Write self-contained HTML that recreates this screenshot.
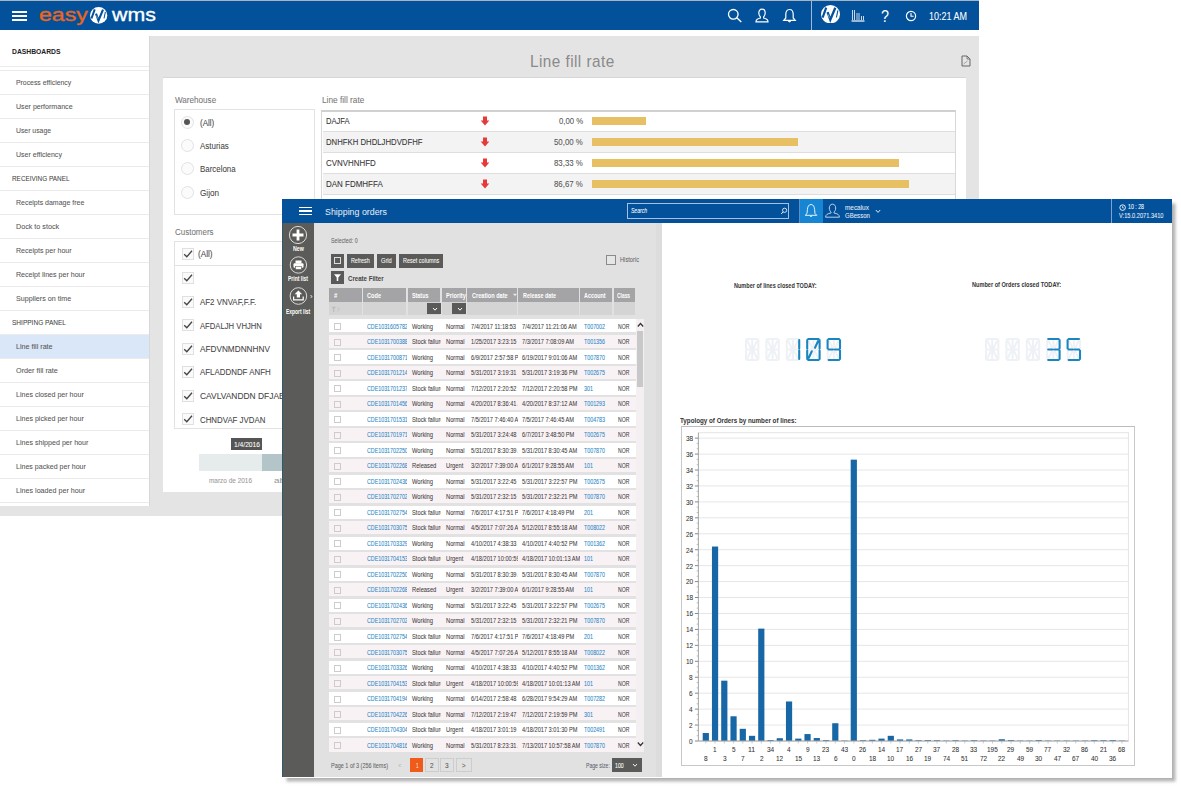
<!DOCTYPE html><html><head><meta charset="utf-8"><style>html,body{margin:0;padding:0;width:1181px;height:787px;overflow:hidden;background:#fff;position:relative}body{font-family:'Liberation Sans',sans-serif}</style></head><body><div style="position:absolute;left:0.00px;top:0.00px;width:979.00px;height:1.00px;background:#a8b4c2;"></div>
<div style="position:absolute;left:0.00px;top:1.00px;width:979.00px;height:29.00px;background:#02519a;"></div>
<div style="position:absolute;left:12.00px;top:11.00px;width:15.00px;height:1.60px;background:#fff;"></div>
<div style="position:absolute;left:12.00px;top:15.00px;width:15.00px;height:1.60px;background:#fff;"></div>
<div style="position:absolute;left:12.00px;top:19.00px;width:15.00px;height:1.60px;background:#fff;"></div>
<span style="position:absolute;left:39.40px;top:7.00px;white-space:pre;font-family:'Liberation Sans',sans-serif;font-size:17.50px;line-height:17.50px;font-weight:400;font-style:normal;color:#e8661e;letter-spacing:0px;-webkit-text-stroke:0.35px #e8661e;transform-origin:0 0;transform:scaleX(1.3173)">easy</span>
<span style="position:absolute;left:111.50px;top:7.00px;white-space:pre;font-family:'Liberation Sans',sans-serif;font-size:17.50px;line-height:17.50px;font-weight:400;font-style:normal;color:#fff;letter-spacing:0px;-webkit-text-stroke:0.3px #fff;transform-origin:0 0;transform:scaleX(1.2177)">wms</span>
<svg style="position:absolute;left:90.3px;top:7.2px" width="17.3" height="16.8" viewBox="0 0 19 18.4" preserveAspectRatio="none"><ellipse cx="9.5" cy="9.2" rx="9.5" ry="9.2" fill="#fff"/><path d="M5.2 2.6 L1.6 12.6" stroke="#02519a" stroke-width="2.2" fill="none"/><path d="M6.6 7.2 L9.3 14.8 L14.3 2.8" stroke="#02519a" stroke-width="2.3" fill="none" stroke-linejoin="miter"/><path d="M16.9 5.3 L15.4 12.5" stroke="#02519a" stroke-width="1.1" fill="none"/><path d="M7.2 9.5 L8.4 12.8" stroke="#fff" stroke-width="0.5" fill="none"/></svg>
<svg style="position:absolute;left:727px;top:8px" width="16" height="15" viewBox="0 0 16 15"><circle cx="6.3" cy="6.3" r="4.8" fill="none" stroke="#fff" stroke-width="1.3"/><path d="M9.8 9.8 L14.3 14" stroke="#fff" stroke-width="1.4"/></svg>
<svg style="position:absolute;left:754px;top:8px" width="16" height="15" viewBox="0 0 16 15"><path d="M8 1.2 C5.8 1.2 4.8 3 4.8 5 C4.8 6.8 5.6 8.2 6.4 9 L6.4 10 C3.5 10.6 2 11.5 2 13.8 L14 13.8 C14 11.5 12.5 10.6 9.6 10 L9.6 9 C10.4 8.2 11.2 6.8 11.2 5 C11.2 3 10.2 1.2 8 1.2 Z" fill="none" stroke="#fff" stroke-width="1.2"/></svg>
<svg style="position:absolute;left:782px;top:8px" width="15" height="15" viewBox="0 0 15 15"><path d="M7.5 1.5 C4.8 1.5 3.8 3.8 3.8 6.5 L3.8 10 L1.8 12.3 L13.2 12.3 L11.2 10 L11.2 6.5 C11.2 3.8 10.2 1.5 7.5 1.5 Z" fill="none" stroke="#fff" stroke-width="1.2"/><path d="M6 13 L7.5 14 L9 13" fill="#fff" stroke="#fff" stroke-width="0.8"/></svg>
<div style="position:absolute;left:811.00px;top:1.00px;width:1.00px;height:29.00px;background:#9fb8d6;"></div>
<svg style="position:absolute;left:820.9px;top:5.1px" width="19" height="18.4" viewBox="0 0 19 18.4" preserveAspectRatio="none"><ellipse cx="9.5" cy="9.2" rx="9.5" ry="9.2" fill="#fff"/><path d="M5.2 2.6 L1.6 12.6" stroke="#02519a" stroke-width="2.2" fill="none"/><path d="M6.6 7.2 L9.3 14.8 L14.3 2.8" stroke="#02519a" stroke-width="2.3" fill="none" stroke-linejoin="miter"/><path d="M16.9 5.3 L15.4 12.5" stroke="#02519a" stroke-width="1.1" fill="none"/><path d="M7.2 9.5 L8.4 12.8" stroke="#fff" stroke-width="0.5" fill="none"/></svg>
<svg style="position:absolute;left:850px;top:8px" width="16" height="15" viewBox="0 0 16 15"><path d="M2.5 12 L2.5 2 M4.5 12 L4.5 2 M7 12 L7 5 M9 12 L9 5 M11.5 12 L11.5 8 M13.5 12 L13.5 8" stroke="#c9d7ea" stroke-width="1"/><path d="M1.5 13 L14.5 13" stroke="#fff" stroke-width="1.2"/></svg>
<span style="position:absolute;left:880.50px;top:8.00px;white-space:pre;font-family:'Liberation Sans',sans-serif;font-size:17.00px;line-height:17.00px;font-weight:400;font-style:normal;color:#fff;letter-spacing:0px;transform-origin:0 0;transform:scaleX(0.8449)">?</span>
<svg style="position:absolute;left:905px;top:10px" width="12" height="12" viewBox="0 0 12 12"><circle cx="6" cy="6" r="4.6" fill="none" stroke="#fff" stroke-width="1.2"/><path d="M6 3 L6 6.3 L8.6 6.3" fill="none" stroke="#fff" stroke-width="1.1"/></svg>
<span style="position:absolute;left:929.00px;top:11.00px;white-space:pre;font-family:'Liberation Sans',sans-serif;font-size:10.50px;line-height:10.50px;font-weight:400;font-style:normal;color:#fff;letter-spacing:0px;-webkit-text-stroke:0.06px #fff;transform-origin:0 0;transform:scaleX(0.8563)">10:21 AM</span>
<div style="position:absolute;left:149.00px;top:36.00px;width:830.00px;height:480.00px;background:#e4e4e4;"></div>
<div style="position:absolute;left:0.00px;top:505.50px;width:979.00px;height:10.50px;background:#e4e4e4;"></div>
<div style="position:absolute;left:0.00px;top:30.00px;width:149.00px;height:475.50px;background:#fff;"></div>
<div style="position:absolute;left:148.50px;top:36.00px;width:1.00px;height:469.50px;background:#d8d8d8;"></div>
<span style="position:absolute;left:12.20px;top:48.00px;white-space:pre;font-family:'Liberation Sans',sans-serif;font-size:7.40px;line-height:7.40px;font-weight:700;font-style:normal;color:#222;letter-spacing:0px;transform-origin:0 0;transform:scaleX(0.9137)">DASHBOARDS</span>
<div style="position:absolute;left:0.00px;top:65.50px;width:148.50px;height:1.00px;background:#ebebeb;"></div>
<div style="position:absolute;left:0.00px;top:70.30px;width:148.50px;height:1.00px;background:#ebebeb;"></div>
<div style="position:absolute;left:0.00px;top:94.30px;width:148.50px;height:1.00px;background:#ebebeb;"></div>
<span style="position:absolute;left:16.00px;top:79.00px;white-space:pre;font-family:'Liberation Sans',sans-serif;font-size:8.00px;line-height:8.00px;font-weight:400;font-style:normal;color:#555;letter-spacing:0px;-webkit-text-stroke:0.06px #555;transform-origin:0 0;transform:scaleX(0.8581)">Process efficiency</span>
<div style="position:absolute;left:0.00px;top:118.30px;width:148.50px;height:1.00px;background:#ebebeb;"></div>
<span style="position:absolute;left:16.00px;top:103.00px;white-space:pre;font-family:'Liberation Sans',sans-serif;font-size:8.00px;line-height:8.00px;font-weight:400;font-style:normal;color:#555;letter-spacing:0px;-webkit-text-stroke:0.06px #555;transform-origin:0 0;transform:scaleX(0.8839)">User performance</span>
<div style="position:absolute;left:0.00px;top:142.30px;width:148.50px;height:1.00px;background:#ebebeb;"></div>
<span style="position:absolute;left:16.00px;top:127.00px;white-space:pre;font-family:'Liberation Sans',sans-serif;font-size:8.00px;line-height:8.00px;font-weight:400;font-style:normal;color:#555;letter-spacing:0px;-webkit-text-stroke:0.06px #555;transform-origin:0 0;transform:scaleX(0.8553)">User usage</span>
<div style="position:absolute;left:0.00px;top:166.30px;width:148.50px;height:1.00px;background:#ebebeb;"></div>
<span style="position:absolute;left:16.00px;top:151.00px;white-space:pre;font-family:'Liberation Sans',sans-serif;font-size:8.00px;line-height:8.00px;font-weight:400;font-style:normal;color:#555;letter-spacing:0px;-webkit-text-stroke:0.06px #555;transform-origin:0 0;transform:scaleX(0.8772)">User efficiency</span>
<div style="position:absolute;left:0.00px;top:190.30px;width:148.50px;height:1.00px;background:#ebebeb;"></div>
<span style="position:absolute;left:11.90px;top:175.00px;white-space:pre;font-family:'Liberation Sans',sans-serif;font-size:7.60px;line-height:7.60px;font-weight:400;font-style:normal;color:#444;letter-spacing:0px;-webkit-text-stroke:0.06px #444;transform-origin:0 0;transform:scaleX(0.8427)">RECEIVING PANEL</span>
<div style="position:absolute;left:0.00px;top:214.30px;width:148.50px;height:1.00px;background:#ebebeb;"></div>
<span style="position:absolute;left:16.00px;top:199.00px;white-space:pre;font-family:'Liberation Sans',sans-serif;font-size:8.00px;line-height:8.00px;font-weight:400;font-style:normal;color:#555;letter-spacing:0px;-webkit-text-stroke:0.06px #555;transform-origin:0 0;transform:scaleX(0.8727)">Receipts damage free</span>
<div style="position:absolute;left:0.00px;top:238.30px;width:148.50px;height:1.00px;background:#ebebeb;"></div>
<span style="position:absolute;left:16.00px;top:223.00px;white-space:pre;font-family:'Liberation Sans',sans-serif;font-size:8.00px;line-height:8.00px;font-weight:400;font-style:normal;color:#555;letter-spacing:0px;-webkit-text-stroke:0.06px #555;transform-origin:0 0;transform:scaleX(0.8976)">Dock to stock</span>
<div style="position:absolute;left:0.00px;top:262.30px;width:148.50px;height:1.00px;background:#ebebeb;"></div>
<span style="position:absolute;left:16.00px;top:247.00px;white-space:pre;font-family:'Liberation Sans',sans-serif;font-size:8.00px;line-height:8.00px;font-weight:400;font-style:normal;color:#555;letter-spacing:0px;-webkit-text-stroke:0.06px #555;transform-origin:0 0;transform:scaleX(0.8804)">Receipts per hour</span>
<div style="position:absolute;left:0.00px;top:286.30px;width:148.50px;height:1.00px;background:#ebebeb;"></div>
<span style="position:absolute;left:16.00px;top:271.00px;white-space:pre;font-family:'Liberation Sans',sans-serif;font-size:8.00px;line-height:8.00px;font-weight:400;font-style:normal;color:#555;letter-spacing:0px;-webkit-text-stroke:0.06px #555;transform-origin:0 0;transform:scaleX(0.8853)">Receipt lines per hour</span>
<div style="position:absolute;left:0.00px;top:310.30px;width:148.50px;height:1.00px;background:#ebebeb;"></div>
<span style="position:absolute;left:16.00px;top:295.00px;white-space:pre;font-family:'Liberation Sans',sans-serif;font-size:8.00px;line-height:8.00px;font-weight:400;font-style:normal;color:#555;letter-spacing:0px;-webkit-text-stroke:0.06px #555;transform-origin:0 0;transform:scaleX(0.8930)">Suppliers on time</span>
<div style="position:absolute;left:0.00px;top:334.30px;width:148.50px;height:1.00px;background:#ebebeb;"></div>
<span style="position:absolute;left:11.90px;top:319.00px;white-space:pre;font-family:'Liberation Sans',sans-serif;font-size:7.60px;line-height:7.60px;font-weight:400;font-style:normal;color:#444;letter-spacing:0px;-webkit-text-stroke:0.06px #444;transform-origin:0 0;transform:scaleX(0.8606)">SHIPPING PANEL</span>
<div style="position:absolute;left:0.00px;top:335.00px;width:148.50px;height:23.30px;background:#d9e7f8;"></div>
<div style="position:absolute;left:0.00px;top:358.30px;width:148.50px;height:1.00px;background:#ebebeb;"></div>
<span style="position:absolute;left:16.00px;top:343.00px;white-space:pre;font-family:'Liberation Sans',sans-serif;font-size:8.00px;line-height:8.00px;font-weight:400;font-style:normal;color:#555;letter-spacing:0px;-webkit-text-stroke:0.06px #555;transform-origin:0 0;transform:scaleX(0.8944)">Line fill rate</span>
<div style="position:absolute;left:0.00px;top:382.30px;width:148.50px;height:1.00px;background:#ebebeb;"></div>
<span style="position:absolute;left:16.00px;top:367.00px;white-space:pre;font-family:'Liberation Sans',sans-serif;font-size:8.00px;line-height:8.00px;font-weight:400;font-style:normal;color:#555;letter-spacing:0px;-webkit-text-stroke:0.06px #555;transform-origin:0 0;transform:scaleX(0.9063)">Order fill rate</span>
<div style="position:absolute;left:0.00px;top:406.30px;width:148.50px;height:1.00px;background:#ebebeb;"></div>
<span style="position:absolute;left:16.00px;top:391.00px;white-space:pre;font-family:'Liberation Sans',sans-serif;font-size:8.00px;line-height:8.00px;font-weight:400;font-style:normal;color:#555;letter-spacing:0px;-webkit-text-stroke:0.06px #555;transform-origin:0 0;transform:scaleX(0.8863)">Lines closed per hour</span>
<div style="position:absolute;left:0.00px;top:430.30px;width:148.50px;height:1.00px;background:#ebebeb;"></div>
<span style="position:absolute;left:16.00px;top:415.00px;white-space:pre;font-family:'Liberation Sans',sans-serif;font-size:8.00px;line-height:8.00px;font-weight:400;font-style:normal;color:#555;letter-spacing:0px;-webkit-text-stroke:0.06px #555;transform-origin:0 0;transform:scaleX(0.8863)">Lines picked per hour</span>
<div style="position:absolute;left:0.00px;top:454.30px;width:148.50px;height:1.00px;background:#ebebeb;"></div>
<span style="position:absolute;left:16.00px;top:439.00px;white-space:pre;font-family:'Liberation Sans',sans-serif;font-size:8.00px;line-height:8.00px;font-weight:400;font-style:normal;color:#555;letter-spacing:0px;-webkit-text-stroke:0.06px #555;transform-origin:0 0;transform:scaleX(0.8895)">Lines shipped per hour</span>
<div style="position:absolute;left:0.00px;top:478.30px;width:148.50px;height:1.00px;background:#ebebeb;"></div>
<span style="position:absolute;left:16.00px;top:463.00px;white-space:pre;font-family:'Liberation Sans',sans-serif;font-size:8.00px;line-height:8.00px;font-weight:400;font-style:normal;color:#555;letter-spacing:0px;-webkit-text-stroke:0.06px #555;transform-origin:0 0;transform:scaleX(0.8829)">Lines packed per hour</span>
<div style="position:absolute;left:0.00px;top:502.30px;width:148.50px;height:1.00px;background:#ebebeb;"></div>
<span style="position:absolute;left:16.00px;top:487.00px;white-space:pre;font-family:'Liberation Sans',sans-serif;font-size:8.00px;line-height:8.00px;font-weight:400;font-style:normal;color:#555;letter-spacing:0px;-webkit-text-stroke:0.06px #555;transform-origin:0 0;transform:scaleX(0.8929)">Lines loaded per hour</span>
<div style="position:absolute;left:162.50px;top:77.00px;width:803.50px;height:415.00px;background:#fff;border-top:1px solid #d6d6d6;box-sizing:border-box"></div>
<span style="position:absolute;left:530.40px;top:53.00px;white-space:pre;font-family:'Liberation Sans',sans-serif;font-size:17.00px;line-height:17.00px;font-weight:400;font-style:normal;color:#8a8a8a;letter-spacing:0.5px;transform-origin:0 0;transform:scaleX(0.9006)">Line fill rate</span>
<svg style="position:absolute;left:961px;top:55px" width="10" height="12" viewBox="0 0 10 12"><path d="M1 1 L6 1 L9 4 L9 11 L1 11 Z" fill="none" stroke="#666" stroke-width="1"/><path d="M6 1 L6 4 L9 4" fill="none" stroke="#666" stroke-width="0.8"/><path d="M2.5 9 L6.5 6" stroke="#888" stroke-width="0.7"/></svg>
<span style="position:absolute;left:174.70px;top:96.00px;white-space:pre;font-family:'Liberation Sans',sans-serif;font-size:8.40px;line-height:8.40px;font-weight:400;font-style:normal;color:#777;letter-spacing:0px;-webkit-text-stroke:0.06px #777;transform-origin:0 0;transform:scaleX(0.9687)">Warehouse</span>
<span style="position:absolute;left:321.50px;top:96.00px;white-space:pre;font-family:'Liberation Sans',sans-serif;font-size:8.40px;line-height:8.40px;font-weight:400;font-style:normal;color:#777;letter-spacing:0px;-webkit-text-stroke:0.06px #777;transform-origin:0 0;transform:scaleX(0.9877)">Line fill rate</span>
<div style="position:absolute;left:174.30px;top:109.30px;width:140.80px;height:105.50px;background:#fff;border:1px solid #e3e3e3;box-sizing:border-box"></div>
<div style="position:absolute;left:180.70px;top:115.70px;width:13px;height:13px;border-radius:50%;border:1px solid #e2e2e2;box-sizing:border-box;background:#fbfbfb"></div>
<div style="position:absolute;left:184.20px;top:119.20px;width:6px;height:6px;border-radius:50%;background:#555"></div>
<span style="position:absolute;left:199.70px;top:119.00px;white-space:pre;font-family:'Liberation Sans',sans-serif;font-size:8.60px;line-height:8.60px;font-weight:400;font-style:normal;color:#444;letter-spacing:0px;-webkit-text-stroke:0.06px #444;transform-origin:0 0;transform:scaleX(0.9358)">(All)</span>
<div style="position:absolute;left:180.70px;top:139.03px;width:13px;height:13px;border-radius:50%;border:1px solid #e2e2e2;box-sizing:border-box;background:#fbfbfb"></div>
<span style="position:absolute;left:199.70px;top:142.00px;white-space:pre;font-family:'Liberation Sans',sans-serif;font-size:8.60px;line-height:8.60px;font-weight:400;font-style:normal;color:#444;letter-spacing:0px;-webkit-text-stroke:0.06px #444;transform-origin:0 0;transform:scaleX(0.9276)">Asturias</span>
<div style="position:absolute;left:180.70px;top:162.36px;width:13px;height:13px;border-radius:50%;border:1px solid #e2e2e2;box-sizing:border-box;background:#fbfbfb"></div>
<span style="position:absolute;left:199.70px;top:165.00px;white-space:pre;font-family:'Liberation Sans',sans-serif;font-size:8.60px;line-height:8.60px;font-weight:400;font-style:normal;color:#444;letter-spacing:0px;-webkit-text-stroke:0.06px #444;transform-origin:0 0;transform:scaleX(0.9198)">Barcelona</span>
<div style="position:absolute;left:180.70px;top:185.69px;width:13px;height:13px;border-radius:50%;border:1px solid #e2e2e2;box-sizing:border-box;background:#fbfbfb"></div>
<span style="position:absolute;left:199.70px;top:189.00px;white-space:pre;font-family:'Liberation Sans',sans-serif;font-size:8.60px;line-height:8.60px;font-weight:400;font-style:normal;color:#444;letter-spacing:0px;-webkit-text-stroke:0.06px #444;transform-origin:0 0;transform:scaleX(0.9470)">Gijon</span>
<span style="position:absolute;left:174.80px;top:228.00px;white-space:pre;font-family:'Liberation Sans',sans-serif;font-size:8.40px;line-height:8.40px;font-weight:400;font-style:normal;color:#777;letter-spacing:0px;-webkit-text-stroke:0.06px #777;transform-origin:0 0;transform:scaleX(0.9531)">Customers</span>
<div style="position:absolute;left:174.30px;top:241.20px;width:145.70px;height:187.80px;background:#fff;border:1px solid #e3e3e3;box-sizing:border-box"></div>
<div style="position:absolute;left:174.30px;top:265.00px;width:145.70px;height:1.00px;background:#e2e2e2;"></div>
<div style="position:absolute;left:181.5px;top:247.50px;width:12px;height:12px;border:1px solid #e0e0e0;box-sizing:border-box;background:#fafafa"></div>
<svg style="position:absolute;left:181.5px;top:247.50px" width="12" height="12" viewBox="0 0 12 12"><path d="M2.2 6.2 L4.8 8.8 L10 2.8" fill="none" stroke="#444" stroke-width="1.3"/></svg>
<span style="position:absolute;left:197.60px;top:250.00px;white-space:pre;font-family:'Liberation Sans',sans-serif;font-size:8.60px;line-height:8.60px;font-weight:400;font-style:normal;color:#444;letter-spacing:0px;-webkit-text-stroke:0.06px #444;transform-origin:0 0;transform:scaleX(0.9554)">(All)</span>
<div style="position:absolute;left:181.5px;top:272.00px;width:12px;height:12px;border:1px solid #e0e0e0;box-sizing:border-box;background:#fafafa"></div>
<svg style="position:absolute;left:181.5px;top:272.00px" width="12" height="12" viewBox="0 0 12 12"><path d="M2.2 6.2 L4.8 8.8 L10 2.8" fill="none" stroke="#444" stroke-width="1.3"/></svg>
<div style="position:absolute;left:181.5px;top:295.50px;width:12px;height:12px;border:1px solid #e0e0e0;box-sizing:border-box;background:#fafafa"></div>
<svg style="position:absolute;left:181.5px;top:295.50px" width="12" height="12" viewBox="0 0 12 12"><path d="M2.2 6.2 L4.8 8.8 L10 2.8" fill="none" stroke="#444" stroke-width="1.3"/></svg>
<span style="position:absolute;left:199.70px;top:298.00px;white-space:pre;font-family:'Liberation Sans',sans-serif;font-size:8.60px;line-height:8.60px;font-weight:400;font-style:normal;color:#444;letter-spacing:0px;-webkit-text-stroke:0.06px #444;transform-origin:0 0;transform:scaleX(0.9201)">AF2 VNVAF,F.F.</span>
<div style="position:absolute;left:181.5px;top:319.00px;width:12px;height:12px;border:1px solid #e0e0e0;box-sizing:border-box;background:#fafafa"></div>
<svg style="position:absolute;left:181.5px;top:319.00px" width="12" height="12" viewBox="0 0 12 12"><path d="M2.2 6.2 L4.8 8.8 L10 2.8" fill="none" stroke="#444" stroke-width="1.3"/></svg>
<span style="position:absolute;left:199.70px;top:322.00px;white-space:pre;font-family:'Liberation Sans',sans-serif;font-size:8.60px;line-height:8.60px;font-weight:400;font-style:normal;color:#444;letter-spacing:0px;-webkit-text-stroke:0.06px #444;transform-origin:0 0;transform:scaleX(0.8939)">AFDALJH VHJHN</span>
<div style="position:absolute;left:181.5px;top:342.50px;width:12px;height:12px;border:1px solid #e0e0e0;box-sizing:border-box;background:#fafafa"></div>
<svg style="position:absolute;left:181.5px;top:342.50px" width="12" height="12" viewBox="0 0 12 12"><path d="M2.2 6.2 L4.8 8.8 L10 2.8" fill="none" stroke="#444" stroke-width="1.3"/></svg>
<span style="position:absolute;left:199.70px;top:345.00px;white-space:pre;font-family:'Liberation Sans',sans-serif;font-size:8.60px;line-height:8.60px;font-weight:400;font-style:normal;color:#444;letter-spacing:0px;-webkit-text-stroke:0.06px #444;transform-origin:0 0;transform:scaleX(0.9569)">AFDVNMDNNHNV</span>
<div style="position:absolute;left:181.5px;top:366.00px;width:12px;height:12px;border:1px solid #e0e0e0;box-sizing:border-box;background:#fafafa"></div>
<svg style="position:absolute;left:181.5px;top:366.00px" width="12" height="12" viewBox="0 0 12 12"><path d="M2.2 6.2 L4.8 8.8 L10 2.8" fill="none" stroke="#444" stroke-width="1.3"/></svg>
<span style="position:absolute;left:199.70px;top:368.00px;white-space:pre;font-family:'Liberation Sans',sans-serif;font-size:8.60px;line-height:8.60px;font-weight:400;font-style:normal;color:#444;letter-spacing:0px;-webkit-text-stroke:0.06px #444;transform-origin:0 0;transform:scaleX(0.9197)">AFLADDNDF ANFH</span>
<div style="position:absolute;left:181.5px;top:389.50px;width:12px;height:12px;border:1px solid #e0e0e0;box-sizing:border-box;background:#fafafa"></div>
<svg style="position:absolute;left:181.5px;top:389.50px" width="12" height="12" viewBox="0 0 12 12"><path d="M2.2 6.2 L4.8 8.8 L10 2.8" fill="none" stroke="#444" stroke-width="1.3"/></svg>
<span style="position:absolute;left:199.70px;top:392.00px;white-space:pre;font-family:'Liberation Sans',sans-serif;font-size:8.60px;line-height:8.60px;font-weight:400;font-style:normal;color:#444;letter-spacing:0px;-webkit-text-stroke:0.06px #444;transform-origin:0 0;transform:scaleX(0.9797)">CAVLVANDDN DFJABA</span>
<div style="position:absolute;left:181.5px;top:413.00px;width:12px;height:12px;border:1px solid #e0e0e0;box-sizing:border-box;background:#fafafa"></div>
<svg style="position:absolute;left:181.5px;top:413.00px" width="12" height="12" viewBox="0 0 12 12"><path d="M2.2 6.2 L4.8 8.8 L10 2.8" fill="none" stroke="#444" stroke-width="1.3"/></svg>
<span style="position:absolute;left:199.70px;top:416.00px;white-space:pre;font-family:'Liberation Sans',sans-serif;font-size:8.60px;line-height:8.60px;font-weight:400;font-style:normal;color:#444;letter-spacing:0px;-webkit-text-stroke:0.06px #444;transform-origin:0 0;transform:scaleX(0.9151)">CHNDVAF JVDAN</span>
<div style="position:absolute;left:321.00px;top:110.00px;width:635.00px;height:95.00px;background:#fff;border:1px solid #d8d8d8;border-top:2px solid #d0d0d0;box-sizing:border-box"></div>
<div style="position:absolute;left:322.50px;top:131.30px;width:632.50px;height:1.00px;background:#dedede;"></div>
<span style="position:absolute;left:326.00px;top:117.00px;white-space:pre;font-family:'Liberation Sans',sans-serif;font-size:8.60px;line-height:8.60px;font-weight:400;font-style:normal;color:#333;letter-spacing:0px;-webkit-text-stroke:0.06px #333;transform-origin:0 0;transform:scaleX(0.8822)">DAJFA</span>
<svg style="position:absolute;left:480px;top:116.00px" width="10" height="10" viewBox="0 0 10 10"><path d="M3 0.5 L7 0.5 L7 4.5 L9.3 4.5 L5 9.5 L0.7 4.5 L3 4.5 Z" fill="#e53a3a"/></svg>
<span style="position:absolute;left:558.60px;top:117.00px;white-space:pre;font-family:'Liberation Sans',sans-serif;font-size:8.60px;line-height:8.60px;font-weight:400;font-style:normal;color:#555;letter-spacing:0px;-webkit-text-stroke:0.06px #555;transform-origin:0 0;transform:scaleX(0.9041)">0,00 %</span>
<div style="position:absolute;left:592.10px;top:117.30px;width:53.90px;height:7.60px;background:#e8c064;"></div>
<div style="position:absolute;left:322.50px;top:132.30px;width:632.50px;height:20.00px;background:#f3f3f3;"></div>
<div style="position:absolute;left:322.50px;top:152.30px;width:632.50px;height:1.00px;background:#dedede;"></div>
<span style="position:absolute;left:326.00px;top:138.00px;white-space:pre;font-family:'Liberation Sans',sans-serif;font-size:8.60px;line-height:8.60px;font-weight:400;font-style:normal;color:#333;letter-spacing:0px;-webkit-text-stroke:0.06px #333;transform-origin:0 0;transform:scaleX(0.9023)">DNHFKH DHDLJHDVDFHF</span>
<svg style="position:absolute;left:480px;top:137.00px" width="10" height="10" viewBox="0 0 10 10"><path d="M3 0.5 L7 0.5 L7 4.5 L9.3 4.5 L5 9.5 L0.7 4.5 L3 4.5 Z" fill="#e53a3a"/></svg>
<span style="position:absolute;left:554.00px;top:138.00px;white-space:pre;font-family:'Liberation Sans',sans-serif;font-size:8.60px;line-height:8.60px;font-weight:400;font-style:normal;color:#555;letter-spacing:0px;-webkit-text-stroke:0.06px #555;transform-origin:0 0;transform:scaleX(0.9129)">50,00 %</span>
<div style="position:absolute;left:592.10px;top:138.30px;width:205.50px;height:7.60px;background:#e8c064;"></div>
<div style="position:absolute;left:322.50px;top:173.30px;width:632.50px;height:1.00px;background:#dedede;"></div>
<span style="position:absolute;left:326.00px;top:159.00px;white-space:pre;font-family:'Liberation Sans',sans-serif;font-size:8.60px;line-height:8.60px;font-weight:400;font-style:normal;color:#333;letter-spacing:0px;-webkit-text-stroke:0.06px #333;transform-origin:0 0;transform:scaleX(0.9212)">CVNVHNHFD</span>
<svg style="position:absolute;left:480px;top:158.00px" width="10" height="10" viewBox="0 0 10 10"><path d="M3 0.5 L7 0.5 L7 4.5 L9.3 4.5 L5 9.5 L0.7 4.5 L3 4.5 Z" fill="#e53a3a"/></svg>
<span style="position:absolute;left:554.00px;top:159.00px;white-space:pre;font-family:'Liberation Sans',sans-serif;font-size:8.60px;line-height:8.60px;font-weight:400;font-style:normal;color:#555;letter-spacing:0px;-webkit-text-stroke:0.06px #555;transform-origin:0 0;transform:scaleX(0.9129)">83,33 %</span>
<div style="position:absolute;left:592.10px;top:159.30px;width:306.70px;height:7.60px;background:#e8c064;"></div>
<div style="position:absolute;left:322.50px;top:174.30px;width:632.50px;height:20.00px;background:#f3f3f3;"></div>
<div style="position:absolute;left:322.50px;top:194.30px;width:632.50px;height:1.00px;background:#dedede;"></div>
<span style="position:absolute;left:326.00px;top:180.00px;white-space:pre;font-family:'Liberation Sans',sans-serif;font-size:8.60px;line-height:8.60px;font-weight:400;font-style:normal;color:#333;letter-spacing:0px;-webkit-text-stroke:0.06px #333;transform-origin:0 0;transform:scaleX(0.9278)">DAN FDMHFFA</span>
<svg style="position:absolute;left:480px;top:179.00px" width="10" height="10" viewBox="0 0 10 10"><path d="M3 0.5 L7 0.5 L7 4.5 L9.3 4.5 L5 9.5 L0.7 4.5 L3 4.5 Z" fill="#e53a3a"/></svg>
<span style="position:absolute;left:554.00px;top:180.00px;white-space:pre;font-family:'Liberation Sans',sans-serif;font-size:8.60px;line-height:8.60px;font-weight:400;font-style:normal;color:#555;letter-spacing:0px;-webkit-text-stroke:0.06px #555;transform-origin:0 0;transform:scaleX(0.9129)">86,67 %</span>
<div style="position:absolute;left:592.10px;top:180.30px;width:317.30px;height:7.60px;background:#e8c064;"></div>
<div style="position:absolute;left:199px;top:453.6px;width:63px;height:17.6px;background:#e6ebec"></div>
<div style="position:absolute;left:262px;top:453.6px;width:25px;height:17.6px;background:#b3c5c9"></div>
<div style="position:absolute;left:231.00px;top:438.30px;width:31.00px;height:11.30px;background:#555;"></div>
<span style="position:absolute;left:233.50px;top:441.00px;white-space:pre;font-family:'Liberation Sans',sans-serif;font-size:7.30px;line-height:7.30px;font-weight:400;font-style:normal;color:#fff;letter-spacing:0px;-webkit-text-stroke:0.06px #fff;transform-origin:0 0;transform:scaleX(0.9153)">1/4/2016</span>
<span style="position:absolute;left:209.00px;top:477.00px;white-space:pre;font-family:'Liberation Sans',sans-serif;font-size:7.00px;line-height:7.00px;font-weight:400;font-style:normal;color:#999;letter-spacing:0px;-webkit-text-stroke:0.06px #999;transform-origin:0 0;transform:scaleX(0.9207)">marzo de 2016</span>
<span style="position:absolute;left:274.00px;top:477.00px;white-space:pre;font-family:'Liberation Sans',sans-serif;font-size:7.00px;line-height:7.00px;font-weight:400;font-style:normal;color:#999;letter-spacing:0px;-webkit-text-stroke:0.06px #999;transform-origin:0 0;transform:scaleX(1.4108)">ab</span>
<div style="position:absolute;left:282px;top:199px;width:890px;height:578.5px;background:#fff;box-shadow:3.5px 3.5px 3px rgba(0,0,0,0.3)"></div>
<div style="position:absolute;left:282.00px;top:199.00px;width:890.00px;height:23.70px;background:#02519a;"></div>
<div style="position:absolute;left:299.20px;top:206.90px;width:12.80px;height:1.30px;background:#fff;"></div>
<div style="position:absolute;left:299.20px;top:210.30px;width:12.80px;height:1.30px;background:#fff;"></div>
<div style="position:absolute;left:299.20px;top:213.60px;width:12.80px;height:1.30px;background:#fff;"></div>
<span style="position:absolute;left:324.90px;top:208.00px;white-space:pre;font-family:'Liberation Sans',sans-serif;font-size:9.20px;line-height:9.20px;font-weight:400;font-style:normal;color:#e8eef6;letter-spacing:0px;transform-origin:0 0;transform:scaleX(0.9633)">Shipping orders</span>
<div style="position:absolute;left:627px;top:203.3px;width:161.7px;height:15.6px;border:1px solid #a9bfdc;box-sizing:border-box"></div>
<span style="position:absolute;left:631.00px;top:208.00px;white-space:pre;font-family:'Liberation Sans',sans-serif;font-size:6.94px;line-height:6.94px;font-weight:400;font-style:italic;color:#fff;letter-spacing:0px;-webkit-text-stroke:0.06px #fff;transform-origin:0 0;transform:scaleX(0.7278)">Search</span>
<svg style="position:absolute;left:779.5px;top:206.5px" width="8" height="8" viewBox="0 0 8 8"><circle cx="4.6" cy="3.3" r="2.1" fill="none" stroke="#fff" stroke-width="0.8"/><path d="M3.1 4.9 L1.2 7" stroke="#fff" stroke-width="0.9"/></svg>
<div style="position:absolute;left:799.00px;top:199.00px;width:1.00px;height:23.70px;background:#5f8fc4;"></div>
<div style="position:absolute;left:800.00px;top:199.00px;width:23.00px;height:23.70px;background:#1585d4;"></div>
<svg style="position:absolute;left:804px;top:203px" width="14" height="15" viewBox="0 0 14 15"><path d="M7 1.5 C4.6 1.5 3.6 3.8 3.4 6.5 L3 10.5 L1.2 12.3 L12.8 12.3 L11 10.5 L10.6 6.5 C10.4 3.8 9.4 1.5 7 1.5 Z" fill="none" stroke="#fff" stroke-width="0.9"/><path d="M5.8 12.8 L7 13.8 L8.2 12.8" fill="none" stroke="#fff" stroke-width="0.8"/></svg>
<svg style="position:absolute;left:824px;top:203px" width="17" height="16" viewBox="0 0 17 16"><path d="M8.5 1.2 C6.4 1.2 5.3 2.9 5.3 5 C5.3 6.9 6.1 8.3 7 9.1 L7 10 C3.6 10.6 1.6 11.6 1.6 14.2 L15.4 14.2 C15.4 11.6 13.4 10.6 10 10 L10 9.1 C10.9 8.3 11.7 6.9 11.7 5 C11.7 2.9 10.6 1.2 8.5 1.2 Z" fill="none" stroke="#cfe0f3" stroke-width="0.9"/></svg>
<span style="position:absolute;left:845.00px;top:204.00px;white-space:pre;font-family:'Liberation Sans',sans-serif;font-size:7.06px;line-height:7.06px;font-weight:400;font-style:normal;color:#e6eef8;letter-spacing:0px;-webkit-text-stroke:0.06px #e6eef8;transform-origin:0 0;transform:scaleX(0.9105)">mecalux</span>
<span style="position:absolute;left:845.00px;top:212.00px;white-space:pre;font-family:'Liberation Sans',sans-serif;font-size:7.06px;line-height:7.06px;font-weight:400;font-style:normal;color:#e6eef8;letter-spacing:0px;-webkit-text-stroke:0.06px #e6eef8;transform-origin:0 0;transform:scaleX(0.8586)">GBesson</span>
<svg style="position:absolute;left:875px;top:209px" width="6" height="5" viewBox="0 0 6 5"><path d="M0.8 1 L3 3.4 L5.2 1" fill="none" stroke="#fff" stroke-width="0.9"/></svg>
<div style="position:absolute;left:1111.00px;top:199.00px;width:1.00px;height:23.70px;background:#7fa3cc;"></div>
<svg style="position:absolute;left:1118.5px;top:204px" width="8" height="8" viewBox="0 0 8 8"><circle cx="3.6" cy="3.6" r="2.8" fill="none" stroke="#fff" stroke-width="0.9"/><path d="M3.6 1.8 L3.6 3.9 L4.9 3.9" fill="none" stroke="#fff" stroke-width="0.7"/></svg>
<span style="position:absolute;left:1127.80px;top:204.00px;white-space:pre;font-family:'Liberation Sans',sans-serif;font-size:6.94px;line-height:6.94px;font-weight:400;font-style:normal;color:#fff;letter-spacing:0px;-webkit-text-stroke:0.06px #fff;transform-origin:0 0;transform:scaleX(0.7541)">10 : 28</span>
<span style="position:absolute;left:1119.20px;top:213.00px;white-space:pre;font-family:'Liberation Sans',sans-serif;font-size:6.72px;line-height:6.72px;font-weight:400;font-style:normal;color:#e6eef8;letter-spacing:0px;-webkit-text-stroke:0.06px #e6eef8;transform-origin:0 0;transform:scaleX(0.8426)">V:15.0.2071.3410</span>
<div style="position:absolute;left:282.00px;top:222.70px;width:31.80px;height:554.80px;background:#5b5c59;"></div>
<div style="position:absolute;left:282.00px;top:222.70px;width:1.00px;height:554.80px;background:#2d5a6a;"></div>
<svg style="position:absolute;left:288px;top:224.5px" width="20" height="20" viewBox="0 0 20 20"><circle cx="10" cy="10" r="8.6" fill="none" stroke="#e8e8e8" stroke-width="0.9"/><path d="M10 4.5 L10 15.5 M4.5 10 L15.5 10" stroke="#fff" stroke-width="2.8"/></svg>
<span style="position:absolute;left:292.90px;top:246.00px;white-space:pre;font-family:'Liberation Sans',sans-serif;font-size:6.27px;line-height:6.27px;font-weight:700;font-style:normal;color:#fff;letter-spacing:0px;transform-origin:0 0;transform:scaleX(0.8378)">New</span>
<svg style="position:absolute;left:289px;top:256px" width="19" height="19" viewBox="0 0 19 19"><circle cx="9.4" cy="9" r="8.2" fill="none" stroke="#e8e8e8" stroke-width="0.9"/><rect x="6.5" y="4.5" width="6" height="3" fill="#fff"/><rect x="4.5" y="7.2" width="10" height="4.5" rx="1" fill="#fff"/><rect x="6.5" y="10.5" width="6" height="3" fill="#fff" stroke="#5b5c59" stroke-width="0.6"/></svg>
<span style="position:absolute;left:287.90px;top:276.00px;white-space:pre;font-family:'Liberation Sans',sans-serif;font-size:6.50px;line-height:6.50px;font-weight:700;font-style:normal;color:#fff;letter-spacing:0px;transform-origin:0 0;transform:scaleX(0.7688)">Print list</span>
<svg style="position:absolute;left:289px;top:287px" width="19" height="19" viewBox="0 0 19 19"><circle cx="9.4" cy="9" r="8.3" fill="none" stroke="#e8e8e8" stroke-width="0.9"/><path d="M9.4 3.5 L13.2 7.3 L11 7.3 L11 10.5 L7.8 10.5 L7.8 7.3 L5.6 7.3 Z" fill="#fff"/><path d="M4.6 9.5 L4.6 12.8 L14.2 12.8 L14.2 9.5" fill="none" stroke="#fff" stroke-width="1.2"/></svg>
<span style="position:absolute;left:309.50px;top:294.00px;white-space:pre;font-family:'Liberation Sans',sans-serif;font-size:6.72px;line-height:6.72px;font-weight:400;font-style:normal;color:#eee;letter-spacing:0px;-webkit-text-stroke:0.06px #eee;transform-origin:0 0;transform:scaleX(1.1111)">›</span>
<span style="position:absolute;left:286.00px;top:309.00px;white-space:pre;font-family:'Liberation Sans',sans-serif;font-size:6.50px;line-height:6.50px;font-weight:700;font-style:normal;color:#fff;letter-spacing:0px;transform-origin:0 0;transform:scaleX(0.7611)">Export list</span>
<div style="position:absolute;left:313.80px;top:222.70px;width:348.20px;height:554.80px;background:#e1e1e1;"></div>
<div style="position:absolute;left:656.00px;top:222.70px;width:6.00px;height:554.80px;background:#dcdcdc;"></div>
<span style="position:absolute;left:331.00px;top:238.00px;white-space:pre;font-family:'Liberation Sans',sans-serif;font-size:6.50px;line-height:6.50px;font-weight:400;font-style:normal;color:#666;letter-spacing:0px;-webkit-text-stroke:0.06px #666;transform-origin:0 0;transform:scaleX(0.8177)">Selected: 0</span>
<div style="position:absolute;left:330.70px;top:253.80px;width:13.00px;height:13.80px;background:#5a5b58;"></div>
<div style="position:absolute;left:333.7px;top:257px;width:7px;height:7px;border:1px solid #ddd;box-sizing:border-box"></div>
<div style="position:absolute;left:347.00px;top:253.80px;width:27.00px;height:13.80px;background:#5a5b58;"></div>
<span style="position:absolute;left:350.80px;top:257.00px;white-space:pre;font-family:'Liberation Sans',sans-serif;font-size:7.06px;line-height:7.06px;font-weight:400;font-style:normal;color:#fff;letter-spacing:0px;-webkit-text-stroke:0.06px #fff;transform-origin:0 0;transform:scaleX(0.7575)">Refresh</span>
<div style="position:absolute;left:377.00px;top:253.80px;width:19.00px;height:13.80px;background:#5a5b58;"></div>
<span style="position:absolute;left:380.80px;top:257.00px;white-space:pre;font-family:'Liberation Sans',sans-serif;font-size:7.06px;line-height:7.06px;font-weight:400;font-style:normal;color:#fff;letter-spacing:0px;-webkit-text-stroke:0.06px #fff;transform-origin:0 0;transform:scaleX(0.8028)">Grid</span>
<div style="position:absolute;left:399.00px;top:253.80px;width:44.00px;height:13.80px;background:#5a5b58;"></div>
<span style="position:absolute;left:402.80px;top:257.00px;white-space:pre;font-family:'Liberation Sans',sans-serif;font-size:7.06px;line-height:7.06px;font-weight:400;font-style:normal;color:#fff;letter-spacing:0px;-webkit-text-stroke:0.06px #fff;transform-origin:0 0;transform:scaleX(0.7788)">Reset columns</span>
<div style="position:absolute;left:331.00px;top:271.40px;width:13.00px;height:13.00px;background:#5a5b58;"></div>
<svg style="position:absolute;left:333px;top:273px" width="9" height="9" viewBox="0 0 9 9"><path d="M1 1.2 L8 1.2 L5.3 4.6 L5.3 8 L3.7 8 L3.7 4.6 Z" fill="#fff"/></svg>
<span style="position:absolute;left:348.00px;top:276.00px;white-space:pre;font-family:'Liberation Sans',sans-serif;font-size:7.17px;line-height:7.17px;font-weight:700;font-style:normal;color:#444;letter-spacing:0px;transform-origin:0 0;transform:scaleX(0.8524)">Create Filter</span>
<div style="position:absolute;left:606px;top:255px;width:9.7px;height:9.7px;border:1px solid #8a8a8a;box-sizing:border-box;background:#e6e6e6"></div>
<span style="position:absolute;left:620.00px;top:257.00px;white-space:pre;font-family:'Liberation Sans',sans-serif;font-size:6.50px;line-height:6.50px;font-weight:400;font-style:normal;color:#666;letter-spacing:0px;-webkit-text-stroke:0.06px #666;transform-origin:0 0;transform:scaleX(0.8767)">Historic</span>
<div style="position:absolute;left:329.20px;top:288.30px;width:32.50px;height:13.60px;background:#a4a4a6;"></div>
<div style="position:absolute;left:329.20px;top:302.40px;width:32.50px;height:12.60px;background:#d4d4d4;"></div>
<span style="position:absolute;left:333.70px;top:293.00px;white-space:pre;font-family:'Liberation Sans',sans-serif;font-size:6.50px;line-height:6.50px;font-weight:700;font-style:normal;color:#fff;letter-spacing:0px;transform-origin:0 0;transform:scaleX(0.9103)">#</span>
<div style="position:absolute;left:363.20px;top:288.30px;width:42.80px;height:13.60px;background:#a4a4a6;"></div>
<div style="position:absolute;left:363.20px;top:302.40px;width:42.80px;height:12.60px;background:#d4d4d4;"></div>
<span style="position:absolute;left:367.00px;top:293.00px;white-space:pre;font-family:'Liberation Sans',sans-serif;font-size:6.50px;line-height:6.50px;font-weight:700;font-style:normal;color:#fff;letter-spacing:0px;transform-origin:0 0;transform:scaleX(0.8615)">Code</span>
<div style="position:absolute;left:407.50px;top:288.30px;width:32.90px;height:13.60px;background:#a4a4a6;"></div>
<div style="position:absolute;left:407.50px;top:302.40px;width:32.90px;height:12.60px;background:#d4d4d4;"></div>
<span style="position:absolute;left:412.00px;top:293.00px;white-space:pre;font-family:'Liberation Sans',sans-serif;font-size:6.50px;line-height:6.50px;font-weight:700;font-style:normal;color:#fff;letter-spacing:0px;transform-origin:0 0;transform:scaleX(0.8252)">Status</span>
<div style="position:absolute;left:441.50px;top:288.30px;width:24.70px;height:13.60px;background:#a4a4a6;"></div>
<div style="position:absolute;left:441.50px;top:302.40px;width:24.70px;height:12.60px;background:#d4d4d4;"></div>
<span style="position:absolute;left:445.70px;top:293.00px;white-space:pre;font-family:'Liberation Sans',sans-serif;font-size:6.50px;line-height:6.50px;font-weight:700;font-style:normal;color:#fff;letter-spacing:0px;transform-origin:0 0;transform:scaleX(0.8697)">Priority</span>
<div style="position:absolute;left:467.20px;top:288.30px;width:49.60px;height:13.60px;background:#a4a4a6;"></div>
<div style="position:absolute;left:467.20px;top:302.40px;width:49.60px;height:12.60px;background:#d4d4d4;"></div>
<span style="position:absolute;left:471.60px;top:293.00px;white-space:pre;font-family:'Liberation Sans',sans-serif;font-size:6.50px;line-height:6.50px;font-weight:700;font-style:normal;color:#fff;letter-spacing:0px;transform-origin:0 0;transform:scaleX(0.8569)">Creation date</span>
<div style="position:absolute;left:518.20px;top:288.30px;width:60.40px;height:13.60px;background:#a4a4a6;"></div>
<div style="position:absolute;left:518.20px;top:302.40px;width:60.40px;height:12.60px;background:#d4d4d4;"></div>
<span style="position:absolute;left:522.70px;top:293.00px;white-space:pre;font-family:'Liberation Sans',sans-serif;font-size:6.50px;line-height:6.50px;font-weight:700;font-style:normal;color:#fff;letter-spacing:0px;transform-origin:0 0;transform:scaleX(0.8302)">Release date</span>
<div style="position:absolute;left:580.00px;top:288.30px;width:32.20px;height:13.60px;background:#a4a4a6;"></div>
<div style="position:absolute;left:580.00px;top:302.40px;width:32.20px;height:12.60px;background:#d4d4d4;"></div>
<span style="position:absolute;left:583.90px;top:293.00px;white-space:pre;font-family:'Liberation Sans',sans-serif;font-size:6.50px;line-height:6.50px;font-weight:700;font-style:normal;color:#fff;letter-spacing:0px;transform-origin:0 0;transform:scaleX(0.8308)">Account</span>
<div style="position:absolute;left:613.60px;top:288.30px;width:21.50px;height:13.60px;background:#a4a4a6;"></div>
<div style="position:absolute;left:613.60px;top:302.40px;width:21.50px;height:12.60px;background:#d4d4d4;"></div>
<span style="position:absolute;left:617.30px;top:293.00px;white-space:pre;font-family:'Liberation Sans',sans-serif;font-size:6.50px;line-height:6.50px;font-weight:700;font-style:normal;color:#fff;letter-spacing:0px;transform-origin:0 0;transform:scaleX(0.7546)">Class</span>
<svg style="position:absolute;left:512.5px;top:293px" width="4" height="4" viewBox="0 0 4 4"><path d="M0 0.8 L4 0.8 L2 3.2 Z" fill="#e8e8e8"/></svg>
<div style="position:absolute;left:427.00px;top:303.20px;width:13.80px;height:11.30px;background:#5a5b58;"></div>
<div style="position:absolute;left:452.00px;top:303.20px;width:14.00px;height:11.30px;background:#5a5b58;"></div>
<svg style="position:absolute;left:431.5px;top:306.5px" width="6" height="5" viewBox="0 0 6 5"><path d="M1 1 L3 3.2 L5 1" fill="none" stroke="#fff" stroke-width="1"/></svg>
<svg style="position:absolute;left:456.5px;top:306.5px" width="6" height="5" viewBox="0 0 6 5"><path d="M1 1 L3 3.2 L5 1" fill="none" stroke="#fff" stroke-width="1"/></svg>
<svg style="position:absolute;left:331px;top:305.5px" width="10" height="7" viewBox="0 0 10 7"><path d="M0.5 0.8 L5 0.8 L3.3 3 L3.3 6 L2.2 6 L2.2 3 Z" fill="#bbb"/><path d="M6.5 1 L8.3 3.2 L6.5 5.4" fill="none" stroke="#bbb" stroke-width="0.8"/></svg>
<div style="position:absolute;left:328.60px;top:317.50px;width:315.40px;height:434.70px;background:#e2e2e2;"></div>
<div style="position:absolute;left:636.00px;top:319.30px;width:8.00px;height:432.90px;background:#f4eff1;"></div>
<div style="position:absolute;left:328.60px;top:319.30px;width:307.40px;height:13.20px;background:#ffffff;"></div>
<div style="position:absolute;left:334px;top:323px;width:7px;height:7px;border:1px solid #cccccc;box-sizing:border-box;background:#ffffff"></div>
<div style="position:absolute;left:363.00px;top:319.30px;width:44.20px;height:13.20px;overflow:hidden"><span style="position:absolute;left:4.00px;top:3.70px;white-space:pre;font-family:'Liberation Sans',sans-serif;font-size:7.39px;line-height:7.39px;font-weight:400;font-style:normal;color:#1f86c6;letter-spacing:0px;-webkit-text-stroke:0.06px #1f86c6;transform-origin:0 0;transform:scaleX(0.7209)">CDE1031605782</span></div>
<div style="position:absolute;left:407.50px;top:319.30px;width:33.50px;height:13.20px;overflow:hidden"><span style="position:absolute;left:4.70px;top:3.70px;white-space:pre;font-family:'Liberation Sans',sans-serif;font-size:7.39px;line-height:7.39px;font-weight:400;font-style:normal;color:#3c3c3c;letter-spacing:0px;-webkit-text-stroke:0.06px #3c3c3c;transform-origin:0 0;transform:scaleX(0.7800)">Working</span></div>
<div style="position:absolute;left:441.50px;top:319.30px;width:25.50px;height:13.20px;overflow:hidden"><span style="position:absolute;left:4.50px;top:3.70px;white-space:pre;font-family:'Liberation Sans',sans-serif;font-size:7.39px;line-height:7.39px;font-weight:400;font-style:normal;color:#3c3c3c;letter-spacing:0px;-webkit-text-stroke:0.06px #3c3c3c;transform-origin:0 0;transform:scaleX(0.7821)">Normal</span></div>
<div style="position:absolute;left:467.00px;top:319.30px;width:50.50px;height:13.20px;overflow:hidden"><span style="position:absolute;left:4.40px;top:3.70px;white-space:pre;font-family:'Liberation Sans',sans-serif;font-size:7.39px;line-height:7.39px;font-weight:400;font-style:normal;color:#3c3c3c;letter-spacing:0px;-webkit-text-stroke:0.06px #3c3c3c;transform-origin:0 0;transform:scaleX(0.7637)">7/4/2017 11:18:53</span></div>
<div style="position:absolute;left:518.00px;top:319.30px;width:61.50px;height:13.20px;overflow:hidden"><span style="position:absolute;left:4.30px;top:3.70px;white-space:pre;font-family:'Liberation Sans',sans-serif;font-size:7.39px;line-height:7.39px;font-weight:400;font-style:normal;color:#3c3c3c;letter-spacing:0px;-webkit-text-stroke:0.06px #3c3c3c;transform-origin:0 0;transform:scaleX(0.7637)">7/4/2017 11:21:06 AM</span></div>
<span style="position:absolute;left:584.00px;top:323.00px;white-space:pre;font-family:'Liberation Sans',sans-serif;font-size:7.39px;line-height:7.39px;font-weight:400;font-style:normal;color:#1f86c6;letter-spacing:0px;-webkit-text-stroke:0.06px #1f86c6;transform-origin:0 0;transform:scaleX(0.7210)">T007002</span>
<span style="position:absolute;left:617.70px;top:323.00px;white-space:pre;font-family:'Liberation Sans',sans-serif;font-size:7.39px;line-height:7.39px;font-weight:400;font-style:normal;color:#3c3c3c;letter-spacing:0px;-webkit-text-stroke:0.06px #3c3c3c;transform-origin:0 0;transform:scaleX(0.6955)">NOR</span>
<div style="position:absolute;left:328.60px;top:334.82px;width:307.40px;height:13.20px;background:#f9f2f5;"></div>
<div style="position:absolute;left:334px;top:339px;width:7px;height:7px;border:1px solid #cccccc;box-sizing:border-box;background:#f9f2f5"></div>
<div style="position:absolute;left:363.00px;top:334.82px;width:44.20px;height:13.20px;overflow:hidden"><span style="position:absolute;left:4.00px;top:3.18px;white-space:pre;font-family:'Liberation Sans',sans-serif;font-size:7.39px;line-height:7.39px;font-weight:400;font-style:normal;color:#1f86c6;letter-spacing:0px;-webkit-text-stroke:0.06px #1f86c6;transform-origin:0 0;transform:scaleX(0.7209)">CDE1031700388</span></div>
<div style="position:absolute;left:407.50px;top:334.82px;width:33.50px;height:13.20px;overflow:hidden"><span style="position:absolute;left:4.70px;top:3.18px;white-space:pre;font-family:'Liberation Sans',sans-serif;font-size:7.39px;line-height:7.39px;font-weight:400;font-style:normal;color:#3c3c3c;letter-spacing:0px;-webkit-text-stroke:0.06px #3c3c3c;transform-origin:0 0;transform:scaleX(0.7800)">Stock failure</span></div>
<div style="position:absolute;left:441.50px;top:334.82px;width:25.50px;height:13.20px;overflow:hidden"><span style="position:absolute;left:4.50px;top:3.18px;white-space:pre;font-family:'Liberation Sans',sans-serif;font-size:7.39px;line-height:7.39px;font-weight:400;font-style:normal;color:#3c3c3c;letter-spacing:0px;-webkit-text-stroke:0.06px #3c3c3c;transform-origin:0 0;transform:scaleX(0.7821)">Normal</span></div>
<div style="position:absolute;left:467.00px;top:334.82px;width:50.50px;height:13.20px;overflow:hidden"><span style="position:absolute;left:4.40px;top:3.18px;white-space:pre;font-family:'Liberation Sans',sans-serif;font-size:7.39px;line-height:7.39px;font-weight:400;font-style:normal;color:#3c3c3c;letter-spacing:0px;-webkit-text-stroke:0.06px #3c3c3c;transform-origin:0 0;transform:scaleX(0.7637)">1/25/2017 3:23:15</span></div>
<div style="position:absolute;left:518.00px;top:334.82px;width:61.50px;height:13.20px;overflow:hidden"><span style="position:absolute;left:4.30px;top:3.18px;white-space:pre;font-family:'Liberation Sans',sans-serif;font-size:7.39px;line-height:7.39px;font-weight:400;font-style:normal;color:#3c3c3c;letter-spacing:0px;-webkit-text-stroke:0.06px #3c3c3c;transform-origin:0 0;transform:scaleX(0.7637)">7/3/2017 7:08:09 AM</span></div>
<span style="position:absolute;left:584.00px;top:338.00px;white-space:pre;font-family:'Liberation Sans',sans-serif;font-size:7.39px;line-height:7.39px;font-weight:400;font-style:normal;color:#1f86c6;letter-spacing:0px;-webkit-text-stroke:0.06px #1f86c6;transform-origin:0 0;transform:scaleX(0.7210)">T001356</span>
<span style="position:absolute;left:617.70px;top:338.00px;white-space:pre;font-family:'Liberation Sans',sans-serif;font-size:7.39px;line-height:7.39px;font-weight:400;font-style:normal;color:#3c3c3c;letter-spacing:0px;-webkit-text-stroke:0.06px #3c3c3c;transform-origin:0 0;transform:scaleX(0.6955)">NOR</span>
<div style="position:absolute;left:328.60px;top:350.34px;width:307.40px;height:13.20px;background:#ffffff;"></div>
<div style="position:absolute;left:334px;top:354px;width:7px;height:7px;border:1px solid #cccccc;box-sizing:border-box;background:#ffffff"></div>
<div style="position:absolute;left:363.00px;top:350.34px;width:44.20px;height:13.20px;overflow:hidden"><span style="position:absolute;left:4.00px;top:3.66px;white-space:pre;font-family:'Liberation Sans',sans-serif;font-size:7.39px;line-height:7.39px;font-weight:400;font-style:normal;color:#1f86c6;letter-spacing:0px;-webkit-text-stroke:0.06px #1f86c6;transform-origin:0 0;transform:scaleX(0.7209)">CDE1031700871</span></div>
<div style="position:absolute;left:407.50px;top:350.34px;width:33.50px;height:13.20px;overflow:hidden"><span style="position:absolute;left:4.70px;top:3.66px;white-space:pre;font-family:'Liberation Sans',sans-serif;font-size:7.39px;line-height:7.39px;font-weight:400;font-style:normal;color:#3c3c3c;letter-spacing:0px;-webkit-text-stroke:0.06px #3c3c3c;transform-origin:0 0;transform:scaleX(0.7800)">Working</span></div>
<div style="position:absolute;left:441.50px;top:350.34px;width:25.50px;height:13.20px;overflow:hidden"><span style="position:absolute;left:4.50px;top:3.66px;white-space:pre;font-family:'Liberation Sans',sans-serif;font-size:7.39px;line-height:7.39px;font-weight:400;font-style:normal;color:#3c3c3c;letter-spacing:0px;-webkit-text-stroke:0.06px #3c3c3c;transform-origin:0 0;transform:scaleX(0.7821)">Normal</span></div>
<div style="position:absolute;left:467.00px;top:350.34px;width:50.50px;height:13.20px;overflow:hidden"><span style="position:absolute;left:4.40px;top:3.66px;white-space:pre;font-family:'Liberation Sans',sans-serif;font-size:7.39px;line-height:7.39px;font-weight:400;font-style:normal;color:#3c3c3c;letter-spacing:0px;-webkit-text-stroke:0.06px #3c3c3c;transform-origin:0 0;transform:scaleX(0.7637)">6/9/2017 2:57:58 PM</span></div>
<div style="position:absolute;left:518.00px;top:350.34px;width:61.50px;height:13.20px;overflow:hidden"><span style="position:absolute;left:4.30px;top:3.66px;white-space:pre;font-family:'Liberation Sans',sans-serif;font-size:7.39px;line-height:7.39px;font-weight:400;font-style:normal;color:#3c3c3c;letter-spacing:0px;-webkit-text-stroke:0.06px #3c3c3c;transform-origin:0 0;transform:scaleX(0.7637)">6/19/2017 9:01:06 AM</span></div>
<span style="position:absolute;left:584.00px;top:354.00px;white-space:pre;font-family:'Liberation Sans',sans-serif;font-size:7.39px;line-height:7.39px;font-weight:400;font-style:normal;color:#1f86c6;letter-spacing:0px;-webkit-text-stroke:0.06px #1f86c6;transform-origin:0 0;transform:scaleX(0.7210)">T007870</span>
<span style="position:absolute;left:617.70px;top:354.00px;white-space:pre;font-family:'Liberation Sans',sans-serif;font-size:7.39px;line-height:7.39px;font-weight:400;font-style:normal;color:#3c3c3c;letter-spacing:0px;-webkit-text-stroke:0.06px #3c3c3c;transform-origin:0 0;transform:scaleX(0.6955)">NOR</span>
<div style="position:absolute;left:328.60px;top:365.86px;width:307.40px;height:13.20px;background:#f9f2f5;"></div>
<div style="position:absolute;left:334px;top:370px;width:7px;height:7px;border:1px solid #cccccc;box-sizing:border-box;background:#f9f2f5"></div>
<div style="position:absolute;left:363.00px;top:365.86px;width:44.20px;height:13.20px;overflow:hidden"><span style="position:absolute;left:4.00px;top:3.14px;white-space:pre;font-family:'Liberation Sans',sans-serif;font-size:7.39px;line-height:7.39px;font-weight:400;font-style:normal;color:#1f86c6;letter-spacing:0px;-webkit-text-stroke:0.06px #1f86c6;transform-origin:0 0;transform:scaleX(0.7209)">CDE1031701214</span></div>
<div style="position:absolute;left:407.50px;top:365.86px;width:33.50px;height:13.20px;overflow:hidden"><span style="position:absolute;left:4.70px;top:3.14px;white-space:pre;font-family:'Liberation Sans',sans-serif;font-size:7.39px;line-height:7.39px;font-weight:400;font-style:normal;color:#3c3c3c;letter-spacing:0px;-webkit-text-stroke:0.06px #3c3c3c;transform-origin:0 0;transform:scaleX(0.7800)">Working</span></div>
<div style="position:absolute;left:441.50px;top:365.86px;width:25.50px;height:13.20px;overflow:hidden"><span style="position:absolute;left:4.50px;top:3.14px;white-space:pre;font-family:'Liberation Sans',sans-serif;font-size:7.39px;line-height:7.39px;font-weight:400;font-style:normal;color:#3c3c3c;letter-spacing:0px;-webkit-text-stroke:0.06px #3c3c3c;transform-origin:0 0;transform:scaleX(0.7821)">Normal</span></div>
<div style="position:absolute;left:467.00px;top:365.86px;width:50.50px;height:13.20px;overflow:hidden"><span style="position:absolute;left:4.40px;top:3.14px;white-space:pre;font-family:'Liberation Sans',sans-serif;font-size:7.39px;line-height:7.39px;font-weight:400;font-style:normal;color:#3c3c3c;letter-spacing:0px;-webkit-text-stroke:0.06px #3c3c3c;transform-origin:0 0;transform:scaleX(0.7637)">5/31/2017 3:19:31 PM</span></div>
<div style="position:absolute;left:518.00px;top:365.86px;width:61.50px;height:13.20px;overflow:hidden"><span style="position:absolute;left:4.30px;top:3.14px;white-space:pre;font-family:'Liberation Sans',sans-serif;font-size:7.39px;line-height:7.39px;font-weight:400;font-style:normal;color:#3c3c3c;letter-spacing:0px;-webkit-text-stroke:0.06px #3c3c3c;transform-origin:0 0;transform:scaleX(0.7637)">5/31/2017 3:19:36 PM</span></div>
<span style="position:absolute;left:584.00px;top:369.00px;white-space:pre;font-family:'Liberation Sans',sans-serif;font-size:7.39px;line-height:7.39px;font-weight:400;font-style:normal;color:#1f86c6;letter-spacing:0px;-webkit-text-stroke:0.06px #1f86c6;transform-origin:0 0;transform:scaleX(0.7210)">T002675</span>
<span style="position:absolute;left:617.70px;top:369.00px;white-space:pre;font-family:'Liberation Sans',sans-serif;font-size:7.39px;line-height:7.39px;font-weight:400;font-style:normal;color:#3c3c3c;letter-spacing:0px;-webkit-text-stroke:0.06px #3c3c3c;transform-origin:0 0;transform:scaleX(0.6955)">NOR</span>
<div style="position:absolute;left:328.60px;top:381.38px;width:307.40px;height:13.20px;background:#ffffff;"></div>
<div style="position:absolute;left:334px;top:385px;width:7px;height:7px;border:1px solid #cccccc;box-sizing:border-box;background:#ffffff"></div>
<div style="position:absolute;left:363.00px;top:381.38px;width:44.20px;height:13.20px;overflow:hidden"><span style="position:absolute;left:4.00px;top:3.62px;white-space:pre;font-family:'Liberation Sans',sans-serif;font-size:7.39px;line-height:7.39px;font-weight:400;font-style:normal;color:#1f86c6;letter-spacing:0px;-webkit-text-stroke:0.06px #1f86c6;transform-origin:0 0;transform:scaleX(0.7209)">CDE1031701237</span></div>
<div style="position:absolute;left:407.50px;top:381.38px;width:33.50px;height:13.20px;overflow:hidden"><span style="position:absolute;left:4.70px;top:3.62px;white-space:pre;font-family:'Liberation Sans',sans-serif;font-size:7.39px;line-height:7.39px;font-weight:400;font-style:normal;color:#3c3c3c;letter-spacing:0px;-webkit-text-stroke:0.06px #3c3c3c;transform-origin:0 0;transform:scaleX(0.7800)">Stock failure</span></div>
<div style="position:absolute;left:441.50px;top:381.38px;width:25.50px;height:13.20px;overflow:hidden"><span style="position:absolute;left:4.50px;top:3.62px;white-space:pre;font-family:'Liberation Sans',sans-serif;font-size:7.39px;line-height:7.39px;font-weight:400;font-style:normal;color:#3c3c3c;letter-spacing:0px;-webkit-text-stroke:0.06px #3c3c3c;transform-origin:0 0;transform:scaleX(0.7821)">Normal</span></div>
<div style="position:absolute;left:467.00px;top:381.38px;width:50.50px;height:13.20px;overflow:hidden"><span style="position:absolute;left:4.40px;top:3.62px;white-space:pre;font-family:'Liberation Sans',sans-serif;font-size:7.39px;line-height:7.39px;font-weight:400;font-style:normal;color:#3c3c3c;letter-spacing:0px;-webkit-text-stroke:0.06px #3c3c3c;transform-origin:0 0;transform:scaleX(0.7637)">7/12/2017 2:20:52 PM</span></div>
<div style="position:absolute;left:518.00px;top:381.38px;width:61.50px;height:13.20px;overflow:hidden"><span style="position:absolute;left:4.30px;top:3.62px;white-space:pre;font-family:'Liberation Sans',sans-serif;font-size:7.39px;line-height:7.39px;font-weight:400;font-style:normal;color:#3c3c3c;letter-spacing:0px;-webkit-text-stroke:0.06px #3c3c3c;transform-origin:0 0;transform:scaleX(0.7637)">7/12/2017 2:20:58 PM</span></div>
<span style="position:absolute;left:584.00px;top:385.00px;white-space:pre;font-family:'Liberation Sans',sans-serif;font-size:7.39px;line-height:7.39px;font-weight:400;font-style:normal;color:#1f86c6;letter-spacing:0px;-webkit-text-stroke:0.06px #1f86c6;transform-origin:0 0;transform:scaleX(0.7210)">301</span>
<span style="position:absolute;left:617.70px;top:385.00px;white-space:pre;font-family:'Liberation Sans',sans-serif;font-size:7.39px;line-height:7.39px;font-weight:400;font-style:normal;color:#3c3c3c;letter-spacing:0px;-webkit-text-stroke:0.06px #3c3c3c;transform-origin:0 0;transform:scaleX(0.6955)">NOR</span>
<div style="position:absolute;left:328.60px;top:396.90px;width:307.40px;height:13.20px;background:#f9f2f5;"></div>
<div style="position:absolute;left:334px;top:401px;width:7px;height:7px;border:1px solid #cccccc;box-sizing:border-box;background:#f9f2f5"></div>
<div style="position:absolute;left:363.00px;top:396.90px;width:44.20px;height:13.20px;overflow:hidden"><span style="position:absolute;left:4.00px;top:3.10px;white-space:pre;font-family:'Liberation Sans',sans-serif;font-size:7.39px;line-height:7.39px;font-weight:400;font-style:normal;color:#1f86c6;letter-spacing:0px;-webkit-text-stroke:0.06px #1f86c6;transform-origin:0 0;transform:scaleX(0.7209)">CDE1031701456</span></div>
<div style="position:absolute;left:407.50px;top:396.90px;width:33.50px;height:13.20px;overflow:hidden"><span style="position:absolute;left:4.70px;top:3.10px;white-space:pre;font-family:'Liberation Sans',sans-serif;font-size:7.39px;line-height:7.39px;font-weight:400;font-style:normal;color:#3c3c3c;letter-spacing:0px;-webkit-text-stroke:0.06px #3c3c3c;transform-origin:0 0;transform:scaleX(0.7800)">Working</span></div>
<div style="position:absolute;left:441.50px;top:396.90px;width:25.50px;height:13.20px;overflow:hidden"><span style="position:absolute;left:4.50px;top:3.10px;white-space:pre;font-family:'Liberation Sans',sans-serif;font-size:7.39px;line-height:7.39px;font-weight:400;font-style:normal;color:#3c3c3c;letter-spacing:0px;-webkit-text-stroke:0.06px #3c3c3c;transform-origin:0 0;transform:scaleX(0.7821)">Normal</span></div>
<div style="position:absolute;left:467.00px;top:396.90px;width:50.50px;height:13.20px;overflow:hidden"><span style="position:absolute;left:4.40px;top:3.10px;white-space:pre;font-family:'Liberation Sans',sans-serif;font-size:7.39px;line-height:7.39px;font-weight:400;font-style:normal;color:#3c3c3c;letter-spacing:0px;-webkit-text-stroke:0.06px #3c3c3c;transform-origin:0 0;transform:scaleX(0.7637)">4/20/2017 8:36:41 AM</span></div>
<div style="position:absolute;left:518.00px;top:396.90px;width:61.50px;height:13.20px;overflow:hidden"><span style="position:absolute;left:4.30px;top:3.10px;white-space:pre;font-family:'Liberation Sans',sans-serif;font-size:7.39px;line-height:7.39px;font-weight:400;font-style:normal;color:#3c3c3c;letter-spacing:0px;-webkit-text-stroke:0.06px #3c3c3c;transform-origin:0 0;transform:scaleX(0.7637)">4/20/2017 8:37:12 AM</span></div>
<span style="position:absolute;left:584.00px;top:400.00px;white-space:pre;font-family:'Liberation Sans',sans-serif;font-size:7.39px;line-height:7.39px;font-weight:400;font-style:normal;color:#1f86c6;letter-spacing:0px;-webkit-text-stroke:0.06px #1f86c6;transform-origin:0 0;transform:scaleX(0.7210)">T001293</span>
<span style="position:absolute;left:617.70px;top:400.00px;white-space:pre;font-family:'Liberation Sans',sans-serif;font-size:7.39px;line-height:7.39px;font-weight:400;font-style:normal;color:#3c3c3c;letter-spacing:0px;-webkit-text-stroke:0.06px #3c3c3c;transform-origin:0 0;transform:scaleX(0.6955)">NOR</span>
<div style="position:absolute;left:328.60px;top:412.42px;width:307.40px;height:13.20px;background:#ffffff;"></div>
<div style="position:absolute;left:334px;top:416px;width:7px;height:7px;border:1px solid #cccccc;box-sizing:border-box;background:#ffffff"></div>
<div style="position:absolute;left:363.00px;top:412.42px;width:44.20px;height:13.20px;overflow:hidden"><span style="position:absolute;left:4.00px;top:3.58px;white-space:pre;font-family:'Liberation Sans',sans-serif;font-size:7.39px;line-height:7.39px;font-weight:400;font-style:normal;color:#1f86c6;letter-spacing:0px;-webkit-text-stroke:0.06px #1f86c6;transform-origin:0 0;transform:scaleX(0.7209)">CDE1031701531</span></div>
<div style="position:absolute;left:407.50px;top:412.42px;width:33.50px;height:13.20px;overflow:hidden"><span style="position:absolute;left:4.70px;top:3.58px;white-space:pre;font-family:'Liberation Sans',sans-serif;font-size:7.39px;line-height:7.39px;font-weight:400;font-style:normal;color:#3c3c3c;letter-spacing:0px;-webkit-text-stroke:0.06px #3c3c3c;transform-origin:0 0;transform:scaleX(0.7800)">Stock failure</span></div>
<div style="position:absolute;left:441.50px;top:412.42px;width:25.50px;height:13.20px;overflow:hidden"><span style="position:absolute;left:4.50px;top:3.58px;white-space:pre;font-family:'Liberation Sans',sans-serif;font-size:7.39px;line-height:7.39px;font-weight:400;font-style:normal;color:#3c3c3c;letter-spacing:0px;-webkit-text-stroke:0.06px #3c3c3c;transform-origin:0 0;transform:scaleX(0.7821)">Normal</span></div>
<div style="position:absolute;left:467.00px;top:412.42px;width:50.50px;height:13.20px;overflow:hidden"><span style="position:absolute;left:4.40px;top:3.58px;white-space:pre;font-family:'Liberation Sans',sans-serif;font-size:7.39px;line-height:7.39px;font-weight:400;font-style:normal;color:#3c3c3c;letter-spacing:0px;-webkit-text-stroke:0.06px #3c3c3c;transform-origin:0 0;transform:scaleX(0.7637)">7/5/2017 7:46:40 AM</span></div>
<div style="position:absolute;left:518.00px;top:412.42px;width:61.50px;height:13.20px;overflow:hidden"><span style="position:absolute;left:4.30px;top:3.58px;white-space:pre;font-family:'Liberation Sans',sans-serif;font-size:7.39px;line-height:7.39px;font-weight:400;font-style:normal;color:#3c3c3c;letter-spacing:0px;-webkit-text-stroke:0.06px #3c3c3c;transform-origin:0 0;transform:scaleX(0.7637)">7/5/2017 7:46:45 AM</span></div>
<span style="position:absolute;left:584.00px;top:416.00px;white-space:pre;font-family:'Liberation Sans',sans-serif;font-size:7.39px;line-height:7.39px;font-weight:400;font-style:normal;color:#1f86c6;letter-spacing:0px;-webkit-text-stroke:0.06px #1f86c6;transform-origin:0 0;transform:scaleX(0.7210)">T004783</span>
<span style="position:absolute;left:617.70px;top:416.00px;white-space:pre;font-family:'Liberation Sans',sans-serif;font-size:7.39px;line-height:7.39px;font-weight:400;font-style:normal;color:#3c3c3c;letter-spacing:0px;-webkit-text-stroke:0.06px #3c3c3c;transform-origin:0 0;transform:scaleX(0.6955)">NOR</span>
<div style="position:absolute;left:328.60px;top:427.94px;width:307.40px;height:13.20px;background:#f9f2f5;"></div>
<div style="position:absolute;left:334px;top:432px;width:7px;height:7px;border:1px solid #cccccc;box-sizing:border-box;background:#f9f2f5"></div>
<div style="position:absolute;left:363.00px;top:427.94px;width:44.20px;height:13.20px;overflow:hidden"><span style="position:absolute;left:4.00px;top:3.06px;white-space:pre;font-family:'Liberation Sans',sans-serif;font-size:7.39px;line-height:7.39px;font-weight:400;font-style:normal;color:#1f86c6;letter-spacing:0px;-webkit-text-stroke:0.06px #1f86c6;transform-origin:0 0;transform:scaleX(0.7209)">CDE1031701971</span></div>
<div style="position:absolute;left:407.50px;top:427.94px;width:33.50px;height:13.20px;overflow:hidden"><span style="position:absolute;left:4.70px;top:3.06px;white-space:pre;font-family:'Liberation Sans',sans-serif;font-size:7.39px;line-height:7.39px;font-weight:400;font-style:normal;color:#3c3c3c;letter-spacing:0px;-webkit-text-stroke:0.06px #3c3c3c;transform-origin:0 0;transform:scaleX(0.7800)">Working</span></div>
<div style="position:absolute;left:441.50px;top:427.94px;width:25.50px;height:13.20px;overflow:hidden"><span style="position:absolute;left:4.50px;top:3.06px;white-space:pre;font-family:'Liberation Sans',sans-serif;font-size:7.39px;line-height:7.39px;font-weight:400;font-style:normal;color:#3c3c3c;letter-spacing:0px;-webkit-text-stroke:0.06px #3c3c3c;transform-origin:0 0;transform:scaleX(0.7821)">Normal</span></div>
<div style="position:absolute;left:467.00px;top:427.94px;width:50.50px;height:13.20px;overflow:hidden"><span style="position:absolute;left:4.40px;top:3.06px;white-space:pre;font-family:'Liberation Sans',sans-serif;font-size:7.39px;line-height:7.39px;font-weight:400;font-style:normal;color:#3c3c3c;letter-spacing:0px;-webkit-text-stroke:0.06px #3c3c3c;transform-origin:0 0;transform:scaleX(0.7637)">5/31/2017 3:24:48 PM</span></div>
<div style="position:absolute;left:518.00px;top:427.94px;width:61.50px;height:13.20px;overflow:hidden"><span style="position:absolute;left:4.30px;top:3.06px;white-space:pre;font-family:'Liberation Sans',sans-serif;font-size:7.39px;line-height:7.39px;font-weight:400;font-style:normal;color:#3c3c3c;letter-spacing:0px;-webkit-text-stroke:0.06px #3c3c3c;transform-origin:0 0;transform:scaleX(0.7637)">6/7/2017 3:48:50 PM</span></div>
<span style="position:absolute;left:584.00px;top:431.00px;white-space:pre;font-family:'Liberation Sans',sans-serif;font-size:7.39px;line-height:7.39px;font-weight:400;font-style:normal;color:#1f86c6;letter-spacing:0px;-webkit-text-stroke:0.06px #1f86c6;transform-origin:0 0;transform:scaleX(0.7210)">T002675</span>
<span style="position:absolute;left:617.70px;top:431.00px;white-space:pre;font-family:'Liberation Sans',sans-serif;font-size:7.39px;line-height:7.39px;font-weight:400;font-style:normal;color:#3c3c3c;letter-spacing:0px;-webkit-text-stroke:0.06px #3c3c3c;transform-origin:0 0;transform:scaleX(0.6955)">NOR</span>
<div style="position:absolute;left:328.60px;top:443.46px;width:307.40px;height:13.20px;background:#ffffff;"></div>
<div style="position:absolute;left:334px;top:447px;width:7px;height:7px;border:1px solid #cccccc;box-sizing:border-box;background:#ffffff"></div>
<div style="position:absolute;left:363.00px;top:443.46px;width:44.20px;height:13.20px;overflow:hidden"><span style="position:absolute;left:4.00px;top:3.54px;white-space:pre;font-family:'Liberation Sans',sans-serif;font-size:7.39px;line-height:7.39px;font-weight:400;font-style:normal;color:#1f86c6;letter-spacing:0px;-webkit-text-stroke:0.06px #1f86c6;transform-origin:0 0;transform:scaleX(0.7209)">CDE1031702250</span></div>
<div style="position:absolute;left:407.50px;top:443.46px;width:33.50px;height:13.20px;overflow:hidden"><span style="position:absolute;left:4.70px;top:3.54px;white-space:pre;font-family:'Liberation Sans',sans-serif;font-size:7.39px;line-height:7.39px;font-weight:400;font-style:normal;color:#3c3c3c;letter-spacing:0px;-webkit-text-stroke:0.06px #3c3c3c;transform-origin:0 0;transform:scaleX(0.7800)">Working</span></div>
<div style="position:absolute;left:441.50px;top:443.46px;width:25.50px;height:13.20px;overflow:hidden"><span style="position:absolute;left:4.50px;top:3.54px;white-space:pre;font-family:'Liberation Sans',sans-serif;font-size:7.39px;line-height:7.39px;font-weight:400;font-style:normal;color:#3c3c3c;letter-spacing:0px;-webkit-text-stroke:0.06px #3c3c3c;transform-origin:0 0;transform:scaleX(0.7821)">Normal</span></div>
<div style="position:absolute;left:467.00px;top:443.46px;width:50.50px;height:13.20px;overflow:hidden"><span style="position:absolute;left:4.40px;top:3.54px;white-space:pre;font-family:'Liberation Sans',sans-serif;font-size:7.39px;line-height:7.39px;font-weight:400;font-style:normal;color:#3c3c3c;letter-spacing:0px;-webkit-text-stroke:0.06px #3c3c3c;transform-origin:0 0;transform:scaleX(0.7637)">5/31/2017 8:30:39 AM</span></div>
<div style="position:absolute;left:518.00px;top:443.46px;width:61.50px;height:13.20px;overflow:hidden"><span style="position:absolute;left:4.30px;top:3.54px;white-space:pre;font-family:'Liberation Sans',sans-serif;font-size:7.39px;line-height:7.39px;font-weight:400;font-style:normal;color:#3c3c3c;letter-spacing:0px;-webkit-text-stroke:0.06px #3c3c3c;transform-origin:0 0;transform:scaleX(0.7637)">5/31/2017 8:30:45 AM</span></div>
<span style="position:absolute;left:584.00px;top:447.00px;white-space:pre;font-family:'Liberation Sans',sans-serif;font-size:7.39px;line-height:7.39px;font-weight:400;font-style:normal;color:#1f86c6;letter-spacing:0px;-webkit-text-stroke:0.06px #1f86c6;transform-origin:0 0;transform:scaleX(0.7210)">T007870</span>
<span style="position:absolute;left:617.70px;top:447.00px;white-space:pre;font-family:'Liberation Sans',sans-serif;font-size:7.39px;line-height:7.39px;font-weight:400;font-style:normal;color:#3c3c3c;letter-spacing:0px;-webkit-text-stroke:0.06px #3c3c3c;transform-origin:0 0;transform:scaleX(0.6955)">NOR</span>
<div style="position:absolute;left:328.60px;top:458.98px;width:307.40px;height:13.20px;background:#f9f2f5;"></div>
<div style="position:absolute;left:334px;top:463px;width:7px;height:7px;border:1px solid #cccccc;box-sizing:border-box;background:#f9f2f5"></div>
<div style="position:absolute;left:363.00px;top:458.98px;width:44.20px;height:13.20px;overflow:hidden"><span style="position:absolute;left:4.00px;top:3.02px;white-space:pre;font-family:'Liberation Sans',sans-serif;font-size:7.39px;line-height:7.39px;font-weight:400;font-style:normal;color:#1f86c6;letter-spacing:0px;-webkit-text-stroke:0.06px #1f86c6;transform-origin:0 0;transform:scaleX(0.7209)">CDE1031702268</span></div>
<div style="position:absolute;left:407.50px;top:458.98px;width:33.50px;height:13.20px;overflow:hidden"><span style="position:absolute;left:4.70px;top:3.02px;white-space:pre;font-family:'Liberation Sans',sans-serif;font-size:7.39px;line-height:7.39px;font-weight:400;font-style:normal;color:#3c3c3c;letter-spacing:0px;-webkit-text-stroke:0.06px #3c3c3c;transform-origin:0 0;transform:scaleX(0.7800)">Released</span></div>
<div style="position:absolute;left:441.50px;top:458.98px;width:25.50px;height:13.20px;overflow:hidden"><span style="position:absolute;left:4.50px;top:3.02px;white-space:pre;font-family:'Liberation Sans',sans-serif;font-size:7.39px;line-height:7.39px;font-weight:400;font-style:normal;color:#3c3c3c;letter-spacing:0px;-webkit-text-stroke:0.06px #3c3c3c;transform-origin:0 0;transform:scaleX(0.7821)">Urgent</span></div>
<div style="position:absolute;left:467.00px;top:458.98px;width:50.50px;height:13.20px;overflow:hidden"><span style="position:absolute;left:4.40px;top:3.02px;white-space:pre;font-family:'Liberation Sans',sans-serif;font-size:7.39px;line-height:7.39px;font-weight:400;font-style:normal;color:#3c3c3c;letter-spacing:0px;-webkit-text-stroke:0.06px #3c3c3c;transform-origin:0 0;transform:scaleX(0.7637)">3/2/2017 7:39:00 AM</span></div>
<div style="position:absolute;left:518.00px;top:458.98px;width:61.50px;height:13.20px;overflow:hidden"><span style="position:absolute;left:4.30px;top:3.02px;white-space:pre;font-family:'Liberation Sans',sans-serif;font-size:7.39px;line-height:7.39px;font-weight:400;font-style:normal;color:#3c3c3c;letter-spacing:0px;-webkit-text-stroke:0.06px #3c3c3c;transform-origin:0 0;transform:scaleX(0.7637)">6/1/2017 9:28:55 AM</span></div>
<span style="position:absolute;left:584.00px;top:462.00px;white-space:pre;font-family:'Liberation Sans',sans-serif;font-size:7.39px;line-height:7.39px;font-weight:400;font-style:normal;color:#1f86c6;letter-spacing:0px;-webkit-text-stroke:0.06px #1f86c6;transform-origin:0 0;transform:scaleX(0.7210)">101</span>
<span style="position:absolute;left:617.70px;top:462.00px;white-space:pre;font-family:'Liberation Sans',sans-serif;font-size:7.39px;line-height:7.39px;font-weight:400;font-style:normal;color:#3c3c3c;letter-spacing:0px;-webkit-text-stroke:0.06px #3c3c3c;transform-origin:0 0;transform:scaleX(0.6955)">NOR</span>
<div style="position:absolute;left:328.60px;top:474.50px;width:307.40px;height:13.20px;background:#ffffff;"></div>
<div style="position:absolute;left:334px;top:478px;width:7px;height:7px;border:1px solid #cccccc;box-sizing:border-box;background:#ffffff"></div>
<div style="position:absolute;left:363.00px;top:474.50px;width:44.20px;height:13.20px;overflow:hidden"><span style="position:absolute;left:4.00px;top:3.50px;white-space:pre;font-family:'Liberation Sans',sans-serif;font-size:7.39px;line-height:7.39px;font-weight:400;font-style:normal;color:#1f86c6;letter-spacing:0px;-webkit-text-stroke:0.06px #1f86c6;transform-origin:0 0;transform:scaleX(0.7209)">CDE1031702436</span></div>
<div style="position:absolute;left:407.50px;top:474.50px;width:33.50px;height:13.20px;overflow:hidden"><span style="position:absolute;left:4.70px;top:3.50px;white-space:pre;font-family:'Liberation Sans',sans-serif;font-size:7.39px;line-height:7.39px;font-weight:400;font-style:normal;color:#3c3c3c;letter-spacing:0px;-webkit-text-stroke:0.06px #3c3c3c;transform-origin:0 0;transform:scaleX(0.7800)">Working</span></div>
<div style="position:absolute;left:441.50px;top:474.50px;width:25.50px;height:13.20px;overflow:hidden"><span style="position:absolute;left:4.50px;top:3.50px;white-space:pre;font-family:'Liberation Sans',sans-serif;font-size:7.39px;line-height:7.39px;font-weight:400;font-style:normal;color:#3c3c3c;letter-spacing:0px;-webkit-text-stroke:0.06px #3c3c3c;transform-origin:0 0;transform:scaleX(0.7821)">Normal</span></div>
<div style="position:absolute;left:467.00px;top:474.50px;width:50.50px;height:13.20px;overflow:hidden"><span style="position:absolute;left:4.40px;top:3.50px;white-space:pre;font-family:'Liberation Sans',sans-serif;font-size:7.39px;line-height:7.39px;font-weight:400;font-style:normal;color:#3c3c3c;letter-spacing:0px;-webkit-text-stroke:0.06px #3c3c3c;transform-origin:0 0;transform:scaleX(0.7637)">5/31/2017 3:22:45 PM</span></div>
<div style="position:absolute;left:518.00px;top:474.50px;width:61.50px;height:13.20px;overflow:hidden"><span style="position:absolute;left:4.30px;top:3.50px;white-space:pre;font-family:'Liberation Sans',sans-serif;font-size:7.39px;line-height:7.39px;font-weight:400;font-style:normal;color:#3c3c3c;letter-spacing:0px;-webkit-text-stroke:0.06px #3c3c3c;transform-origin:0 0;transform:scaleX(0.7637)">5/31/2017 3:22:57 PM</span></div>
<span style="position:absolute;left:584.00px;top:478.00px;white-space:pre;font-family:'Liberation Sans',sans-serif;font-size:7.39px;line-height:7.39px;font-weight:400;font-style:normal;color:#1f86c6;letter-spacing:0px;-webkit-text-stroke:0.06px #1f86c6;transform-origin:0 0;transform:scaleX(0.7210)">T002675</span>
<span style="position:absolute;left:617.70px;top:478.00px;white-space:pre;font-family:'Liberation Sans',sans-serif;font-size:7.39px;line-height:7.39px;font-weight:400;font-style:normal;color:#3c3c3c;letter-spacing:0px;-webkit-text-stroke:0.06px #3c3c3c;transform-origin:0 0;transform:scaleX(0.6955)">NOR</span>
<div style="position:absolute;left:328.60px;top:490.02px;width:307.40px;height:13.20px;background:#f9f2f5;"></div>
<div style="position:absolute;left:334px;top:494px;width:7px;height:7px;border:1px solid #cccccc;box-sizing:border-box;background:#f9f2f5"></div>
<div style="position:absolute;left:363.00px;top:490.02px;width:44.20px;height:13.20px;overflow:hidden"><span style="position:absolute;left:4.00px;top:2.98px;white-space:pre;font-family:'Liberation Sans',sans-serif;font-size:7.39px;line-height:7.39px;font-weight:400;font-style:normal;color:#1f86c6;letter-spacing:0px;-webkit-text-stroke:0.06px #1f86c6;transform-origin:0 0;transform:scaleX(0.7209)">CDE1031702702</span></div>
<div style="position:absolute;left:407.50px;top:490.02px;width:33.50px;height:13.20px;overflow:hidden"><span style="position:absolute;left:4.70px;top:2.98px;white-space:pre;font-family:'Liberation Sans',sans-serif;font-size:7.39px;line-height:7.39px;font-weight:400;font-style:normal;color:#3c3c3c;letter-spacing:0px;-webkit-text-stroke:0.06px #3c3c3c;transform-origin:0 0;transform:scaleX(0.7800)">Working</span></div>
<div style="position:absolute;left:441.50px;top:490.02px;width:25.50px;height:13.20px;overflow:hidden"><span style="position:absolute;left:4.50px;top:2.98px;white-space:pre;font-family:'Liberation Sans',sans-serif;font-size:7.39px;line-height:7.39px;font-weight:400;font-style:normal;color:#3c3c3c;letter-spacing:0px;-webkit-text-stroke:0.06px #3c3c3c;transform-origin:0 0;transform:scaleX(0.7821)">Normal</span></div>
<div style="position:absolute;left:467.00px;top:490.02px;width:50.50px;height:13.20px;overflow:hidden"><span style="position:absolute;left:4.40px;top:2.98px;white-space:pre;font-family:'Liberation Sans',sans-serif;font-size:7.39px;line-height:7.39px;font-weight:400;font-style:normal;color:#3c3c3c;letter-spacing:0px;-webkit-text-stroke:0.06px #3c3c3c;transform-origin:0 0;transform:scaleX(0.7637)">5/31/2017 2:32:15 PM</span></div>
<div style="position:absolute;left:518.00px;top:490.02px;width:61.50px;height:13.20px;overflow:hidden"><span style="position:absolute;left:4.30px;top:2.98px;white-space:pre;font-family:'Liberation Sans',sans-serif;font-size:7.39px;line-height:7.39px;font-weight:400;font-style:normal;color:#3c3c3c;letter-spacing:0px;-webkit-text-stroke:0.06px #3c3c3c;transform-origin:0 0;transform:scaleX(0.7637)">5/31/2017 2:32:21 PM</span></div>
<span style="position:absolute;left:584.00px;top:493.00px;white-space:pre;font-family:'Liberation Sans',sans-serif;font-size:7.39px;line-height:7.39px;font-weight:400;font-style:normal;color:#1f86c6;letter-spacing:0px;-webkit-text-stroke:0.06px #1f86c6;transform-origin:0 0;transform:scaleX(0.7210)">T007870</span>
<span style="position:absolute;left:617.70px;top:493.00px;white-space:pre;font-family:'Liberation Sans',sans-serif;font-size:7.39px;line-height:7.39px;font-weight:400;font-style:normal;color:#3c3c3c;letter-spacing:0px;-webkit-text-stroke:0.06px #3c3c3c;transform-origin:0 0;transform:scaleX(0.6955)">NOR</span>
<div style="position:absolute;left:328.60px;top:505.54px;width:307.40px;height:13.20px;background:#ffffff;"></div>
<div style="position:absolute;left:334px;top:509px;width:7px;height:7px;border:1px solid #cccccc;box-sizing:border-box;background:#ffffff"></div>
<div style="position:absolute;left:363.00px;top:505.54px;width:44.20px;height:13.20px;overflow:hidden"><span style="position:absolute;left:4.00px;top:3.46px;white-space:pre;font-family:'Liberation Sans',sans-serif;font-size:7.39px;line-height:7.39px;font-weight:400;font-style:normal;color:#1f86c6;letter-spacing:0px;-webkit-text-stroke:0.06px #1f86c6;transform-origin:0 0;transform:scaleX(0.7209)">CDE1031702754</span></div>
<div style="position:absolute;left:407.50px;top:505.54px;width:33.50px;height:13.20px;overflow:hidden"><span style="position:absolute;left:4.70px;top:3.46px;white-space:pre;font-family:'Liberation Sans',sans-serif;font-size:7.39px;line-height:7.39px;font-weight:400;font-style:normal;color:#3c3c3c;letter-spacing:0px;-webkit-text-stroke:0.06px #3c3c3c;transform-origin:0 0;transform:scaleX(0.7800)">Stock failure</span></div>
<div style="position:absolute;left:441.50px;top:505.54px;width:25.50px;height:13.20px;overflow:hidden"><span style="position:absolute;left:4.50px;top:3.46px;white-space:pre;font-family:'Liberation Sans',sans-serif;font-size:7.39px;line-height:7.39px;font-weight:400;font-style:normal;color:#3c3c3c;letter-spacing:0px;-webkit-text-stroke:0.06px #3c3c3c;transform-origin:0 0;transform:scaleX(0.7821)">Normal</span></div>
<div style="position:absolute;left:467.00px;top:505.54px;width:50.50px;height:13.20px;overflow:hidden"><span style="position:absolute;left:4.40px;top:3.46px;white-space:pre;font-family:'Liberation Sans',sans-serif;font-size:7.39px;line-height:7.39px;font-weight:400;font-style:normal;color:#3c3c3c;letter-spacing:0px;-webkit-text-stroke:0.06px #3c3c3c;transform-origin:0 0;transform:scaleX(0.7637)">7/6/2017 4:17:51 PM</span></div>
<div style="position:absolute;left:518.00px;top:505.54px;width:61.50px;height:13.20px;overflow:hidden"><span style="position:absolute;left:4.30px;top:3.46px;white-space:pre;font-family:'Liberation Sans',sans-serif;font-size:7.39px;line-height:7.39px;font-weight:400;font-style:normal;color:#3c3c3c;letter-spacing:0px;-webkit-text-stroke:0.06px #3c3c3c;transform-origin:0 0;transform:scaleX(0.7637)">7/6/2017 4:18:49 PM</span></div>
<span style="position:absolute;left:584.00px;top:509.00px;white-space:pre;font-family:'Liberation Sans',sans-serif;font-size:7.39px;line-height:7.39px;font-weight:400;font-style:normal;color:#1f86c6;letter-spacing:0px;-webkit-text-stroke:0.06px #1f86c6;transform-origin:0 0;transform:scaleX(0.7210)">201</span>
<span style="position:absolute;left:617.70px;top:509.00px;white-space:pre;font-family:'Liberation Sans',sans-serif;font-size:7.39px;line-height:7.39px;font-weight:400;font-style:normal;color:#3c3c3c;letter-spacing:0px;-webkit-text-stroke:0.06px #3c3c3c;transform-origin:0 0;transform:scaleX(0.6955)">NOR</span>
<div style="position:absolute;left:328.60px;top:521.06px;width:307.40px;height:13.20px;background:#f9f2f5;"></div>
<div style="position:absolute;left:334px;top:525px;width:7px;height:7px;border:1px solid #cccccc;box-sizing:border-box;background:#f9f2f5"></div>
<div style="position:absolute;left:363.00px;top:521.06px;width:44.20px;height:13.20px;overflow:hidden"><span style="position:absolute;left:4.00px;top:2.94px;white-space:pre;font-family:'Liberation Sans',sans-serif;font-size:7.39px;line-height:7.39px;font-weight:400;font-style:normal;color:#1f86c6;letter-spacing:0px;-webkit-text-stroke:0.06px #1f86c6;transform-origin:0 0;transform:scaleX(0.7209)">CDE1031703075</span></div>
<div style="position:absolute;left:407.50px;top:521.06px;width:33.50px;height:13.20px;overflow:hidden"><span style="position:absolute;left:4.70px;top:2.94px;white-space:pre;font-family:'Liberation Sans',sans-serif;font-size:7.39px;line-height:7.39px;font-weight:400;font-style:normal;color:#3c3c3c;letter-spacing:0px;-webkit-text-stroke:0.06px #3c3c3c;transform-origin:0 0;transform:scaleX(0.7800)">Stock failure</span></div>
<div style="position:absolute;left:441.50px;top:521.06px;width:25.50px;height:13.20px;overflow:hidden"><span style="position:absolute;left:4.50px;top:2.94px;white-space:pre;font-family:'Liberation Sans',sans-serif;font-size:7.39px;line-height:7.39px;font-weight:400;font-style:normal;color:#3c3c3c;letter-spacing:0px;-webkit-text-stroke:0.06px #3c3c3c;transform-origin:0 0;transform:scaleX(0.7821)">Normal</span></div>
<div style="position:absolute;left:467.00px;top:521.06px;width:50.50px;height:13.20px;overflow:hidden"><span style="position:absolute;left:4.40px;top:2.94px;white-space:pre;font-family:'Liberation Sans',sans-serif;font-size:7.39px;line-height:7.39px;font-weight:400;font-style:normal;color:#3c3c3c;letter-spacing:0px;-webkit-text-stroke:0.06px #3c3c3c;transform-origin:0 0;transform:scaleX(0.7637)">4/5/2017 7:07:26 AM</span></div>
<div style="position:absolute;left:518.00px;top:521.06px;width:61.50px;height:13.20px;overflow:hidden"><span style="position:absolute;left:4.30px;top:2.94px;white-space:pre;font-family:'Liberation Sans',sans-serif;font-size:7.39px;line-height:7.39px;font-weight:400;font-style:normal;color:#3c3c3c;letter-spacing:0px;-webkit-text-stroke:0.06px #3c3c3c;transform-origin:0 0;transform:scaleX(0.7637)">5/12/2017 8:55:18 AM</span></div>
<span style="position:absolute;left:584.00px;top:524.00px;white-space:pre;font-family:'Liberation Sans',sans-serif;font-size:7.39px;line-height:7.39px;font-weight:400;font-style:normal;color:#1f86c6;letter-spacing:0px;-webkit-text-stroke:0.06px #1f86c6;transform-origin:0 0;transform:scaleX(0.7210)">T008022</span>
<span style="position:absolute;left:617.70px;top:524.00px;white-space:pre;font-family:'Liberation Sans',sans-serif;font-size:7.39px;line-height:7.39px;font-weight:400;font-style:normal;color:#3c3c3c;letter-spacing:0px;-webkit-text-stroke:0.06px #3c3c3c;transform-origin:0 0;transform:scaleX(0.6955)">NOR</span>
<div style="position:absolute;left:328.60px;top:536.58px;width:307.40px;height:13.20px;background:#ffffff;"></div>
<div style="position:absolute;left:334px;top:540px;width:7px;height:7px;border:1px solid #cccccc;box-sizing:border-box;background:#ffffff"></div>
<div style="position:absolute;left:363.00px;top:536.58px;width:44.20px;height:13.20px;overflow:hidden"><span style="position:absolute;left:4.00px;top:3.42px;white-space:pre;font-family:'Liberation Sans',sans-serif;font-size:7.39px;line-height:7.39px;font-weight:400;font-style:normal;color:#1f86c6;letter-spacing:0px;-webkit-text-stroke:0.06px #1f86c6;transform-origin:0 0;transform:scaleX(0.7209)">CDE1031703329</span></div>
<div style="position:absolute;left:407.50px;top:536.58px;width:33.50px;height:13.20px;overflow:hidden"><span style="position:absolute;left:4.70px;top:3.42px;white-space:pre;font-family:'Liberation Sans',sans-serif;font-size:7.39px;line-height:7.39px;font-weight:400;font-style:normal;color:#3c3c3c;letter-spacing:0px;-webkit-text-stroke:0.06px #3c3c3c;transform-origin:0 0;transform:scaleX(0.7800)">Working</span></div>
<div style="position:absolute;left:441.50px;top:536.58px;width:25.50px;height:13.20px;overflow:hidden"><span style="position:absolute;left:4.50px;top:3.42px;white-space:pre;font-family:'Liberation Sans',sans-serif;font-size:7.39px;line-height:7.39px;font-weight:400;font-style:normal;color:#3c3c3c;letter-spacing:0px;-webkit-text-stroke:0.06px #3c3c3c;transform-origin:0 0;transform:scaleX(0.7821)">Normal</span></div>
<div style="position:absolute;left:467.00px;top:536.58px;width:50.50px;height:13.20px;overflow:hidden"><span style="position:absolute;left:4.40px;top:3.42px;white-space:pre;font-family:'Liberation Sans',sans-serif;font-size:7.39px;line-height:7.39px;font-weight:400;font-style:normal;color:#3c3c3c;letter-spacing:0px;-webkit-text-stroke:0.06px #3c3c3c;transform-origin:0 0;transform:scaleX(0.7637)">4/10/2017 4:38:33 PM</span></div>
<div style="position:absolute;left:518.00px;top:536.58px;width:61.50px;height:13.20px;overflow:hidden"><span style="position:absolute;left:4.30px;top:3.42px;white-space:pre;font-family:'Liberation Sans',sans-serif;font-size:7.39px;line-height:7.39px;font-weight:400;font-style:normal;color:#3c3c3c;letter-spacing:0px;-webkit-text-stroke:0.06px #3c3c3c;transform-origin:0 0;transform:scaleX(0.7637)">4/10/2017 4:40:52 PM</span></div>
<span style="position:absolute;left:584.00px;top:540.00px;white-space:pre;font-family:'Liberation Sans',sans-serif;font-size:7.39px;line-height:7.39px;font-weight:400;font-style:normal;color:#1f86c6;letter-spacing:0px;-webkit-text-stroke:0.06px #1f86c6;transform-origin:0 0;transform:scaleX(0.7210)">T001362</span>
<span style="position:absolute;left:617.70px;top:540.00px;white-space:pre;font-family:'Liberation Sans',sans-serif;font-size:7.39px;line-height:7.39px;font-weight:400;font-style:normal;color:#3c3c3c;letter-spacing:0px;-webkit-text-stroke:0.06px #3c3c3c;transform-origin:0 0;transform:scaleX(0.6955)">NOR</span>
<div style="position:absolute;left:328.60px;top:552.10px;width:307.40px;height:13.20px;background:#f9f2f5;"></div>
<div style="position:absolute;left:334px;top:556px;width:7px;height:7px;border:1px solid #cccccc;box-sizing:border-box;background:#f9f2f5"></div>
<div style="position:absolute;left:363.00px;top:552.10px;width:44.20px;height:13.20px;overflow:hidden"><span style="position:absolute;left:4.00px;top:2.90px;white-space:pre;font-family:'Liberation Sans',sans-serif;font-size:7.39px;line-height:7.39px;font-weight:400;font-style:normal;color:#1f86c6;letter-spacing:0px;-webkit-text-stroke:0.06px #1f86c6;transform-origin:0 0;transform:scaleX(0.7209)">CDE1031704153</span></div>
<div style="position:absolute;left:407.50px;top:552.10px;width:33.50px;height:13.20px;overflow:hidden"><span style="position:absolute;left:4.70px;top:2.90px;white-space:pre;font-family:'Liberation Sans',sans-serif;font-size:7.39px;line-height:7.39px;font-weight:400;font-style:normal;color:#3c3c3c;letter-spacing:0px;-webkit-text-stroke:0.06px #3c3c3c;transform-origin:0 0;transform:scaleX(0.7800)">Stock failure</span></div>
<div style="position:absolute;left:441.50px;top:552.10px;width:25.50px;height:13.20px;overflow:hidden"><span style="position:absolute;left:4.50px;top:2.90px;white-space:pre;font-family:'Liberation Sans',sans-serif;font-size:7.39px;line-height:7.39px;font-weight:400;font-style:normal;color:#3c3c3c;letter-spacing:0px;-webkit-text-stroke:0.06px #3c3c3c;transform-origin:0 0;transform:scaleX(0.7821)">Urgent</span></div>
<div style="position:absolute;left:467.00px;top:552.10px;width:50.50px;height:13.20px;overflow:hidden"><span style="position:absolute;left:4.40px;top:2.90px;white-space:pre;font-family:'Liberation Sans',sans-serif;font-size:7.39px;line-height:7.39px;font-weight:400;font-style:normal;color:#3c3c3c;letter-spacing:0px;-webkit-text-stroke:0.06px #3c3c3c;transform-origin:0 0;transform:scaleX(0.7637)">4/18/2017 10:00:59 AM</span></div>
<div style="position:absolute;left:518.00px;top:552.10px;width:61.50px;height:13.20px;overflow:hidden"><span style="position:absolute;left:4.30px;top:2.90px;white-space:pre;font-family:'Liberation Sans',sans-serif;font-size:7.39px;line-height:7.39px;font-weight:400;font-style:normal;color:#3c3c3c;letter-spacing:0px;-webkit-text-stroke:0.06px #3c3c3c;transform-origin:0 0;transform:scaleX(0.7637)">4/18/2017 10:01:13 AM</span></div>
<span style="position:absolute;left:584.00px;top:555.00px;white-space:pre;font-family:'Liberation Sans',sans-serif;font-size:7.39px;line-height:7.39px;font-weight:400;font-style:normal;color:#1f86c6;letter-spacing:0px;-webkit-text-stroke:0.06px #1f86c6;transform-origin:0 0;transform:scaleX(0.7210)">101</span>
<span style="position:absolute;left:617.70px;top:555.00px;white-space:pre;font-family:'Liberation Sans',sans-serif;font-size:7.39px;line-height:7.39px;font-weight:400;font-style:normal;color:#3c3c3c;letter-spacing:0px;-webkit-text-stroke:0.06px #3c3c3c;transform-origin:0 0;transform:scaleX(0.6955)">NOR</span>
<div style="position:absolute;left:328.60px;top:567.62px;width:307.40px;height:13.20px;background:#ffffff;"></div>
<div style="position:absolute;left:334px;top:571px;width:7px;height:7px;border:1px solid #cccccc;box-sizing:border-box;background:#ffffff"></div>
<div style="position:absolute;left:363.00px;top:567.62px;width:44.20px;height:13.20px;overflow:hidden"><span style="position:absolute;left:4.00px;top:3.38px;white-space:pre;font-family:'Liberation Sans',sans-serif;font-size:7.39px;line-height:7.39px;font-weight:400;font-style:normal;color:#1f86c6;letter-spacing:0px;-webkit-text-stroke:0.06px #1f86c6;transform-origin:0 0;transform:scaleX(0.7209)">CDE1031702250</span></div>
<div style="position:absolute;left:407.50px;top:567.62px;width:33.50px;height:13.20px;overflow:hidden"><span style="position:absolute;left:4.70px;top:3.38px;white-space:pre;font-family:'Liberation Sans',sans-serif;font-size:7.39px;line-height:7.39px;font-weight:400;font-style:normal;color:#3c3c3c;letter-spacing:0px;-webkit-text-stroke:0.06px #3c3c3c;transform-origin:0 0;transform:scaleX(0.7800)">Working</span></div>
<div style="position:absolute;left:441.50px;top:567.62px;width:25.50px;height:13.20px;overflow:hidden"><span style="position:absolute;left:4.50px;top:3.38px;white-space:pre;font-family:'Liberation Sans',sans-serif;font-size:7.39px;line-height:7.39px;font-weight:400;font-style:normal;color:#3c3c3c;letter-spacing:0px;-webkit-text-stroke:0.06px #3c3c3c;transform-origin:0 0;transform:scaleX(0.7821)">Normal</span></div>
<div style="position:absolute;left:467.00px;top:567.62px;width:50.50px;height:13.20px;overflow:hidden"><span style="position:absolute;left:4.40px;top:3.38px;white-space:pre;font-family:'Liberation Sans',sans-serif;font-size:7.39px;line-height:7.39px;font-weight:400;font-style:normal;color:#3c3c3c;letter-spacing:0px;-webkit-text-stroke:0.06px #3c3c3c;transform-origin:0 0;transform:scaleX(0.7637)">5/31/2017 8:30:39 AM</span></div>
<div style="position:absolute;left:518.00px;top:567.62px;width:61.50px;height:13.20px;overflow:hidden"><span style="position:absolute;left:4.30px;top:3.38px;white-space:pre;font-family:'Liberation Sans',sans-serif;font-size:7.39px;line-height:7.39px;font-weight:400;font-style:normal;color:#3c3c3c;letter-spacing:0px;-webkit-text-stroke:0.06px #3c3c3c;transform-origin:0 0;transform:scaleX(0.7637)">5/31/2017 8:30:45 AM</span></div>
<span style="position:absolute;left:584.00px;top:571.00px;white-space:pre;font-family:'Liberation Sans',sans-serif;font-size:7.39px;line-height:7.39px;font-weight:400;font-style:normal;color:#1f86c6;letter-spacing:0px;-webkit-text-stroke:0.06px #1f86c6;transform-origin:0 0;transform:scaleX(0.7210)">T007870</span>
<span style="position:absolute;left:617.70px;top:571.00px;white-space:pre;font-family:'Liberation Sans',sans-serif;font-size:7.39px;line-height:7.39px;font-weight:400;font-style:normal;color:#3c3c3c;letter-spacing:0px;-webkit-text-stroke:0.06px #3c3c3c;transform-origin:0 0;transform:scaleX(0.6955)">NOR</span>
<div style="position:absolute;left:328.60px;top:583.14px;width:307.40px;height:13.20px;background:#f9f2f5;"></div>
<div style="position:absolute;left:334px;top:587px;width:7px;height:7px;border:1px solid #cccccc;box-sizing:border-box;background:#f9f2f5"></div>
<div style="position:absolute;left:363.00px;top:583.14px;width:44.20px;height:13.20px;overflow:hidden"><span style="position:absolute;left:4.00px;top:2.86px;white-space:pre;font-family:'Liberation Sans',sans-serif;font-size:7.39px;line-height:7.39px;font-weight:400;font-style:normal;color:#1f86c6;letter-spacing:0px;-webkit-text-stroke:0.06px #1f86c6;transform-origin:0 0;transform:scaleX(0.7209)">CDE1031702268</span></div>
<div style="position:absolute;left:407.50px;top:583.14px;width:33.50px;height:13.20px;overflow:hidden"><span style="position:absolute;left:4.70px;top:2.86px;white-space:pre;font-family:'Liberation Sans',sans-serif;font-size:7.39px;line-height:7.39px;font-weight:400;font-style:normal;color:#3c3c3c;letter-spacing:0px;-webkit-text-stroke:0.06px #3c3c3c;transform-origin:0 0;transform:scaleX(0.7800)">Released</span></div>
<div style="position:absolute;left:441.50px;top:583.14px;width:25.50px;height:13.20px;overflow:hidden"><span style="position:absolute;left:4.50px;top:2.86px;white-space:pre;font-family:'Liberation Sans',sans-serif;font-size:7.39px;line-height:7.39px;font-weight:400;font-style:normal;color:#3c3c3c;letter-spacing:0px;-webkit-text-stroke:0.06px #3c3c3c;transform-origin:0 0;transform:scaleX(0.7821)">Urgent</span></div>
<div style="position:absolute;left:467.00px;top:583.14px;width:50.50px;height:13.20px;overflow:hidden"><span style="position:absolute;left:4.40px;top:2.86px;white-space:pre;font-family:'Liberation Sans',sans-serif;font-size:7.39px;line-height:7.39px;font-weight:400;font-style:normal;color:#3c3c3c;letter-spacing:0px;-webkit-text-stroke:0.06px #3c3c3c;transform-origin:0 0;transform:scaleX(0.7637)">3/2/2017 7:39:00 AM</span></div>
<div style="position:absolute;left:518.00px;top:583.14px;width:61.50px;height:13.20px;overflow:hidden"><span style="position:absolute;left:4.30px;top:2.86px;white-space:pre;font-family:'Liberation Sans',sans-serif;font-size:7.39px;line-height:7.39px;font-weight:400;font-style:normal;color:#3c3c3c;letter-spacing:0px;-webkit-text-stroke:0.06px #3c3c3c;transform-origin:0 0;transform:scaleX(0.7637)">6/1/2017 9:28:55 AM</span></div>
<span style="position:absolute;left:584.00px;top:586.00px;white-space:pre;font-family:'Liberation Sans',sans-serif;font-size:7.39px;line-height:7.39px;font-weight:400;font-style:normal;color:#1f86c6;letter-spacing:0px;-webkit-text-stroke:0.06px #1f86c6;transform-origin:0 0;transform:scaleX(0.7210)">101</span>
<span style="position:absolute;left:617.70px;top:586.00px;white-space:pre;font-family:'Liberation Sans',sans-serif;font-size:7.39px;line-height:7.39px;font-weight:400;font-style:normal;color:#3c3c3c;letter-spacing:0px;-webkit-text-stroke:0.06px #3c3c3c;transform-origin:0 0;transform:scaleX(0.6955)">NOR</span>
<div style="position:absolute;left:328.60px;top:598.66px;width:307.40px;height:13.20px;background:#ffffff;"></div>
<div style="position:absolute;left:334px;top:602px;width:7px;height:7px;border:1px solid #cccccc;box-sizing:border-box;background:#ffffff"></div>
<div style="position:absolute;left:363.00px;top:598.66px;width:44.20px;height:13.20px;overflow:hidden"><span style="position:absolute;left:4.00px;top:3.34px;white-space:pre;font-family:'Liberation Sans',sans-serif;font-size:7.39px;line-height:7.39px;font-weight:400;font-style:normal;color:#1f86c6;letter-spacing:0px;-webkit-text-stroke:0.06px #1f86c6;transform-origin:0 0;transform:scaleX(0.7209)">CDE1031702436</span></div>
<div style="position:absolute;left:407.50px;top:598.66px;width:33.50px;height:13.20px;overflow:hidden"><span style="position:absolute;left:4.70px;top:3.34px;white-space:pre;font-family:'Liberation Sans',sans-serif;font-size:7.39px;line-height:7.39px;font-weight:400;font-style:normal;color:#3c3c3c;letter-spacing:0px;-webkit-text-stroke:0.06px #3c3c3c;transform-origin:0 0;transform:scaleX(0.7800)">Working</span></div>
<div style="position:absolute;left:441.50px;top:598.66px;width:25.50px;height:13.20px;overflow:hidden"><span style="position:absolute;left:4.50px;top:3.34px;white-space:pre;font-family:'Liberation Sans',sans-serif;font-size:7.39px;line-height:7.39px;font-weight:400;font-style:normal;color:#3c3c3c;letter-spacing:0px;-webkit-text-stroke:0.06px #3c3c3c;transform-origin:0 0;transform:scaleX(0.7821)">Normal</span></div>
<div style="position:absolute;left:467.00px;top:598.66px;width:50.50px;height:13.20px;overflow:hidden"><span style="position:absolute;left:4.40px;top:3.34px;white-space:pre;font-family:'Liberation Sans',sans-serif;font-size:7.39px;line-height:7.39px;font-weight:400;font-style:normal;color:#3c3c3c;letter-spacing:0px;-webkit-text-stroke:0.06px #3c3c3c;transform-origin:0 0;transform:scaleX(0.7637)">5/31/2017 3:22:45 PM</span></div>
<div style="position:absolute;left:518.00px;top:598.66px;width:61.50px;height:13.20px;overflow:hidden"><span style="position:absolute;left:4.30px;top:3.34px;white-space:pre;font-family:'Liberation Sans',sans-serif;font-size:7.39px;line-height:7.39px;font-weight:400;font-style:normal;color:#3c3c3c;letter-spacing:0px;-webkit-text-stroke:0.06px #3c3c3c;transform-origin:0 0;transform:scaleX(0.7637)">5/31/2017 3:22:57 PM</span></div>
<span style="position:absolute;left:584.00px;top:602.00px;white-space:pre;font-family:'Liberation Sans',sans-serif;font-size:7.39px;line-height:7.39px;font-weight:400;font-style:normal;color:#1f86c6;letter-spacing:0px;-webkit-text-stroke:0.06px #1f86c6;transform-origin:0 0;transform:scaleX(0.7210)">T002675</span>
<span style="position:absolute;left:617.70px;top:602.00px;white-space:pre;font-family:'Liberation Sans',sans-serif;font-size:7.39px;line-height:7.39px;font-weight:400;font-style:normal;color:#3c3c3c;letter-spacing:0px;-webkit-text-stroke:0.06px #3c3c3c;transform-origin:0 0;transform:scaleX(0.6955)">NOR</span>
<div style="position:absolute;left:328.60px;top:614.18px;width:307.40px;height:13.20px;background:#f9f2f5;"></div>
<div style="position:absolute;left:334px;top:618px;width:7px;height:7px;border:1px solid #cccccc;box-sizing:border-box;background:#f9f2f5"></div>
<div style="position:absolute;left:363.00px;top:614.18px;width:44.20px;height:13.20px;overflow:hidden"><span style="position:absolute;left:4.00px;top:2.82px;white-space:pre;font-family:'Liberation Sans',sans-serif;font-size:7.39px;line-height:7.39px;font-weight:400;font-style:normal;color:#1f86c6;letter-spacing:0px;-webkit-text-stroke:0.06px #1f86c6;transform-origin:0 0;transform:scaleX(0.7209)">CDE1031702702</span></div>
<div style="position:absolute;left:407.50px;top:614.18px;width:33.50px;height:13.20px;overflow:hidden"><span style="position:absolute;left:4.70px;top:2.82px;white-space:pre;font-family:'Liberation Sans',sans-serif;font-size:7.39px;line-height:7.39px;font-weight:400;font-style:normal;color:#3c3c3c;letter-spacing:0px;-webkit-text-stroke:0.06px #3c3c3c;transform-origin:0 0;transform:scaleX(0.7800)">Working</span></div>
<div style="position:absolute;left:441.50px;top:614.18px;width:25.50px;height:13.20px;overflow:hidden"><span style="position:absolute;left:4.50px;top:2.82px;white-space:pre;font-family:'Liberation Sans',sans-serif;font-size:7.39px;line-height:7.39px;font-weight:400;font-style:normal;color:#3c3c3c;letter-spacing:0px;-webkit-text-stroke:0.06px #3c3c3c;transform-origin:0 0;transform:scaleX(0.7821)">Normal</span></div>
<div style="position:absolute;left:467.00px;top:614.18px;width:50.50px;height:13.20px;overflow:hidden"><span style="position:absolute;left:4.40px;top:2.82px;white-space:pre;font-family:'Liberation Sans',sans-serif;font-size:7.39px;line-height:7.39px;font-weight:400;font-style:normal;color:#3c3c3c;letter-spacing:0px;-webkit-text-stroke:0.06px #3c3c3c;transform-origin:0 0;transform:scaleX(0.7637)">5/31/2017 2:32:15 PM</span></div>
<div style="position:absolute;left:518.00px;top:614.18px;width:61.50px;height:13.20px;overflow:hidden"><span style="position:absolute;left:4.30px;top:2.82px;white-space:pre;font-family:'Liberation Sans',sans-serif;font-size:7.39px;line-height:7.39px;font-weight:400;font-style:normal;color:#3c3c3c;letter-spacing:0px;-webkit-text-stroke:0.06px #3c3c3c;transform-origin:0 0;transform:scaleX(0.7637)">5/31/2017 2:32:21 PM</span></div>
<span style="position:absolute;left:584.00px;top:617.00px;white-space:pre;font-family:'Liberation Sans',sans-serif;font-size:7.39px;line-height:7.39px;font-weight:400;font-style:normal;color:#1f86c6;letter-spacing:0px;-webkit-text-stroke:0.06px #1f86c6;transform-origin:0 0;transform:scaleX(0.7210)">T007870</span>
<span style="position:absolute;left:617.70px;top:617.00px;white-space:pre;font-family:'Liberation Sans',sans-serif;font-size:7.39px;line-height:7.39px;font-weight:400;font-style:normal;color:#3c3c3c;letter-spacing:0px;-webkit-text-stroke:0.06px #3c3c3c;transform-origin:0 0;transform:scaleX(0.6955)">NOR</span>
<div style="position:absolute;left:328.60px;top:629.70px;width:307.40px;height:13.20px;background:#ffffff;"></div>
<div style="position:absolute;left:334px;top:634px;width:7px;height:7px;border:1px solid #cccccc;box-sizing:border-box;background:#ffffff"></div>
<div style="position:absolute;left:363.00px;top:629.70px;width:44.20px;height:13.20px;overflow:hidden"><span style="position:absolute;left:4.00px;top:3.30px;white-space:pre;font-family:'Liberation Sans',sans-serif;font-size:7.39px;line-height:7.39px;font-weight:400;font-style:normal;color:#1f86c6;letter-spacing:0px;-webkit-text-stroke:0.06px #1f86c6;transform-origin:0 0;transform:scaleX(0.7209)">CDE1031702754</span></div>
<div style="position:absolute;left:407.50px;top:629.70px;width:33.50px;height:13.20px;overflow:hidden"><span style="position:absolute;left:4.70px;top:3.30px;white-space:pre;font-family:'Liberation Sans',sans-serif;font-size:7.39px;line-height:7.39px;font-weight:400;font-style:normal;color:#3c3c3c;letter-spacing:0px;-webkit-text-stroke:0.06px #3c3c3c;transform-origin:0 0;transform:scaleX(0.7800)">Stock failure</span></div>
<div style="position:absolute;left:441.50px;top:629.70px;width:25.50px;height:13.20px;overflow:hidden"><span style="position:absolute;left:4.50px;top:3.30px;white-space:pre;font-family:'Liberation Sans',sans-serif;font-size:7.39px;line-height:7.39px;font-weight:400;font-style:normal;color:#3c3c3c;letter-spacing:0px;-webkit-text-stroke:0.06px #3c3c3c;transform-origin:0 0;transform:scaleX(0.7821)">Normal</span></div>
<div style="position:absolute;left:467.00px;top:629.70px;width:50.50px;height:13.20px;overflow:hidden"><span style="position:absolute;left:4.40px;top:3.30px;white-space:pre;font-family:'Liberation Sans',sans-serif;font-size:7.39px;line-height:7.39px;font-weight:400;font-style:normal;color:#3c3c3c;letter-spacing:0px;-webkit-text-stroke:0.06px #3c3c3c;transform-origin:0 0;transform:scaleX(0.7637)">7/6/2017 4:17:51 PM</span></div>
<div style="position:absolute;left:518.00px;top:629.70px;width:61.50px;height:13.20px;overflow:hidden"><span style="position:absolute;left:4.30px;top:3.30px;white-space:pre;font-family:'Liberation Sans',sans-serif;font-size:7.39px;line-height:7.39px;font-weight:400;font-style:normal;color:#3c3c3c;letter-spacing:0px;-webkit-text-stroke:0.06px #3c3c3c;transform-origin:0 0;transform:scaleX(0.7637)">7/6/2017 4:18:49 PM</span></div>
<span style="position:absolute;left:584.00px;top:633.00px;white-space:pre;font-family:'Liberation Sans',sans-serif;font-size:7.39px;line-height:7.39px;font-weight:400;font-style:normal;color:#1f86c6;letter-spacing:0px;-webkit-text-stroke:0.06px #1f86c6;transform-origin:0 0;transform:scaleX(0.7210)">201</span>
<span style="position:absolute;left:617.70px;top:633.00px;white-space:pre;font-family:'Liberation Sans',sans-serif;font-size:7.39px;line-height:7.39px;font-weight:400;font-style:normal;color:#3c3c3c;letter-spacing:0px;-webkit-text-stroke:0.06px #3c3c3c;transform-origin:0 0;transform:scaleX(0.6955)">NOR</span>
<div style="position:absolute;left:328.60px;top:645.22px;width:307.40px;height:13.20px;background:#f9f2f5;"></div>
<div style="position:absolute;left:334px;top:649px;width:7px;height:7px;border:1px solid #cccccc;box-sizing:border-box;background:#f9f2f5"></div>
<div style="position:absolute;left:363.00px;top:645.22px;width:44.20px;height:13.20px;overflow:hidden"><span style="position:absolute;left:4.00px;top:3.78px;white-space:pre;font-family:'Liberation Sans',sans-serif;font-size:7.39px;line-height:7.39px;font-weight:400;font-style:normal;color:#1f86c6;letter-spacing:0px;-webkit-text-stroke:0.06px #1f86c6;transform-origin:0 0;transform:scaleX(0.7209)">CDE1031703075</span></div>
<div style="position:absolute;left:407.50px;top:645.22px;width:33.50px;height:13.20px;overflow:hidden"><span style="position:absolute;left:4.70px;top:3.78px;white-space:pre;font-family:'Liberation Sans',sans-serif;font-size:7.39px;line-height:7.39px;font-weight:400;font-style:normal;color:#3c3c3c;letter-spacing:0px;-webkit-text-stroke:0.06px #3c3c3c;transform-origin:0 0;transform:scaleX(0.7800)">Stock failure</span></div>
<div style="position:absolute;left:441.50px;top:645.22px;width:25.50px;height:13.20px;overflow:hidden"><span style="position:absolute;left:4.50px;top:3.78px;white-space:pre;font-family:'Liberation Sans',sans-serif;font-size:7.39px;line-height:7.39px;font-weight:400;font-style:normal;color:#3c3c3c;letter-spacing:0px;-webkit-text-stroke:0.06px #3c3c3c;transform-origin:0 0;transform:scaleX(0.7821)">Normal</span></div>
<div style="position:absolute;left:467.00px;top:645.22px;width:50.50px;height:13.20px;overflow:hidden"><span style="position:absolute;left:4.40px;top:3.78px;white-space:pre;font-family:'Liberation Sans',sans-serif;font-size:7.39px;line-height:7.39px;font-weight:400;font-style:normal;color:#3c3c3c;letter-spacing:0px;-webkit-text-stroke:0.06px #3c3c3c;transform-origin:0 0;transform:scaleX(0.7637)">4/5/2017 7:07:26 AM</span></div>
<div style="position:absolute;left:518.00px;top:645.22px;width:61.50px;height:13.20px;overflow:hidden"><span style="position:absolute;left:4.30px;top:3.78px;white-space:pre;font-family:'Liberation Sans',sans-serif;font-size:7.39px;line-height:7.39px;font-weight:400;font-style:normal;color:#3c3c3c;letter-spacing:0px;-webkit-text-stroke:0.06px #3c3c3c;transform-origin:0 0;transform:scaleX(0.7637)">5/12/2017 8:55:18 AM</span></div>
<span style="position:absolute;left:584.00px;top:649.00px;white-space:pre;font-family:'Liberation Sans',sans-serif;font-size:7.39px;line-height:7.39px;font-weight:400;font-style:normal;color:#1f86c6;letter-spacing:0px;-webkit-text-stroke:0.06px #1f86c6;transform-origin:0 0;transform:scaleX(0.7210)">T008022</span>
<span style="position:absolute;left:617.70px;top:649.00px;white-space:pre;font-family:'Liberation Sans',sans-serif;font-size:7.39px;line-height:7.39px;font-weight:400;font-style:normal;color:#3c3c3c;letter-spacing:0px;-webkit-text-stroke:0.06px #3c3c3c;transform-origin:0 0;transform:scaleX(0.6955)">NOR</span>
<div style="position:absolute;left:328.60px;top:660.74px;width:307.40px;height:13.20px;background:#ffffff;"></div>
<div style="position:absolute;left:334px;top:665px;width:7px;height:7px;border:1px solid #cccccc;box-sizing:border-box;background:#ffffff"></div>
<div style="position:absolute;left:363.00px;top:660.74px;width:44.20px;height:13.20px;overflow:hidden"><span style="position:absolute;left:4.00px;top:3.26px;white-space:pre;font-family:'Liberation Sans',sans-serif;font-size:7.39px;line-height:7.39px;font-weight:400;font-style:normal;color:#1f86c6;letter-spacing:0px;-webkit-text-stroke:0.06px #1f86c6;transform-origin:0 0;transform:scaleX(0.7209)">CDE1031703326</span></div>
<div style="position:absolute;left:407.50px;top:660.74px;width:33.50px;height:13.20px;overflow:hidden"><span style="position:absolute;left:4.70px;top:3.26px;white-space:pre;font-family:'Liberation Sans',sans-serif;font-size:7.39px;line-height:7.39px;font-weight:400;font-style:normal;color:#3c3c3c;letter-spacing:0px;-webkit-text-stroke:0.06px #3c3c3c;transform-origin:0 0;transform:scaleX(0.7800)">Working</span></div>
<div style="position:absolute;left:441.50px;top:660.74px;width:25.50px;height:13.20px;overflow:hidden"><span style="position:absolute;left:4.50px;top:3.26px;white-space:pre;font-family:'Liberation Sans',sans-serif;font-size:7.39px;line-height:7.39px;font-weight:400;font-style:normal;color:#3c3c3c;letter-spacing:0px;-webkit-text-stroke:0.06px #3c3c3c;transform-origin:0 0;transform:scaleX(0.7821)">Normal</span></div>
<div style="position:absolute;left:467.00px;top:660.74px;width:50.50px;height:13.20px;overflow:hidden"><span style="position:absolute;left:4.40px;top:3.26px;white-space:pre;font-family:'Liberation Sans',sans-serif;font-size:7.39px;line-height:7.39px;font-weight:400;font-style:normal;color:#3c3c3c;letter-spacing:0px;-webkit-text-stroke:0.06px #3c3c3c;transform-origin:0 0;transform:scaleX(0.7637)">4/10/2017 4:38:33 PM</span></div>
<div style="position:absolute;left:518.00px;top:660.74px;width:61.50px;height:13.20px;overflow:hidden"><span style="position:absolute;left:4.30px;top:3.26px;white-space:pre;font-family:'Liberation Sans',sans-serif;font-size:7.39px;line-height:7.39px;font-weight:400;font-style:normal;color:#3c3c3c;letter-spacing:0px;-webkit-text-stroke:0.06px #3c3c3c;transform-origin:0 0;transform:scaleX(0.7637)">4/10/2017 4:40:52 PM</span></div>
<span style="position:absolute;left:584.00px;top:664.00px;white-space:pre;font-family:'Liberation Sans',sans-serif;font-size:7.39px;line-height:7.39px;font-weight:400;font-style:normal;color:#1f86c6;letter-spacing:0px;-webkit-text-stroke:0.06px #1f86c6;transform-origin:0 0;transform:scaleX(0.7210)">T001362</span>
<span style="position:absolute;left:617.70px;top:664.00px;white-space:pre;font-family:'Liberation Sans',sans-serif;font-size:7.39px;line-height:7.39px;font-weight:400;font-style:normal;color:#3c3c3c;letter-spacing:0px;-webkit-text-stroke:0.06px #3c3c3c;transform-origin:0 0;transform:scaleX(0.6955)">NOR</span>
<div style="position:absolute;left:328.60px;top:676.26px;width:307.40px;height:13.20px;background:#f9f2f5;"></div>
<div style="position:absolute;left:334px;top:680px;width:7px;height:7px;border:1px solid #cccccc;box-sizing:border-box;background:#f9f2f5"></div>
<div style="position:absolute;left:363.00px;top:676.26px;width:44.20px;height:13.20px;overflow:hidden"><span style="position:absolute;left:4.00px;top:3.74px;white-space:pre;font-family:'Liberation Sans',sans-serif;font-size:7.39px;line-height:7.39px;font-weight:400;font-style:normal;color:#1f86c6;letter-spacing:0px;-webkit-text-stroke:0.06px #1f86c6;transform-origin:0 0;transform:scaleX(0.7209)">CDE1031704153</span></div>
<div style="position:absolute;left:407.50px;top:676.26px;width:33.50px;height:13.20px;overflow:hidden"><span style="position:absolute;left:4.70px;top:3.74px;white-space:pre;font-family:'Liberation Sans',sans-serif;font-size:7.39px;line-height:7.39px;font-weight:400;font-style:normal;color:#3c3c3c;letter-spacing:0px;-webkit-text-stroke:0.06px #3c3c3c;transform-origin:0 0;transform:scaleX(0.7800)">Stock failure</span></div>
<div style="position:absolute;left:441.50px;top:676.26px;width:25.50px;height:13.20px;overflow:hidden"><span style="position:absolute;left:4.50px;top:3.74px;white-space:pre;font-family:'Liberation Sans',sans-serif;font-size:7.39px;line-height:7.39px;font-weight:400;font-style:normal;color:#3c3c3c;letter-spacing:0px;-webkit-text-stroke:0.06px #3c3c3c;transform-origin:0 0;transform:scaleX(0.7821)">Urgent</span></div>
<div style="position:absolute;left:467.00px;top:676.26px;width:50.50px;height:13.20px;overflow:hidden"><span style="position:absolute;left:4.40px;top:3.74px;white-space:pre;font-family:'Liberation Sans',sans-serif;font-size:7.39px;line-height:7.39px;font-weight:400;font-style:normal;color:#3c3c3c;letter-spacing:0px;-webkit-text-stroke:0.06px #3c3c3c;transform-origin:0 0;transform:scaleX(0.7637)">4/18/2017 10:00:59 AM</span></div>
<div style="position:absolute;left:518.00px;top:676.26px;width:61.50px;height:13.20px;overflow:hidden"><span style="position:absolute;left:4.30px;top:3.74px;white-space:pre;font-family:'Liberation Sans',sans-serif;font-size:7.39px;line-height:7.39px;font-weight:400;font-style:normal;color:#3c3c3c;letter-spacing:0px;-webkit-text-stroke:0.06px #3c3c3c;transform-origin:0 0;transform:scaleX(0.7637)">4/18/2017 10:01:13 AM</span></div>
<span style="position:absolute;left:584.00px;top:680.00px;white-space:pre;font-family:'Liberation Sans',sans-serif;font-size:7.39px;line-height:7.39px;font-weight:400;font-style:normal;color:#1f86c6;letter-spacing:0px;-webkit-text-stroke:0.06px #1f86c6;transform-origin:0 0;transform:scaleX(0.7210)">101</span>
<span style="position:absolute;left:617.70px;top:680.00px;white-space:pre;font-family:'Liberation Sans',sans-serif;font-size:7.39px;line-height:7.39px;font-weight:400;font-style:normal;color:#3c3c3c;letter-spacing:0px;-webkit-text-stroke:0.06px #3c3c3c;transform-origin:0 0;transform:scaleX(0.6955)">NOR</span>
<div style="position:absolute;left:328.60px;top:691.78px;width:307.40px;height:13.20px;background:#ffffff;"></div>
<div style="position:absolute;left:334px;top:696px;width:7px;height:7px;border:1px solid #cccccc;box-sizing:border-box;background:#ffffff"></div>
<div style="position:absolute;left:363.00px;top:691.78px;width:44.20px;height:13.20px;overflow:hidden"><span style="position:absolute;left:4.00px;top:3.22px;white-space:pre;font-family:'Liberation Sans',sans-serif;font-size:7.39px;line-height:7.39px;font-weight:400;font-style:normal;color:#1f86c6;letter-spacing:0px;-webkit-text-stroke:0.06px #1f86c6;transform-origin:0 0;transform:scaleX(0.7209)">CDE1031704194</span></div>
<div style="position:absolute;left:407.50px;top:691.78px;width:33.50px;height:13.20px;overflow:hidden"><span style="position:absolute;left:4.70px;top:3.22px;white-space:pre;font-family:'Liberation Sans',sans-serif;font-size:7.39px;line-height:7.39px;font-weight:400;font-style:normal;color:#3c3c3c;letter-spacing:0px;-webkit-text-stroke:0.06px #3c3c3c;transform-origin:0 0;transform:scaleX(0.7800)">Working</span></div>
<div style="position:absolute;left:441.50px;top:691.78px;width:25.50px;height:13.20px;overflow:hidden"><span style="position:absolute;left:4.50px;top:3.22px;white-space:pre;font-family:'Liberation Sans',sans-serif;font-size:7.39px;line-height:7.39px;font-weight:400;font-style:normal;color:#3c3c3c;letter-spacing:0px;-webkit-text-stroke:0.06px #3c3c3c;transform-origin:0 0;transform:scaleX(0.7821)">Normal</span></div>
<div style="position:absolute;left:467.00px;top:691.78px;width:50.50px;height:13.20px;overflow:hidden"><span style="position:absolute;left:4.40px;top:3.22px;white-space:pre;font-family:'Liberation Sans',sans-serif;font-size:7.39px;line-height:7.39px;font-weight:400;font-style:normal;color:#3c3c3c;letter-spacing:0px;-webkit-text-stroke:0.06px #3c3c3c;transform-origin:0 0;transform:scaleX(0.7637)">6/14/2017 2:58:48 PM</span></div>
<div style="position:absolute;left:518.00px;top:691.78px;width:61.50px;height:13.20px;overflow:hidden"><span style="position:absolute;left:4.30px;top:3.22px;white-space:pre;font-family:'Liberation Sans',sans-serif;font-size:7.39px;line-height:7.39px;font-weight:400;font-style:normal;color:#3c3c3c;letter-spacing:0px;-webkit-text-stroke:0.06px #3c3c3c;transform-origin:0 0;transform:scaleX(0.7637)">6/28/2017 9:54:29 AM</span></div>
<span style="position:absolute;left:584.00px;top:695.00px;white-space:pre;font-family:'Liberation Sans',sans-serif;font-size:7.39px;line-height:7.39px;font-weight:400;font-style:normal;color:#1f86c6;letter-spacing:0px;-webkit-text-stroke:0.06px #1f86c6;transform-origin:0 0;transform:scaleX(0.7210)">T007282</span>
<span style="position:absolute;left:617.70px;top:695.00px;white-space:pre;font-family:'Liberation Sans',sans-serif;font-size:7.39px;line-height:7.39px;font-weight:400;font-style:normal;color:#3c3c3c;letter-spacing:0px;-webkit-text-stroke:0.06px #3c3c3c;transform-origin:0 0;transform:scaleX(0.6955)">NOR</span>
<div style="position:absolute;left:328.60px;top:707.30px;width:307.40px;height:13.20px;background:#f9f2f5;"></div>
<div style="position:absolute;left:334px;top:711px;width:7px;height:7px;border:1px solid #cccccc;box-sizing:border-box;background:#f9f2f5"></div>
<div style="position:absolute;left:363.00px;top:707.30px;width:44.20px;height:13.20px;overflow:hidden"><span style="position:absolute;left:4.00px;top:3.70px;white-space:pre;font-family:'Liberation Sans',sans-serif;font-size:7.39px;line-height:7.39px;font-weight:400;font-style:normal;color:#1f86c6;letter-spacing:0px;-webkit-text-stroke:0.06px #1f86c6;transform-origin:0 0;transform:scaleX(0.7209)">CDE1031704226</span></div>
<div style="position:absolute;left:407.50px;top:707.30px;width:33.50px;height:13.20px;overflow:hidden"><span style="position:absolute;left:4.70px;top:3.70px;white-space:pre;font-family:'Liberation Sans',sans-serif;font-size:7.39px;line-height:7.39px;font-weight:400;font-style:normal;color:#3c3c3c;letter-spacing:0px;-webkit-text-stroke:0.06px #3c3c3c;transform-origin:0 0;transform:scaleX(0.7800)">Stock failure</span></div>
<div style="position:absolute;left:441.50px;top:707.30px;width:25.50px;height:13.20px;overflow:hidden"><span style="position:absolute;left:4.50px;top:3.70px;white-space:pre;font-family:'Liberation Sans',sans-serif;font-size:7.39px;line-height:7.39px;font-weight:400;font-style:normal;color:#3c3c3c;letter-spacing:0px;-webkit-text-stroke:0.06px #3c3c3c;transform-origin:0 0;transform:scaleX(0.7821)">Normal</span></div>
<div style="position:absolute;left:467.00px;top:707.30px;width:50.50px;height:13.20px;overflow:hidden"><span style="position:absolute;left:4.40px;top:3.70px;white-space:pre;font-family:'Liberation Sans',sans-serif;font-size:7.39px;line-height:7.39px;font-weight:400;font-style:normal;color:#3c3c3c;letter-spacing:0px;-webkit-text-stroke:0.06px #3c3c3c;transform-origin:0 0;transform:scaleX(0.7637)">7/12/2017 2:19:47 PM</span></div>
<div style="position:absolute;left:518.00px;top:707.30px;width:61.50px;height:13.20px;overflow:hidden"><span style="position:absolute;left:4.30px;top:3.70px;white-space:pre;font-family:'Liberation Sans',sans-serif;font-size:7.39px;line-height:7.39px;font-weight:400;font-style:normal;color:#3c3c3c;letter-spacing:0px;-webkit-text-stroke:0.06px #3c3c3c;transform-origin:0 0;transform:scaleX(0.7637)">7/12/2017 2:19:59 PM</span></div>
<span style="position:absolute;left:584.00px;top:711.00px;white-space:pre;font-family:'Liberation Sans',sans-serif;font-size:7.39px;line-height:7.39px;font-weight:400;font-style:normal;color:#1f86c6;letter-spacing:0px;-webkit-text-stroke:0.06px #1f86c6;transform-origin:0 0;transform:scaleX(0.7210)">301</span>
<span style="position:absolute;left:617.70px;top:711.00px;white-space:pre;font-family:'Liberation Sans',sans-serif;font-size:7.39px;line-height:7.39px;font-weight:400;font-style:normal;color:#3c3c3c;letter-spacing:0px;-webkit-text-stroke:0.06px #3c3c3c;transform-origin:0 0;transform:scaleX(0.6955)">NOR</span>
<div style="position:absolute;left:328.60px;top:722.82px;width:307.40px;height:13.20px;background:#ffffff;"></div>
<div style="position:absolute;left:334px;top:727px;width:7px;height:7px;border:1px solid #cccccc;box-sizing:border-box;background:#ffffff"></div>
<div style="position:absolute;left:363.00px;top:722.82px;width:44.20px;height:13.20px;overflow:hidden"><span style="position:absolute;left:4.00px;top:3.18px;white-space:pre;font-family:'Liberation Sans',sans-serif;font-size:7.39px;line-height:7.39px;font-weight:400;font-style:normal;color:#1f86c6;letter-spacing:0px;-webkit-text-stroke:0.06px #1f86c6;transform-origin:0 0;transform:scaleX(0.7209)">CDE1031704304</span></div>
<div style="position:absolute;left:407.50px;top:722.82px;width:33.50px;height:13.20px;overflow:hidden"><span style="position:absolute;left:4.70px;top:3.18px;white-space:pre;font-family:'Liberation Sans',sans-serif;font-size:7.39px;line-height:7.39px;font-weight:400;font-style:normal;color:#3c3c3c;letter-spacing:0px;-webkit-text-stroke:0.06px #3c3c3c;transform-origin:0 0;transform:scaleX(0.7800)">Stock failure</span></div>
<div style="position:absolute;left:441.50px;top:722.82px;width:25.50px;height:13.20px;overflow:hidden"><span style="position:absolute;left:4.50px;top:3.18px;white-space:pre;font-family:'Liberation Sans',sans-serif;font-size:7.39px;line-height:7.39px;font-weight:400;font-style:normal;color:#3c3c3c;letter-spacing:0px;-webkit-text-stroke:0.06px #3c3c3c;transform-origin:0 0;transform:scaleX(0.7821)">Urgent</span></div>
<div style="position:absolute;left:467.00px;top:722.82px;width:50.50px;height:13.20px;overflow:hidden"><span style="position:absolute;left:4.40px;top:3.18px;white-space:pre;font-family:'Liberation Sans',sans-serif;font-size:7.39px;line-height:7.39px;font-weight:400;font-style:normal;color:#3c3c3c;letter-spacing:0px;-webkit-text-stroke:0.06px #3c3c3c;transform-origin:0 0;transform:scaleX(0.7637)">4/18/2017 3:01:19 PM</span></div>
<div style="position:absolute;left:518.00px;top:722.82px;width:61.50px;height:13.20px;overflow:hidden"><span style="position:absolute;left:4.30px;top:3.18px;white-space:pre;font-family:'Liberation Sans',sans-serif;font-size:7.39px;line-height:7.39px;font-weight:400;font-style:normal;color:#3c3c3c;letter-spacing:0px;-webkit-text-stroke:0.06px #3c3c3c;transform-origin:0 0;transform:scaleX(0.7637)">4/18/2017 3:01:30 PM</span></div>
<span style="position:absolute;left:584.00px;top:726.00px;white-space:pre;font-family:'Liberation Sans',sans-serif;font-size:7.39px;line-height:7.39px;font-weight:400;font-style:normal;color:#1f86c6;letter-spacing:0px;-webkit-text-stroke:0.06px #1f86c6;transform-origin:0 0;transform:scaleX(0.7210)">T002491</span>
<span style="position:absolute;left:617.70px;top:726.00px;white-space:pre;font-family:'Liberation Sans',sans-serif;font-size:7.39px;line-height:7.39px;font-weight:400;font-style:normal;color:#3c3c3c;letter-spacing:0px;-webkit-text-stroke:0.06px #3c3c3c;transform-origin:0 0;transform:scaleX(0.6955)">NOR</span>
<div style="position:absolute;left:328.60px;top:738.34px;width:307.40px;height:13.20px;background:#f9f2f5;"></div>
<div style="position:absolute;left:334px;top:742px;width:7px;height:7px;border:1px solid #cccccc;box-sizing:border-box;background:#f9f2f5"></div>
<div style="position:absolute;left:363.00px;top:738.34px;width:44.20px;height:13.20px;overflow:hidden"><span style="position:absolute;left:4.00px;top:3.66px;white-space:pre;font-family:'Liberation Sans',sans-serif;font-size:7.39px;line-height:7.39px;font-weight:400;font-style:normal;color:#1f86c6;letter-spacing:0px;-webkit-text-stroke:0.06px #1f86c6;transform-origin:0 0;transform:scaleX(0.7209)">CDE1031704816</span></div>
<div style="position:absolute;left:407.50px;top:738.34px;width:33.50px;height:13.20px;overflow:hidden"><span style="position:absolute;left:4.70px;top:3.66px;white-space:pre;font-family:'Liberation Sans',sans-serif;font-size:7.39px;line-height:7.39px;font-weight:400;font-style:normal;color:#3c3c3c;letter-spacing:0px;-webkit-text-stroke:0.06px #3c3c3c;transform-origin:0 0;transform:scaleX(0.7800)">Working</span></div>
<div style="position:absolute;left:441.50px;top:738.34px;width:25.50px;height:13.20px;overflow:hidden"><span style="position:absolute;left:4.50px;top:3.66px;white-space:pre;font-family:'Liberation Sans',sans-serif;font-size:7.39px;line-height:7.39px;font-weight:400;font-style:normal;color:#3c3c3c;letter-spacing:0px;-webkit-text-stroke:0.06px #3c3c3c;transform-origin:0 0;transform:scaleX(0.7821)">Normal</span></div>
<div style="position:absolute;left:467.00px;top:738.34px;width:50.50px;height:13.20px;overflow:hidden"><span style="position:absolute;left:4.40px;top:3.66px;white-space:pre;font-family:'Liberation Sans',sans-serif;font-size:7.39px;line-height:7.39px;font-weight:400;font-style:normal;color:#3c3c3c;letter-spacing:0px;-webkit-text-stroke:0.06px #3c3c3c;transform-origin:0 0;transform:scaleX(0.7637)">5/31/2017 8:23:31 AM</span></div>
<div style="position:absolute;left:518.00px;top:738.34px;width:61.50px;height:13.20px;overflow:hidden"><span style="position:absolute;left:4.30px;top:3.66px;white-space:pre;font-family:'Liberation Sans',sans-serif;font-size:7.39px;line-height:7.39px;font-weight:400;font-style:normal;color:#3c3c3c;letter-spacing:0px;-webkit-text-stroke:0.06px #3c3c3c;transform-origin:0 0;transform:scaleX(0.7637)">7/13/2017 10:57:58 AM</span></div>
<span style="position:absolute;left:584.00px;top:742.00px;white-space:pre;font-family:'Liberation Sans',sans-serif;font-size:7.39px;line-height:7.39px;font-weight:400;font-style:normal;color:#1f86c6;letter-spacing:0px;-webkit-text-stroke:0.06px #1f86c6;transform-origin:0 0;transform:scaleX(0.7210)">T007870</span>
<span style="position:absolute;left:617.70px;top:742.00px;white-space:pre;font-family:'Liberation Sans',sans-serif;font-size:7.39px;line-height:7.39px;font-weight:400;font-style:normal;color:#3c3c3c;letter-spacing:0px;-webkit-text-stroke:0.06px #3c3c3c;transform-origin:0 0;transform:scaleX(0.6955)">NOR</span>
<div style="position:absolute;left:637.00px;top:330.90px;width:6.00px;height:55.90px;background:#c8c8c8;"></div>
<svg style="position:absolute;left:636.5px;top:322px" width="7" height="6" viewBox="0 0 7 6"><path d="M0.8 4.5 L3.5 1.5 L6.2 4.5" fill="none" stroke="#333" stroke-width="1.2"/></svg>
<svg style="position:absolute;left:636.5px;top:740.5px" width="7" height="6" viewBox="0 0 7 6"><path d="M0.8 1.5 L3.5 4.5 L6.2 1.5" fill="none" stroke="#333" stroke-width="1.2"/></svg>
<span style="position:absolute;left:331.00px;top:763.00px;white-space:pre;font-family:'Liberation Sans',sans-serif;font-size:6.72px;line-height:6.72px;font-weight:400;font-style:normal;color:#666;letter-spacing:0px;-webkit-text-stroke:0.06px #666;transform-origin:0 0;transform:scaleX(0.8161)">Page 1 of 3 (256 items)</span>
<span style="position:absolute;left:397.50px;top:762.00px;white-space:pre;font-family:'Liberation Sans',sans-serif;font-size:8.00px;line-height:8.00px;font-weight:400;font-style:normal;color:#bbb;letter-spacing:0px;-webkit-text-stroke:0.06px #bbb;transform-origin:0 0;transform:scaleX(1.3099)">‹</span>
<div style="position:absolute;left:410.00px;top:758.20px;width:13.20px;height:14.30px;background:#ee5b1b;"></div>
<span style="position:absolute;left:415.50px;top:762.00px;white-space:pre;font-family:'Liberation Sans',sans-serif;font-size:7.06px;line-height:7.06px;font-weight:400;font-style:normal;color:#fde5d8;letter-spacing:0px;-webkit-text-stroke:0.06px #fde5d8;transform-origin:0 0;transform:scaleX(0.6375)">1</span>
<div style="position:absolute;left:425.4px;top:758.2px;width:13.20px;height:14.3px;border:1px solid #cdcdcd;box-sizing:border-box"></div>
<span style="position:absolute;left:430.20px;top:762.00px;white-space:pre;font-family:'Liberation Sans',sans-serif;font-size:7.28px;line-height:7.28px;font-weight:400;font-style:normal;color:#555;letter-spacing:0px;-webkit-text-stroke:0.06px #555;transform-origin:0 0;transform:scaleX(0.8896)">2</span>
<div style="position:absolute;left:439.9px;top:758.2px;width:13.70px;height:14.3px;border:1px solid #cdcdcd;box-sizing:border-box"></div>
<span style="position:absolute;left:444.95px;top:762.00px;white-space:pre;font-family:'Liberation Sans',sans-serif;font-size:7.28px;line-height:7.28px;font-weight:400;font-style:normal;color:#555;letter-spacing:0px;-webkit-text-stroke:0.06px #555;transform-origin:0 0;transform:scaleX(0.8896)">3</span>
<div style="position:absolute;left:455.9px;top:758.2px;width:16.00px;height:14.3px;border:1px solid #cdcdcd;box-sizing:border-box"></div>
<span style="position:absolute;left:462.10px;top:762.00px;white-space:pre;font-family:'Liberation Sans',sans-serif;font-size:7.28px;line-height:7.28px;font-weight:400;font-style:normal;color:#555;letter-spacing:0px;-webkit-text-stroke:0.06px #555;transform-origin:0 0;transform:scaleX(0.8471)">&gt;</span>
<span style="position:absolute;left:586.10px;top:763.00px;white-space:pre;font-family:'Liberation Sans',sans-serif;font-size:6.72px;line-height:6.72px;font-weight:400;font-style:normal;color:#5a6070;letter-spacing:0px;-webkit-text-stroke:0.06px #5a6070;transform-origin:0 0;transform:scaleX(0.7586)">Page size:</span>
<div style="position:absolute;left:612.00px;top:758.20px;width:29.90px;height:13.90px;background:#5a5b58;"></div>
<span style="position:absolute;left:614.80px;top:763.00px;white-space:pre;font-family:'Liberation Sans',sans-serif;font-size:6.72px;line-height:6.72px;font-weight:400;font-style:normal;color:#fff;letter-spacing:0px;-webkit-text-stroke:0.06px #fff;transform-origin:0 0;transform:scaleX(0.7755)">100</span>
<svg style="position:absolute;left:632px;top:762.5px" width="6" height="5" viewBox="0 0 6 5"><path d="M1 1 L3 3.2 L5 1" fill="none" stroke="#fff" stroke-width="0.9"/></svg>
<span style="position:absolute;left:733.50px;top:283.00px;white-space:pre;font-family:'Liberation Sans',sans-serif;font-size:6.72px;line-height:6.72px;font-weight:700;font-style:normal;color:#333;letter-spacing:0px;transform-origin:0 0;transform:scaleX(0.8224)">Number of lines closed TODAY:</span>
<span style="position:absolute;left:972.30px;top:282.00px;white-space:pre;font-family:'Liberation Sans',sans-serif;font-size:6.72px;line-height:6.72px;font-weight:700;font-style:normal;color:#333;letter-spacing:0px;transform-origin:0 0;transform:scaleX(0.8325)">Number of Orders closed TODAY:</span>
<svg style="position:absolute;left:743.2px;top:336.4px" width="110.0" height="28.0" viewBox="-2 -2 110.0 28.0"><path d="M2.00,1.00 L12.40,1.00 M2.00,22.00 L12.40,22.00 M1.00,2.00 L1.00,10.50 M1.00,12.50 L1.00,21.00 M13.40,2.00 L13.40,10.50 M13.40,12.50 L13.40,21.00 M2.00,11.50 L6.30,11.50 M8.10,11.50 L12.40,11.50 M11.80,3.20 L8.80,9.70 M5.60,13.30 L2.60,19.80 M2.60,3.20 L5.60,9.70 M8.80,13.30 L11.80,19.80 M7.20,2.50 L7.20,10.00 M7.20,13.00 L7.20,20.50" stroke="#eef1f6" stroke-width="2.0" fill="none" stroke-linecap="round"/><path d="M22.40,1.00 L32.80,1.00 M22.40,22.00 L32.80,22.00 M21.40,2.00 L21.40,10.50 M21.40,12.50 L21.40,21.00 M33.80,2.00 L33.80,10.50 M33.80,12.50 L33.80,21.00 M22.40,11.50 L26.70,11.50 M28.50,11.50 L32.80,11.50 M32.20,3.20 L29.20,9.70 M26.00,13.30 L23.00,19.80 M23.00,3.20 L26.00,9.70 M29.20,13.30 L32.20,19.80 M27.60,2.50 L27.60,10.00 M27.60,13.00 L27.60,20.50" stroke="#eef1f6" stroke-width="2.0" fill="none" stroke-linecap="round"/><path d="M42.80,1.00 L53.20,1.00 M42.80,22.00 L53.20,22.00 M41.80,2.00 L41.80,10.50 M41.80,12.50 L41.80,21.00 M42.80,11.50 L47.10,11.50 M48.90,11.50 L53.20,11.50 M52.60,3.20 L49.60,9.70 M46.40,13.30 L43.40,19.80 M43.40,3.20 L46.40,9.70 M49.60,13.30 L52.60,19.80 M48.00,2.50 L48.00,10.00 M48.00,13.00 L48.00,20.50" stroke="#eef1f6" stroke-width="2.0" fill="none" stroke-linecap="round"/><path d="M54.20,2.00 L54.20,10.50 M54.20,12.50 L54.20,21.00" stroke="#1a86bf" stroke-width="2.1" fill="none" stroke-linecap="round"/><path d="M63.20,11.50 L67.50,11.50 M69.30,11.50 L73.60,11.50 M63.80,3.20 L66.80,9.70 M70.00,13.30 L73.00,19.80 M68.40,2.50 L68.40,10.00 M68.40,13.00 L68.40,20.50" stroke="#eef1f6" stroke-width="2.0" fill="none" stroke-linecap="round"/><path d="M63.20,1.00 L73.60,1.00 M74.60,2.00 L74.60,10.50 M74.60,12.50 L74.60,21.00 M63.20,22.00 L73.60,22.00 M62.20,12.50 L62.20,21.00 M62.20,2.00 L62.20,10.50 M73.00,3.20 L70.00,9.70 M66.80,13.30 L63.80,19.80" stroke="#1a86bf" stroke-width="2.1" fill="none" stroke-linecap="round"/><path d="M82.60,12.50 L82.60,21.00 M93.40,3.20 L90.40,9.70 M87.20,13.30 L84.20,19.80 M84.20,3.20 L87.20,9.70 M90.40,13.30 L93.40,19.80 M88.80,2.50 L88.80,10.00 M88.80,13.00 L88.80,20.50" stroke="#eef1f6" stroke-width="2.0" fill="none" stroke-linecap="round"/><path d="M83.60,1.00 L94.00,1.00 M95.00,2.00 L95.00,10.50 M95.00,12.50 L95.00,21.00 M83.60,22.00 L94.00,22.00 M82.60,2.00 L82.60,10.50 M83.60,11.50 L87.90,11.50 M89.70,11.50 L94.00,11.50" stroke="#1a86bf" stroke-width="2.1" fill="none" stroke-linecap="round"/></svg>
<svg style="position:absolute;left:982.7px;top:335.9px" width="110.0" height="28.0" viewBox="-2 -2 110.0 28.0"><path d="M2.00,1.00 L12.40,1.00 M2.00,22.00 L12.40,22.00 M1.00,2.00 L1.00,10.50 M1.00,12.50 L1.00,21.00 M13.40,2.00 L13.40,10.50 M13.40,12.50 L13.40,21.00 M2.00,11.50 L6.30,11.50 M8.10,11.50 L12.40,11.50 M11.80,3.20 L8.80,9.70 M5.60,13.30 L2.60,19.80 M2.60,3.20 L5.60,9.70 M8.80,13.30 L11.80,19.80 M7.20,2.50 L7.20,10.00 M7.20,13.00 L7.20,20.50" stroke="#eef1f6" stroke-width="2.0" fill="none" stroke-linecap="round"/><path d="M22.40,1.00 L32.80,1.00 M22.40,22.00 L32.80,22.00 M21.40,2.00 L21.40,10.50 M21.40,12.50 L21.40,21.00 M33.80,2.00 L33.80,10.50 M33.80,12.50 L33.80,21.00 M22.40,11.50 L26.70,11.50 M28.50,11.50 L32.80,11.50 M32.20,3.20 L29.20,9.70 M26.00,13.30 L23.00,19.80 M23.00,3.20 L26.00,9.70 M29.20,13.30 L32.20,19.80 M27.60,2.50 L27.60,10.00 M27.60,13.00 L27.60,20.50" stroke="#eef1f6" stroke-width="2.0" fill="none" stroke-linecap="round"/><path d="M42.80,1.00 L53.20,1.00 M42.80,22.00 L53.20,22.00 M41.80,2.00 L41.80,10.50 M41.80,12.50 L41.80,21.00 M54.20,2.00 L54.20,10.50 M54.20,12.50 L54.20,21.00 M42.80,11.50 L47.10,11.50 M48.90,11.50 L53.20,11.50 M52.60,3.20 L49.60,9.70 M46.40,13.30 L43.40,19.80 M43.40,3.20 L46.40,9.70 M49.60,13.30 L52.60,19.80 M48.00,2.50 L48.00,10.00 M48.00,13.00 L48.00,20.50" stroke="#eef1f6" stroke-width="2.0" fill="none" stroke-linecap="round"/><path d="M62.20,2.00 L62.20,10.50 M62.20,12.50 L62.20,21.00 M73.00,3.20 L70.00,9.70 M66.80,13.30 L63.80,19.80 M63.80,3.20 L66.80,9.70 M70.00,13.30 L73.00,19.80 M68.40,2.50 L68.40,10.00 M68.40,13.00 L68.40,20.50" stroke="#eef1f6" stroke-width="2.0" fill="none" stroke-linecap="round"/><path d="M63.20,1.00 L73.60,1.00 M74.60,2.00 L74.60,10.50 M74.60,12.50 L74.60,21.00 M63.20,22.00 L73.60,22.00 M63.20,11.50 L67.50,11.50 M69.30,11.50 L73.60,11.50" stroke="#1a86bf" stroke-width="2.1" fill="none" stroke-linecap="round"/><path d="M82.60,12.50 L82.60,21.00 M95.00,2.00 L95.00,10.50 M93.40,3.20 L90.40,9.70 M87.20,13.30 L84.20,19.80 M84.20,3.20 L87.20,9.70 M90.40,13.30 L93.40,19.80 M88.80,2.50 L88.80,10.00 M88.80,13.00 L88.80,20.50" stroke="#eef1f6" stroke-width="2.0" fill="none" stroke-linecap="round"/><path d="M83.60,1.00 L94.00,1.00 M82.60,2.00 L82.60,10.50 M83.60,11.50 L87.90,11.50 M89.70,11.50 L94.00,11.50 M95.00,12.50 L95.00,21.00 M83.60,22.00 L94.00,22.00" stroke="#1a86bf" stroke-width="2.1" fill="none" stroke-linecap="round"/></svg>
<span style="position:absolute;left:679.50px;top:418.00px;white-space:pre;font-family:'Liberation Sans',sans-serif;font-size:6.72px;line-height:6.72px;font-weight:700;font-style:normal;color:#333;letter-spacing:0px;transform-origin:0 0;transform:scaleX(0.9300)">Typology of Orders by number of lines:</span>
<div style="position:absolute;left:681px;top:426px;width:454px;height:340px;border:1px solid #c8c8c8;border-top-color:#bdbdbd;box-sizing:border-box;background:#fff"></div>
<svg style="position:absolute;left:0;top:0" width="1181" height="787" viewBox="0 0 1181 787"><rect x="698.4" y="432.7" width="430.0000000000001" height="308.3" fill="none" stroke="#e4e4e4" stroke-width="1"/><line x1="698.4" y1="741.00" x2="1128.4" y2="741.00" stroke="#e6e6e6" stroke-width="1"/><line x1="694.9" y1="741.00" x2="698.4" y2="741.00" stroke="#888" stroke-width="1"/><line x1="698.4" y1="725.06" x2="1128.4" y2="725.06" stroke="#e6e6e6" stroke-width="1"/><line x1="694.9" y1="725.06" x2="698.4" y2="725.06" stroke="#888" stroke-width="1"/><line x1="698.4" y1="709.12" x2="1128.4" y2="709.12" stroke="#e6e6e6" stroke-width="1"/><line x1="694.9" y1="709.12" x2="698.4" y2="709.12" stroke="#888" stroke-width="1"/><line x1="698.4" y1="693.18" x2="1128.4" y2="693.18" stroke="#e6e6e6" stroke-width="1"/><line x1="694.9" y1="693.18" x2="698.4" y2="693.18" stroke="#888" stroke-width="1"/><line x1="698.4" y1="677.24" x2="1128.4" y2="677.24" stroke="#e6e6e6" stroke-width="1"/><line x1="694.9" y1="677.24" x2="698.4" y2="677.24" stroke="#888" stroke-width="1"/><line x1="698.4" y1="661.30" x2="1128.4" y2="661.30" stroke="#e6e6e6" stroke-width="1"/><line x1="694.9" y1="661.30" x2="698.4" y2="661.30" stroke="#888" stroke-width="1"/><line x1="698.4" y1="645.36" x2="1128.4" y2="645.36" stroke="#e6e6e6" stroke-width="1"/><line x1="694.9" y1="645.36" x2="698.4" y2="645.36" stroke="#888" stroke-width="1"/><line x1="698.4" y1="629.42" x2="1128.4" y2="629.42" stroke="#e6e6e6" stroke-width="1"/><line x1="694.9" y1="629.42" x2="698.4" y2="629.42" stroke="#888" stroke-width="1"/><line x1="698.4" y1="613.48" x2="1128.4" y2="613.48" stroke="#e6e6e6" stroke-width="1"/><line x1="694.9" y1="613.48" x2="698.4" y2="613.48" stroke="#888" stroke-width="1"/><line x1="698.4" y1="597.54" x2="1128.4" y2="597.54" stroke="#e6e6e6" stroke-width="1"/><line x1="694.9" y1="597.54" x2="698.4" y2="597.54" stroke="#888" stroke-width="1"/><line x1="698.4" y1="581.60" x2="1128.4" y2="581.60" stroke="#e6e6e6" stroke-width="1"/><line x1="694.9" y1="581.60" x2="698.4" y2="581.60" stroke="#888" stroke-width="1"/><line x1="698.4" y1="565.66" x2="1128.4" y2="565.66" stroke="#e6e6e6" stroke-width="1"/><line x1="694.9" y1="565.66" x2="698.4" y2="565.66" stroke="#888" stroke-width="1"/><line x1="698.4" y1="549.72" x2="1128.4" y2="549.72" stroke="#e6e6e6" stroke-width="1"/><line x1="694.9" y1="549.72" x2="698.4" y2="549.72" stroke="#888" stroke-width="1"/><line x1="698.4" y1="533.78" x2="1128.4" y2="533.78" stroke="#e6e6e6" stroke-width="1"/><line x1="694.9" y1="533.78" x2="698.4" y2="533.78" stroke="#888" stroke-width="1"/><line x1="698.4" y1="517.84" x2="1128.4" y2="517.84" stroke="#e6e6e6" stroke-width="1"/><line x1="694.9" y1="517.84" x2="698.4" y2="517.84" stroke="#888" stroke-width="1"/><line x1="698.4" y1="501.90" x2="1128.4" y2="501.90" stroke="#e6e6e6" stroke-width="1"/><line x1="694.9" y1="501.90" x2="698.4" y2="501.90" stroke="#888" stroke-width="1"/><line x1="698.4" y1="485.96" x2="1128.4" y2="485.96" stroke="#e6e6e6" stroke-width="1"/><line x1="694.9" y1="485.96" x2="698.4" y2="485.96" stroke="#888" stroke-width="1"/><line x1="698.4" y1="470.02" x2="1128.4" y2="470.02" stroke="#e6e6e6" stroke-width="1"/><line x1="694.9" y1="470.02" x2="698.4" y2="470.02" stroke="#888" stroke-width="1"/><line x1="698.4" y1="454.08" x2="1128.4" y2="454.08" stroke="#e6e6e6" stroke-width="1"/><line x1="694.9" y1="454.08" x2="698.4" y2="454.08" stroke="#888" stroke-width="1"/><line x1="698.4" y1="438.14" x2="1128.4" y2="438.14" stroke="#e6e6e6" stroke-width="1"/><line x1="694.9" y1="438.14" x2="698.4" y2="438.14" stroke="#888" stroke-width="1"/><line x1="696.6" y1="735.69" x2="698.4" y2="735.69" stroke="#aaa" stroke-width="0.7"/><line x1="696.6" y1="730.37" x2="698.4" y2="730.37" stroke="#aaa" stroke-width="0.7"/><line x1="696.6" y1="719.75" x2="698.4" y2="719.75" stroke="#aaa" stroke-width="0.7"/><line x1="696.6" y1="714.43" x2="698.4" y2="714.43" stroke="#aaa" stroke-width="0.7"/><line x1="696.6" y1="703.81" x2="698.4" y2="703.81" stroke="#aaa" stroke-width="0.7"/><line x1="696.6" y1="698.49" x2="698.4" y2="698.49" stroke="#aaa" stroke-width="0.7"/><line x1="696.6" y1="687.87" x2="698.4" y2="687.87" stroke="#aaa" stroke-width="0.7"/><line x1="696.6" y1="682.55" x2="698.4" y2="682.55" stroke="#aaa" stroke-width="0.7"/><line x1="696.6" y1="671.93" x2="698.4" y2="671.93" stroke="#aaa" stroke-width="0.7"/><line x1="696.6" y1="666.61" x2="698.4" y2="666.61" stroke="#aaa" stroke-width="0.7"/><line x1="696.6" y1="655.99" x2="698.4" y2="655.99" stroke="#aaa" stroke-width="0.7"/><line x1="696.6" y1="650.67" x2="698.4" y2="650.67" stroke="#aaa" stroke-width="0.7"/><line x1="696.6" y1="640.05" x2="698.4" y2="640.05" stroke="#aaa" stroke-width="0.7"/><line x1="696.6" y1="634.73" x2="698.4" y2="634.73" stroke="#aaa" stroke-width="0.7"/><line x1="696.6" y1="624.11" x2="698.4" y2="624.11" stroke="#aaa" stroke-width="0.7"/><line x1="696.6" y1="618.79" x2="698.4" y2="618.79" stroke="#aaa" stroke-width="0.7"/><line x1="696.6" y1="608.17" x2="698.4" y2="608.17" stroke="#aaa" stroke-width="0.7"/><line x1="696.6" y1="602.85" x2="698.4" y2="602.85" stroke="#aaa" stroke-width="0.7"/><line x1="696.6" y1="592.23" x2="698.4" y2="592.23" stroke="#aaa" stroke-width="0.7"/><line x1="696.6" y1="586.91" x2="698.4" y2="586.91" stroke="#aaa" stroke-width="0.7"/><line x1="696.6" y1="576.29" x2="698.4" y2="576.29" stroke="#aaa" stroke-width="0.7"/><line x1="696.6" y1="570.97" x2="698.4" y2="570.97" stroke="#aaa" stroke-width="0.7"/><line x1="696.6" y1="560.35" x2="698.4" y2="560.35" stroke="#aaa" stroke-width="0.7"/><line x1="696.6" y1="555.03" x2="698.4" y2="555.03" stroke="#aaa" stroke-width="0.7"/><line x1="696.6" y1="544.41" x2="698.4" y2="544.41" stroke="#aaa" stroke-width="0.7"/><line x1="696.6" y1="539.09" x2="698.4" y2="539.09" stroke="#aaa" stroke-width="0.7"/><line x1="696.6" y1="528.47" x2="698.4" y2="528.47" stroke="#aaa" stroke-width="0.7"/><line x1="696.6" y1="523.15" x2="698.4" y2="523.15" stroke="#aaa" stroke-width="0.7"/><line x1="696.6" y1="512.53" x2="698.4" y2="512.53" stroke="#aaa" stroke-width="0.7"/><line x1="696.6" y1="507.21" x2="698.4" y2="507.21" stroke="#aaa" stroke-width="0.7"/><line x1="696.6" y1="496.59" x2="698.4" y2="496.59" stroke="#aaa" stroke-width="0.7"/><line x1="696.6" y1="491.27" x2="698.4" y2="491.27" stroke="#aaa" stroke-width="0.7"/><line x1="696.6" y1="480.65" x2="698.4" y2="480.65" stroke="#aaa" stroke-width="0.7"/><line x1="696.6" y1="475.33" x2="698.4" y2="475.33" stroke="#aaa" stroke-width="0.7"/><line x1="696.6" y1="464.71" x2="698.4" y2="464.71" stroke="#aaa" stroke-width="0.7"/><line x1="696.6" y1="459.39" x2="698.4" y2="459.39" stroke="#aaa" stroke-width="0.7"/><line x1="696.6" y1="448.77" x2="698.4" y2="448.77" stroke="#aaa" stroke-width="0.7"/><line x1="696.6" y1="443.45" x2="698.4" y2="443.45" stroke="#aaa" stroke-width="0.7"/><line x1="698.4" y1="432.7" x2="698.4" y2="741.0" stroke="#999" stroke-width="0.8"/><rect x="702.70" y="733.03" width="6.2" height="7.97" fill="#1766a6"/><line x1="705.80" y1="741.0" x2="705.80" y2="743.5" stroke="#aaa" stroke-width="0.6"/><rect x="711.95" y="546.53" width="6.2" height="194.47" fill="#1766a6"/><line x1="715.05" y1="741.0" x2="715.05" y2="743.5" stroke="#aaa" stroke-width="0.6"/><rect x="721.20" y="680.67" width="6.2" height="60.33" fill="#1766a6"/><line x1="724.30" y1="741.0" x2="724.30" y2="743.5" stroke="#aaa" stroke-width="0.6"/><rect x="730.45" y="716.29" width="6.2" height="24.71" fill="#1766a6"/><line x1="733.55" y1="741.0" x2="733.55" y2="743.5" stroke="#aaa" stroke-width="0.6"/><rect x="739.70" y="728.81" width="6.2" height="12.19" fill="#1766a6"/><line x1="742.80" y1="741.0" x2="742.80" y2="743.5" stroke="#aaa" stroke-width="0.6"/><rect x="748.95" y="735.82" width="6.2" height="5.18" fill="#1766a6"/><line x1="752.05" y1="741.0" x2="752.05" y2="743.5" stroke="#aaa" stroke-width="0.6"/><rect x="758.20" y="628.62" width="6.2" height="112.38" fill="#1766a6"/><line x1="761.30" y1="741.0" x2="761.30" y2="743.5" stroke="#aaa" stroke-width="0.6"/><rect x="767.45" y="740.04" width="6.2" height="0.96" fill="#1766a6"/><line x1="770.55" y1="741.0" x2="770.55" y2="743.5" stroke="#aaa" stroke-width="0.6"/><rect x="776.70" y="738.21" width="6.2" height="2.79" fill="#1766a6"/><line x1="779.80" y1="741.0" x2="779.80" y2="743.5" stroke="#aaa" stroke-width="0.6"/><rect x="785.95" y="701.47" width="6.2" height="39.53" fill="#1766a6"/><line x1="789.05" y1="741.0" x2="789.05" y2="743.5" stroke="#aaa" stroke-width="0.6"/><rect x="795.20" y="738.61" width="6.2" height="2.39" fill="#1766a6"/><line x1="798.30" y1="741.0" x2="798.30" y2="743.5" stroke="#aaa" stroke-width="0.6"/><rect x="804.45" y="734.07" width="6.2" height="6.93" fill="#1766a6"/><line x1="807.55" y1="741.0" x2="807.55" y2="743.5" stroke="#aaa" stroke-width="0.6"/><rect x="813.70" y="738.05" width="6.2" height="2.95" fill="#1766a6"/><line x1="816.80" y1="741.0" x2="816.80" y2="743.5" stroke="#aaa" stroke-width="0.6"/><rect x="822.95" y="740.04" width="6.2" height="0.96" fill="#1766a6"/><line x1="826.05" y1="741.0" x2="826.05" y2="743.5" stroke="#aaa" stroke-width="0.6"/><rect x="832.20" y="723.23" width="6.2" height="17.77" fill="#1766a6"/><line x1="835.30" y1="741.0" x2="835.30" y2="743.5" stroke="#aaa" stroke-width="0.6"/><rect x="841.45" y="740.60" width="6.2" height="0.40" fill="#1766a6"/><line x1="844.55" y1="741.0" x2="844.55" y2="743.5" stroke="#aaa" stroke-width="0.6"/><rect x="850.70" y="459.66" width="6.2" height="281.34" fill="#1766a6"/><line x1="853.80" y1="741.0" x2="853.80" y2="743.5" stroke="#aaa" stroke-width="0.6"/><rect x="859.95" y="740.20" width="6.2" height="0.80" fill="#1766a6"/><line x1="863.05" y1="741.0" x2="863.05" y2="743.5" stroke="#aaa" stroke-width="0.6"/><rect x="869.20" y="739.80" width="6.2" height="1.20" fill="#1766a6"/><line x1="872.30" y1="741.0" x2="872.30" y2="743.5" stroke="#aaa" stroke-width="0.6"/><rect x="878.45" y="738.61" width="6.2" height="2.39" fill="#1766a6"/><line x1="881.55" y1="741.0" x2="881.55" y2="743.5" stroke="#aaa" stroke-width="0.6"/><rect x="887.70" y="735.82" width="6.2" height="5.18" fill="#1766a6"/><line x1="890.80" y1="741.0" x2="890.80" y2="743.5" stroke="#aaa" stroke-width="0.6"/><rect x="896.95" y="739.41" width="6.2" height="1.59" fill="#1766a6"/><line x1="900.05" y1="741.0" x2="900.05" y2="743.5" stroke="#aaa" stroke-width="0.6"/><rect x="906.20" y="739.41" width="6.2" height="1.59" fill="#1766a6"/><line x1="909.30" y1="741.0" x2="909.30" y2="743.5" stroke="#aaa" stroke-width="0.6"/><rect x="915.45" y="740.20" width="6.2" height="0.80" fill="#1766a6"/><line x1="918.55" y1="741.0" x2="918.55" y2="743.5" stroke="#aaa" stroke-width="0.6"/><rect x="924.70" y="740.04" width="6.2" height="0.96" fill="#1766a6"/><line x1="927.80" y1="741.0" x2="927.80" y2="743.5" stroke="#aaa" stroke-width="0.6"/><rect x="933.95" y="740.20" width="6.2" height="0.80" fill="#1766a6"/><line x1="937.05" y1="741.0" x2="937.05" y2="743.5" stroke="#aaa" stroke-width="0.6"/><rect x="943.20" y="740.60" width="6.2" height="0.40" fill="#1766a6"/><line x1="946.30" y1="741.0" x2="946.30" y2="743.5" stroke="#aaa" stroke-width="0.6"/><rect x="952.45" y="740.20" width="6.2" height="0.80" fill="#1766a6"/><line x1="955.55" y1="741.0" x2="955.55" y2="743.5" stroke="#aaa" stroke-width="0.6"/><rect x="961.70" y="740.60" width="6.2" height="0.40" fill="#1766a6"/><line x1="964.80" y1="741.0" x2="964.80" y2="743.5" stroke="#aaa" stroke-width="0.6"/><rect x="970.95" y="740.20" width="6.2" height="0.80" fill="#1766a6"/><line x1="974.05" y1="741.0" x2="974.05" y2="743.5" stroke="#aaa" stroke-width="0.6"/><rect x="980.20" y="740.60" width="6.2" height="0.40" fill="#1766a6"/><line x1="983.30" y1="741.0" x2="983.30" y2="743.5" stroke="#aaa" stroke-width="0.6"/><rect x="989.45" y="740.60" width="6.2" height="0.40" fill="#1766a6"/><line x1="992.55" y1="741.0" x2="992.55" y2="743.5" stroke="#aaa" stroke-width="0.6"/><rect x="998.70" y="739.25" width="6.2" height="1.75" fill="#1766a6"/><line x1="1001.80" y1="741.0" x2="1001.80" y2="743.5" stroke="#aaa" stroke-width="0.6"/><rect x="1007.95" y="740.04" width="6.2" height="0.96" fill="#1766a6"/><line x1="1011.05" y1="741.0" x2="1011.05" y2="743.5" stroke="#aaa" stroke-width="0.6"/><rect x="1017.20" y="740.60" width="6.2" height="0.40" fill="#1766a6"/><line x1="1020.30" y1="741.0" x2="1020.30" y2="743.5" stroke="#aaa" stroke-width="0.6"/><rect x="1026.45" y="740.60" width="6.2" height="0.40" fill="#1766a6"/><line x1="1029.55" y1="741.0" x2="1029.55" y2="743.5" stroke="#aaa" stroke-width="0.6"/><rect x="1035.70" y="740.04" width="6.2" height="0.96" fill="#1766a6"/><line x1="1038.80" y1="741.0" x2="1038.80" y2="743.5" stroke="#aaa" stroke-width="0.6"/><rect x="1044.95" y="740.60" width="6.2" height="0.40" fill="#1766a6"/><line x1="1048.05" y1="741.0" x2="1048.05" y2="743.5" stroke="#aaa" stroke-width="0.6"/><rect x="1054.20" y="740.60" width="6.2" height="0.40" fill="#1766a6"/><line x1="1057.30" y1="741.0" x2="1057.30" y2="743.5" stroke="#aaa" stroke-width="0.6"/><rect x="1063.45" y="740.60" width="6.2" height="0.40" fill="#1766a6"/><line x1="1066.55" y1="741.0" x2="1066.55" y2="743.5" stroke="#aaa" stroke-width="0.6"/><rect x="1072.70" y="740.60" width="6.2" height="0.40" fill="#1766a6"/><line x1="1075.80" y1="741.0" x2="1075.80" y2="743.5" stroke="#aaa" stroke-width="0.6"/><rect x="1081.95" y="740.60" width="6.2" height="0.40" fill="#1766a6"/><line x1="1085.05" y1="741.0" x2="1085.05" y2="743.5" stroke="#aaa" stroke-width="0.6"/><rect x="1091.20" y="740.20" width="6.2" height="0.80" fill="#1766a6"/><line x1="1094.30" y1="741.0" x2="1094.30" y2="743.5" stroke="#aaa" stroke-width="0.6"/><rect x="1100.45" y="740.20" width="6.2" height="0.80" fill="#1766a6"/><line x1="1103.55" y1="741.0" x2="1103.55" y2="743.5" stroke="#aaa" stroke-width="0.6"/><rect x="1109.70" y="740.04" width="6.2" height="0.96" fill="#1766a6"/><line x1="1112.80" y1="741.0" x2="1112.80" y2="743.5" stroke="#aaa" stroke-width="0.6"/><rect x="1118.95" y="740.60" width="6.2" height="0.40" fill="#1766a6"/><line x1="1122.05" y1="741.0" x2="1122.05" y2="743.5" stroke="#aaa" stroke-width="0.6"/><line x1="698.4" y1="741.0" x2="1128.4" y2="741.0" stroke="#aaa" stroke-width="1"/></svg>
<span style="position:absolute;left:704.00px;top:755.00px;white-space:pre;font-family:'Liberation Sans',sans-serif;font-size:7.62px;line-height:7.62px;font-weight:400;font-style:normal;color:#333;letter-spacing:0px;-webkit-text-stroke:0.06px #333;transform-origin:0 0;transform:scaleX(0.8502)">8</span>
<span style="position:absolute;left:713.25px;top:746.00px;white-space:pre;font-family:'Liberation Sans',sans-serif;font-size:7.62px;line-height:7.62px;font-weight:400;font-style:normal;color:#333;letter-spacing:0px;-webkit-text-stroke:0.06px #333;transform-origin:0 0;transform:scaleX(0.8502)">1</span>
<span style="position:absolute;left:722.50px;top:755.00px;white-space:pre;font-family:'Liberation Sans',sans-serif;font-size:7.62px;line-height:7.62px;font-weight:400;font-style:normal;color:#333;letter-spacing:0px;-webkit-text-stroke:0.06px #333;transform-origin:0 0;transform:scaleX(0.8502)">3</span>
<span style="position:absolute;left:731.75px;top:746.00px;white-space:pre;font-family:'Liberation Sans',sans-serif;font-size:7.62px;line-height:7.62px;font-weight:400;font-style:normal;color:#333;letter-spacing:0px;-webkit-text-stroke:0.06px #333;transform-origin:0 0;transform:scaleX(0.8502)">5</span>
<span style="position:absolute;left:741.00px;top:755.00px;white-space:pre;font-family:'Liberation Sans',sans-serif;font-size:7.62px;line-height:7.62px;font-weight:400;font-style:normal;color:#333;letter-spacing:0px;-webkit-text-stroke:0.06px #333;transform-origin:0 0;transform:scaleX(0.8502)">7</span>
<span style="position:absolute;left:748.45px;top:746.00px;white-space:pre;font-family:'Liberation Sans',sans-serif;font-size:7.62px;line-height:7.62px;font-weight:400;font-style:normal;color:#333;letter-spacing:0px;-webkit-text-stroke:0.06px #333;transform-origin:0 0;transform:scaleX(0.9107)">11</span>
<span style="position:absolute;left:759.50px;top:755.00px;white-space:pre;font-family:'Liberation Sans',sans-serif;font-size:7.62px;line-height:7.62px;font-weight:400;font-style:normal;color:#333;letter-spacing:0px;-webkit-text-stroke:0.06px #333;transform-origin:0 0;transform:scaleX(0.8502)">2</span>
<span style="position:absolute;left:766.95px;top:746.00px;white-space:pre;font-family:'Liberation Sans',sans-serif;font-size:7.62px;line-height:7.62px;font-weight:400;font-style:normal;color:#333;letter-spacing:0px;-webkit-text-stroke:0.06px #333;transform-origin:0 0;transform:scaleX(0.8502)">34</span>
<span style="position:absolute;left:776.20px;top:755.00px;white-space:pre;font-family:'Liberation Sans',sans-serif;font-size:7.62px;line-height:7.62px;font-weight:400;font-style:normal;color:#333;letter-spacing:0px;-webkit-text-stroke:0.06px #333;transform-origin:0 0;transform:scaleX(0.8502)">12</span>
<span style="position:absolute;left:787.25px;top:746.00px;white-space:pre;font-family:'Liberation Sans',sans-serif;font-size:7.62px;line-height:7.62px;font-weight:400;font-style:normal;color:#333;letter-spacing:0px;-webkit-text-stroke:0.06px #333;transform-origin:0 0;transform:scaleX(0.8502)">4</span>
<span style="position:absolute;left:794.70px;top:755.00px;white-space:pre;font-family:'Liberation Sans',sans-serif;font-size:7.62px;line-height:7.62px;font-weight:400;font-style:normal;color:#333;letter-spacing:0px;-webkit-text-stroke:0.06px #333;transform-origin:0 0;transform:scaleX(0.8502)">15</span>
<span style="position:absolute;left:805.75px;top:746.00px;white-space:pre;font-family:'Liberation Sans',sans-serif;font-size:7.62px;line-height:7.62px;font-weight:400;font-style:normal;color:#333;letter-spacing:0px;-webkit-text-stroke:0.06px #333;transform-origin:0 0;transform:scaleX(0.8502)">9</span>
<span style="position:absolute;left:813.20px;top:755.00px;white-space:pre;font-family:'Liberation Sans',sans-serif;font-size:7.62px;line-height:7.62px;font-weight:400;font-style:normal;color:#333;letter-spacing:0px;-webkit-text-stroke:0.06px #333;transform-origin:0 0;transform:scaleX(0.8502)">13</span>
<span style="position:absolute;left:822.45px;top:746.00px;white-space:pre;font-family:'Liberation Sans',sans-serif;font-size:7.62px;line-height:7.62px;font-weight:400;font-style:normal;color:#333;letter-spacing:0px;-webkit-text-stroke:0.06px #333;transform-origin:0 0;transform:scaleX(0.8502)">23</span>
<span style="position:absolute;left:833.50px;top:755.00px;white-space:pre;font-family:'Liberation Sans',sans-serif;font-size:7.62px;line-height:7.62px;font-weight:400;font-style:normal;color:#333;letter-spacing:0px;-webkit-text-stroke:0.06px #333;transform-origin:0 0;transform:scaleX(0.8502)">6</span>
<span style="position:absolute;left:840.95px;top:746.00px;white-space:pre;font-family:'Liberation Sans',sans-serif;font-size:7.62px;line-height:7.62px;font-weight:400;font-style:normal;color:#333;letter-spacing:0px;-webkit-text-stroke:0.06px #333;transform-origin:0 0;transform:scaleX(0.8502)">43</span>
<span style="position:absolute;left:852.00px;top:755.00px;white-space:pre;font-family:'Liberation Sans',sans-serif;font-size:7.62px;line-height:7.62px;font-weight:400;font-style:normal;color:#333;letter-spacing:0px;-webkit-text-stroke:0.06px #333;transform-origin:0 0;transform:scaleX(0.8502)">0</span>
<span style="position:absolute;left:859.45px;top:746.00px;white-space:pre;font-family:'Liberation Sans',sans-serif;font-size:7.62px;line-height:7.62px;font-weight:400;font-style:normal;color:#333;letter-spacing:0px;-webkit-text-stroke:0.06px #333;transform-origin:0 0;transform:scaleX(0.8502)">26</span>
<span style="position:absolute;left:868.70px;top:755.00px;white-space:pre;font-family:'Liberation Sans',sans-serif;font-size:7.62px;line-height:7.62px;font-weight:400;font-style:normal;color:#333;letter-spacing:0px;-webkit-text-stroke:0.06px #333;transform-origin:0 0;transform:scaleX(0.8502)">18</span>
<span style="position:absolute;left:877.95px;top:746.00px;white-space:pre;font-family:'Liberation Sans',sans-serif;font-size:7.62px;line-height:7.62px;font-weight:400;font-style:normal;color:#333;letter-spacing:0px;-webkit-text-stroke:0.06px #333;transform-origin:0 0;transform:scaleX(0.8502)">14</span>
<span style="position:absolute;left:887.20px;top:755.00px;white-space:pre;font-family:'Liberation Sans',sans-serif;font-size:7.62px;line-height:7.62px;font-weight:400;font-style:normal;color:#333;letter-spacing:0px;-webkit-text-stroke:0.06px #333;transform-origin:0 0;transform:scaleX(0.8502)">10</span>
<span style="position:absolute;left:896.45px;top:746.00px;white-space:pre;font-family:'Liberation Sans',sans-serif;font-size:7.62px;line-height:7.62px;font-weight:400;font-style:normal;color:#333;letter-spacing:0px;-webkit-text-stroke:0.06px #333;transform-origin:0 0;transform:scaleX(0.8502)">17</span>
<span style="position:absolute;left:905.70px;top:755.00px;white-space:pre;font-family:'Liberation Sans',sans-serif;font-size:7.62px;line-height:7.62px;font-weight:400;font-style:normal;color:#333;letter-spacing:0px;-webkit-text-stroke:0.06px #333;transform-origin:0 0;transform:scaleX(0.8502)">16</span>
<span style="position:absolute;left:914.95px;top:746.00px;white-space:pre;font-family:'Liberation Sans',sans-serif;font-size:7.62px;line-height:7.62px;font-weight:400;font-style:normal;color:#333;letter-spacing:0px;-webkit-text-stroke:0.06px #333;transform-origin:0 0;transform:scaleX(0.8502)">27</span>
<span style="position:absolute;left:924.20px;top:755.00px;white-space:pre;font-family:'Liberation Sans',sans-serif;font-size:7.62px;line-height:7.62px;font-weight:400;font-style:normal;color:#333;letter-spacing:0px;-webkit-text-stroke:0.06px #333;transform-origin:0 0;transform:scaleX(0.8502)">19</span>
<span style="position:absolute;left:933.45px;top:746.00px;white-space:pre;font-family:'Liberation Sans',sans-serif;font-size:7.62px;line-height:7.62px;font-weight:400;font-style:normal;color:#333;letter-spacing:0px;-webkit-text-stroke:0.06px #333;transform-origin:0 0;transform:scaleX(0.8502)">37</span>
<span style="position:absolute;left:942.70px;top:755.00px;white-space:pre;font-family:'Liberation Sans',sans-serif;font-size:7.62px;line-height:7.62px;font-weight:400;font-style:normal;color:#333;letter-spacing:0px;-webkit-text-stroke:0.06px #333;transform-origin:0 0;transform:scaleX(0.8502)">74</span>
<span style="position:absolute;left:951.95px;top:746.00px;white-space:pre;font-family:'Liberation Sans',sans-serif;font-size:7.62px;line-height:7.62px;font-weight:400;font-style:normal;color:#333;letter-spacing:0px;-webkit-text-stroke:0.06px #333;transform-origin:0 0;transform:scaleX(0.8502)">28</span>
<span style="position:absolute;left:961.20px;top:755.00px;white-space:pre;font-family:'Liberation Sans',sans-serif;font-size:7.62px;line-height:7.62px;font-weight:400;font-style:normal;color:#333;letter-spacing:0px;-webkit-text-stroke:0.06px #333;transform-origin:0 0;transform:scaleX(0.8502)">51</span>
<span style="position:absolute;left:970.45px;top:746.00px;white-space:pre;font-family:'Liberation Sans',sans-serif;font-size:7.62px;line-height:7.62px;font-weight:400;font-style:normal;color:#333;letter-spacing:0px;-webkit-text-stroke:0.06px #333;transform-origin:0 0;transform:scaleX(0.8502)">33</span>
<span style="position:absolute;left:979.70px;top:755.00px;white-space:pre;font-family:'Liberation Sans',sans-serif;font-size:7.62px;line-height:7.62px;font-weight:400;font-style:normal;color:#333;letter-spacing:0px;-webkit-text-stroke:0.06px #333;transform-origin:0 0;transform:scaleX(0.8502)">72</span>
<span style="position:absolute;left:987.15px;top:746.00px;white-space:pre;font-family:'Liberation Sans',sans-serif;font-size:7.62px;line-height:7.62px;font-weight:400;font-style:normal;color:#333;letter-spacing:0px;-webkit-text-stroke:0.06px #333;transform-origin:0 0;transform:scaleX(0.8502)">195</span>
<span style="position:absolute;left:998.20px;top:755.00px;white-space:pre;font-family:'Liberation Sans',sans-serif;font-size:7.62px;line-height:7.62px;font-weight:400;font-style:normal;color:#333;letter-spacing:0px;-webkit-text-stroke:0.06px #333;transform-origin:0 0;transform:scaleX(0.8502)">22</span>
<span style="position:absolute;left:1007.45px;top:746.00px;white-space:pre;font-family:'Liberation Sans',sans-serif;font-size:7.62px;line-height:7.62px;font-weight:400;font-style:normal;color:#333;letter-spacing:0px;-webkit-text-stroke:0.06px #333;transform-origin:0 0;transform:scaleX(0.8502)">29</span>
<span style="position:absolute;left:1016.70px;top:755.00px;white-space:pre;font-family:'Liberation Sans',sans-serif;font-size:7.62px;line-height:7.62px;font-weight:400;font-style:normal;color:#333;letter-spacing:0px;-webkit-text-stroke:0.06px #333;transform-origin:0 0;transform:scaleX(0.8502)">49</span>
<span style="position:absolute;left:1025.95px;top:746.00px;white-space:pre;font-family:'Liberation Sans',sans-serif;font-size:7.62px;line-height:7.62px;font-weight:400;font-style:normal;color:#333;letter-spacing:0px;-webkit-text-stroke:0.06px #333;transform-origin:0 0;transform:scaleX(0.8502)">59</span>
<span style="position:absolute;left:1035.20px;top:755.00px;white-space:pre;font-family:'Liberation Sans',sans-serif;font-size:7.62px;line-height:7.62px;font-weight:400;font-style:normal;color:#333;letter-spacing:0px;-webkit-text-stroke:0.06px #333;transform-origin:0 0;transform:scaleX(0.8502)">30</span>
<span style="position:absolute;left:1044.45px;top:746.00px;white-space:pre;font-family:'Liberation Sans',sans-serif;font-size:7.62px;line-height:7.62px;font-weight:400;font-style:normal;color:#333;letter-spacing:0px;-webkit-text-stroke:0.06px #333;transform-origin:0 0;transform:scaleX(0.8502)">77</span>
<span style="position:absolute;left:1053.70px;top:755.00px;white-space:pre;font-family:'Liberation Sans',sans-serif;font-size:7.62px;line-height:7.62px;font-weight:400;font-style:normal;color:#333;letter-spacing:0px;-webkit-text-stroke:0.06px #333;transform-origin:0 0;transform:scaleX(0.8502)">47</span>
<span style="position:absolute;left:1062.95px;top:746.00px;white-space:pre;font-family:'Liberation Sans',sans-serif;font-size:7.62px;line-height:7.62px;font-weight:400;font-style:normal;color:#333;letter-spacing:0px;-webkit-text-stroke:0.06px #333;transform-origin:0 0;transform:scaleX(0.8502)">32</span>
<span style="position:absolute;left:1072.20px;top:755.00px;white-space:pre;font-family:'Liberation Sans',sans-serif;font-size:7.62px;line-height:7.62px;font-weight:400;font-style:normal;color:#333;letter-spacing:0px;-webkit-text-stroke:0.06px #333;transform-origin:0 0;transform:scaleX(0.8502)">67</span>
<span style="position:absolute;left:1081.45px;top:746.00px;white-space:pre;font-family:'Liberation Sans',sans-serif;font-size:7.62px;line-height:7.62px;font-weight:400;font-style:normal;color:#333;letter-spacing:0px;-webkit-text-stroke:0.06px #333;transform-origin:0 0;transform:scaleX(0.8502)">86</span>
<span style="position:absolute;left:1090.70px;top:755.00px;white-space:pre;font-family:'Liberation Sans',sans-serif;font-size:7.62px;line-height:7.62px;font-weight:400;font-style:normal;color:#333;letter-spacing:0px;-webkit-text-stroke:0.06px #333;transform-origin:0 0;transform:scaleX(0.8502)">40</span>
<span style="position:absolute;left:1099.95px;top:746.00px;white-space:pre;font-family:'Liberation Sans',sans-serif;font-size:7.62px;line-height:7.62px;font-weight:400;font-style:normal;color:#333;letter-spacing:0px;-webkit-text-stroke:0.06px #333;transform-origin:0 0;transform:scaleX(0.8502)">21</span>
<span style="position:absolute;left:1109.20px;top:755.00px;white-space:pre;font-family:'Liberation Sans',sans-serif;font-size:7.62px;line-height:7.62px;font-weight:400;font-style:normal;color:#333;letter-spacing:0px;-webkit-text-stroke:0.06px #333;transform-origin:0 0;transform:scaleX(0.8502)">36</span>
<span style="position:absolute;left:1118.45px;top:746.00px;white-space:pre;font-family:'Liberation Sans',sans-serif;font-size:7.62px;line-height:7.62px;font-weight:400;font-style:normal;color:#333;letter-spacing:0px;-webkit-text-stroke:0.06px #333;transform-origin:0 0;transform:scaleX(0.8502)">68</span>
<span style="position:absolute;left:689.20px;top:738.00px;white-space:pre;font-family:'Liberation Sans',sans-serif;font-size:7.62px;line-height:7.62px;font-weight:400;font-style:normal;color:#333;letter-spacing:0px;-webkit-text-stroke:0.06px #333;transform-origin:0 0;transform:scaleX(0.8502)">0</span>
<span style="position:absolute;left:689.20px;top:722.00px;white-space:pre;font-family:'Liberation Sans',sans-serif;font-size:7.62px;line-height:7.62px;font-weight:400;font-style:normal;color:#333;letter-spacing:0px;-webkit-text-stroke:0.06px #333;transform-origin:0 0;transform:scaleX(0.8502)">2</span>
<span style="position:absolute;left:689.20px;top:706.00px;white-space:pre;font-family:'Liberation Sans',sans-serif;font-size:7.62px;line-height:7.62px;font-weight:400;font-style:normal;color:#333;letter-spacing:0px;-webkit-text-stroke:0.06px #333;transform-origin:0 0;transform:scaleX(0.8502)">4</span>
<span style="position:absolute;left:689.20px;top:690.00px;white-space:pre;font-family:'Liberation Sans',sans-serif;font-size:7.62px;line-height:7.62px;font-weight:400;font-style:normal;color:#333;letter-spacing:0px;-webkit-text-stroke:0.06px #333;transform-origin:0 0;transform:scaleX(0.8502)">6</span>
<span style="position:absolute;left:689.20px;top:674.00px;white-space:pre;font-family:'Liberation Sans',sans-serif;font-size:7.62px;line-height:7.62px;font-weight:400;font-style:normal;color:#333;letter-spacing:0px;-webkit-text-stroke:0.06px #333;transform-origin:0 0;transform:scaleX(0.8502)">8</span>
<span style="position:absolute;left:685.60px;top:658.00px;white-space:pre;font-family:'Liberation Sans',sans-serif;font-size:7.62px;line-height:7.62px;font-weight:400;font-style:normal;color:#333;letter-spacing:0px;-webkit-text-stroke:0.06px #333;transform-origin:0 0;transform:scaleX(0.8502)">10</span>
<span style="position:absolute;left:685.60px;top:642.00px;white-space:pre;font-family:'Liberation Sans',sans-serif;font-size:7.62px;line-height:7.62px;font-weight:400;font-style:normal;color:#333;letter-spacing:0px;-webkit-text-stroke:0.06px #333;transform-origin:0 0;transform:scaleX(0.8502)">12</span>
<span style="position:absolute;left:685.60px;top:626.00px;white-space:pre;font-family:'Liberation Sans',sans-serif;font-size:7.62px;line-height:7.62px;font-weight:400;font-style:normal;color:#333;letter-spacing:0px;-webkit-text-stroke:0.06px #333;transform-origin:0 0;transform:scaleX(0.8502)">14</span>
<span style="position:absolute;left:685.60px;top:610.00px;white-space:pre;font-family:'Liberation Sans',sans-serif;font-size:7.62px;line-height:7.62px;font-weight:400;font-style:normal;color:#333;letter-spacing:0px;-webkit-text-stroke:0.06px #333;transform-origin:0 0;transform:scaleX(0.8502)">16</span>
<span style="position:absolute;left:685.60px;top:594.00px;white-space:pre;font-family:'Liberation Sans',sans-serif;font-size:7.62px;line-height:7.62px;font-weight:400;font-style:normal;color:#333;letter-spacing:0px;-webkit-text-stroke:0.06px #333;transform-origin:0 0;transform:scaleX(0.8502)">18</span>
<span style="position:absolute;left:685.60px;top:578.00px;white-space:pre;font-family:'Liberation Sans',sans-serif;font-size:7.62px;line-height:7.62px;font-weight:400;font-style:normal;color:#333;letter-spacing:0px;-webkit-text-stroke:0.06px #333;transform-origin:0 0;transform:scaleX(0.8502)">20</span>
<span style="position:absolute;left:685.60px;top:563.00px;white-space:pre;font-family:'Liberation Sans',sans-serif;font-size:7.62px;line-height:7.62px;font-weight:400;font-style:normal;color:#333;letter-spacing:0px;-webkit-text-stroke:0.06px #333;transform-origin:0 0;transform:scaleX(0.8502)">22</span>
<span style="position:absolute;left:685.60px;top:547.00px;white-space:pre;font-family:'Liberation Sans',sans-serif;font-size:7.62px;line-height:7.62px;font-weight:400;font-style:normal;color:#333;letter-spacing:0px;-webkit-text-stroke:0.06px #333;transform-origin:0 0;transform:scaleX(0.8502)">24</span>
<span style="position:absolute;left:685.60px;top:531.00px;white-space:pre;font-family:'Liberation Sans',sans-serif;font-size:7.62px;line-height:7.62px;font-weight:400;font-style:normal;color:#333;letter-spacing:0px;-webkit-text-stroke:0.06px #333;transform-origin:0 0;transform:scaleX(0.8502)">26</span>
<span style="position:absolute;left:685.60px;top:515.00px;white-space:pre;font-family:'Liberation Sans',sans-serif;font-size:7.62px;line-height:7.62px;font-weight:400;font-style:normal;color:#333;letter-spacing:0px;-webkit-text-stroke:0.06px #333;transform-origin:0 0;transform:scaleX(0.8502)">28</span>
<span style="position:absolute;left:685.60px;top:499.00px;white-space:pre;font-family:'Liberation Sans',sans-serif;font-size:7.62px;line-height:7.62px;font-weight:400;font-style:normal;color:#333;letter-spacing:0px;-webkit-text-stroke:0.06px #333;transform-origin:0 0;transform:scaleX(0.8502)">30</span>
<span style="position:absolute;left:685.60px;top:483.00px;white-space:pre;font-family:'Liberation Sans',sans-serif;font-size:7.62px;line-height:7.62px;font-weight:400;font-style:normal;color:#333;letter-spacing:0px;-webkit-text-stroke:0.06px #333;transform-origin:0 0;transform:scaleX(0.8502)">32</span>
<span style="position:absolute;left:685.60px;top:467.00px;white-space:pre;font-family:'Liberation Sans',sans-serif;font-size:7.62px;line-height:7.62px;font-weight:400;font-style:normal;color:#333;letter-spacing:0px;-webkit-text-stroke:0.06px #333;transform-origin:0 0;transform:scaleX(0.8502)">34</span>
<span style="position:absolute;left:685.60px;top:451.00px;white-space:pre;font-family:'Liberation Sans',sans-serif;font-size:7.62px;line-height:7.62px;font-weight:400;font-style:normal;color:#333;letter-spacing:0px;-webkit-text-stroke:0.06px #333;transform-origin:0 0;transform:scaleX(0.8502)">36</span>
<span style="position:absolute;left:685.60px;top:435.00px;white-space:pre;font-family:'Liberation Sans',sans-serif;font-size:7.62px;line-height:7.62px;font-weight:400;font-style:normal;color:#333;letter-spacing:0px;-webkit-text-stroke:0.06px #333;transform-origin:0 0;transform:scaleX(0.8502)">38</span></body></html>
